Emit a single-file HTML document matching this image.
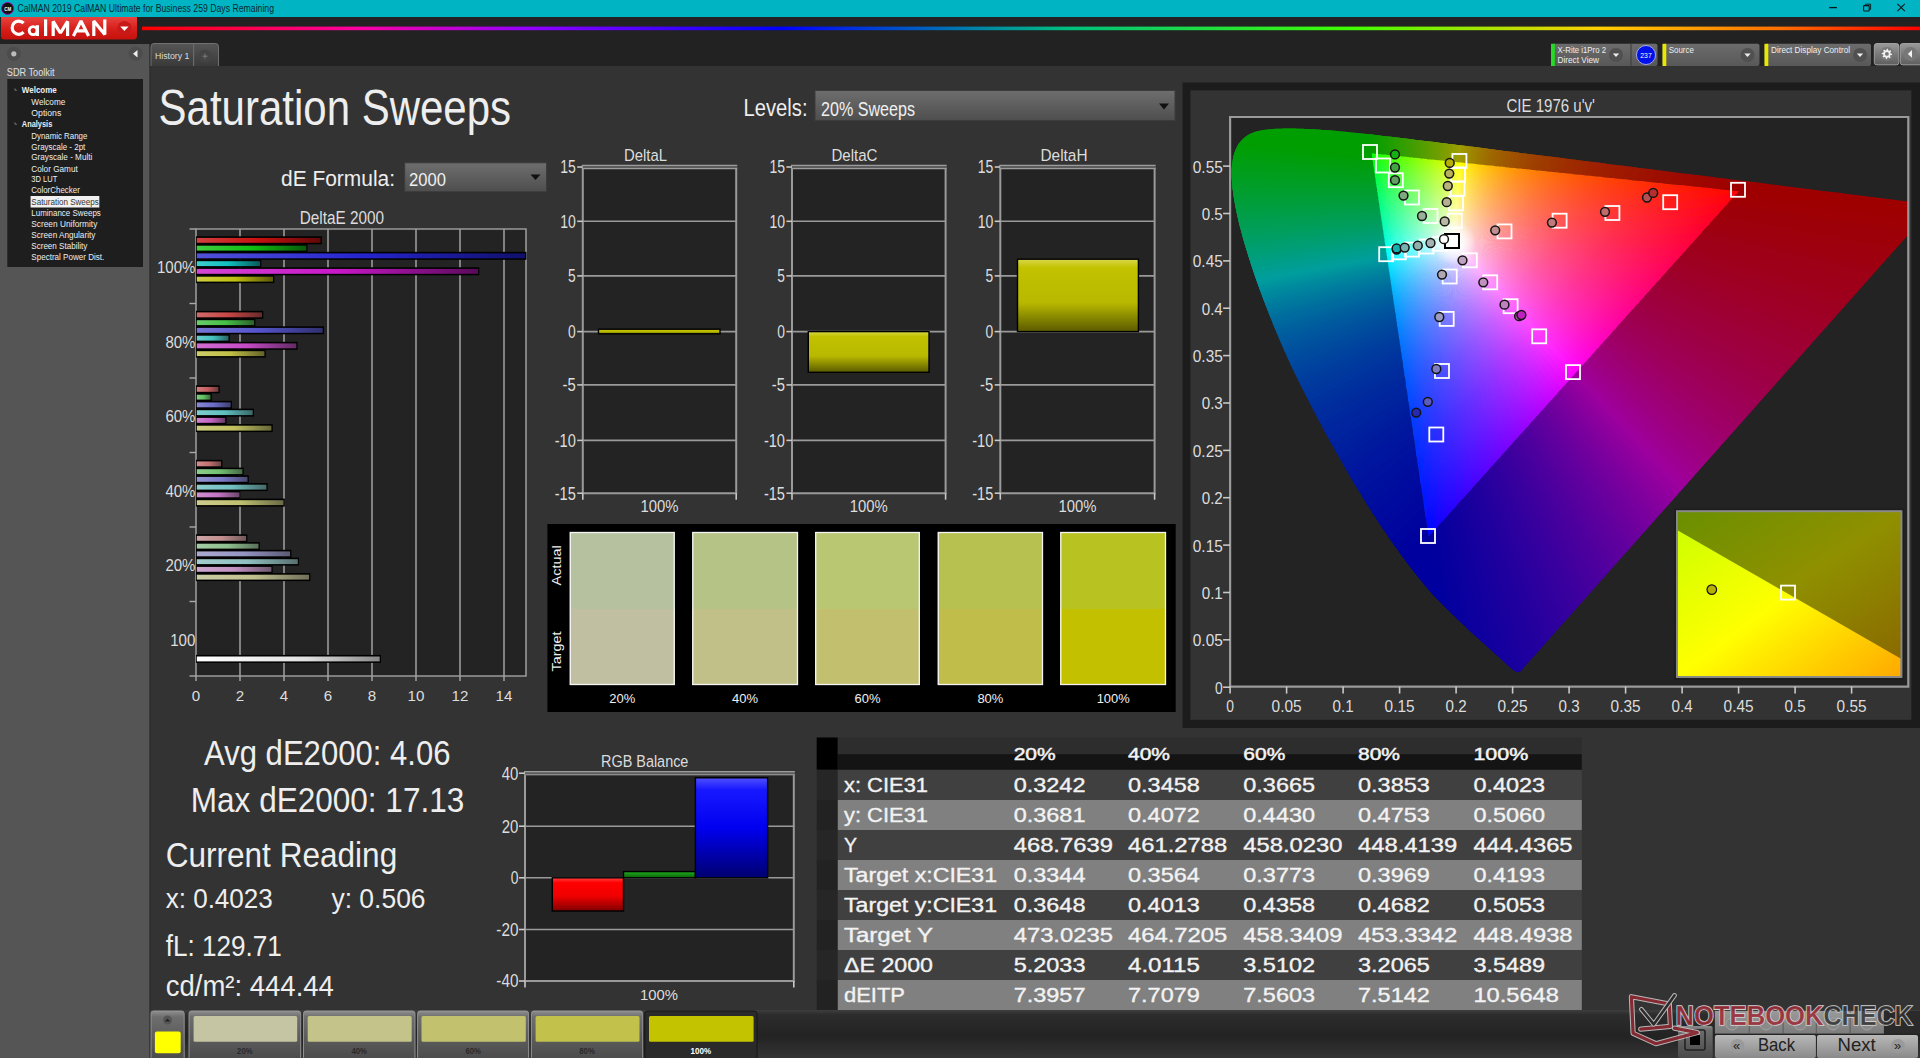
<!DOCTYPE html><html><head><meta charset="utf-8"><title>CalMAN Saturation Sweeps</title><style>html,body{margin:0;padding:0;width:1920px;height:1058px;overflow:hidden;background:#333;font-family:"Liberation Sans",sans-serif}</style></head><body><svg width="1920" height="1058" viewBox="0 0 1920 1058" style="position:absolute;left:0;top:0;z-index:1" font-family="Liberation Sans, sans-serif"><rect x="0.0" y="0.0" width="1920.0" height="1058.0" fill="#333333" /><rect x="0.0" y="17.0" width="1920.0" height="49.0" fill="#222222" /><rect x="0.0" y="0.0" width="1920.0" height="17.0" fill="#00b4c3" /><rect x="0.0" y="44.0" width="149.6" height="1014.0" fill="#555555" /><rect x="149.6" y="44.0" width="1.0" height="1014.0" fill="#2a2a2a" /><rect x="150.0" y="1010.0" width="1770.0" height="48.0" fill="url(#gBot)" /><rect x="1182.5" y="82.5" width="737.5" height="645.5" fill="#1c1c1c" /><rect x="1190.4" y="90.4" width="721.0" height="629.4" fill="#333333" /><rect x="1230.1" y="117.4" width="678.2" height="568.6" fill="#232323" /><clipPath id="chp0"><path d="M930.4 -2814.1 L1812.8 3120.7 L-1154.6 3561.8 L-2036.9 -2372.9 Z"/></clipPath><clipPath id="chp1"><path d="M-575.6 2769.0 L3432.8 -1695.6 L5665.1 308.6 L1656.7 4773.2 Z"/></clipPath><clipPath id="chp2"><path d="M4722.9 499.2 L-1245.3 -116.8 L-937.3 -3101.0 L5031.0 -2484.9 Z"/></clipPath><linearGradient id="cw0" gradientUnits="userSpaceOnUse" x1="1453.7" y1="242.6" x2="1688.9" y2="246.7"><stop offset="0" stop-color="#ffffff"/><stop offset="0.04" stop-color="#ffe0e6"/><stop offset="0.1" stop-color="#ffbcc8"/><stop offset="0.18" stop-color="#ff98aa"/><stop offset="0.3" stop-color="#ff718c"/><stop offset="0.45" stop-color="#ff4f72"/><stop offset="0.65" stop-color="#ff2e5b"/><stop offset="0.85" stop-color="#ff154b"/><stop offset="1" stop-color="#ff0242"/></linearGradient><linearGradient id="cw1" gradientUnits="userSpaceOnUse" x1="1453.7" y1="242.6" x2="1681.9" y2="254.6"><stop offset="0" stop-color="#ffffff"/><stop offset="0.04" stop-color="#ffe1e7"/><stop offset="0.1" stop-color="#ffbdcb"/><stop offset="0.18" stop-color="#ff99af"/><stop offset="0.3" stop-color="#ff7291"/><stop offset="0.45" stop-color="#ff5079"/><stop offset="0.65" stop-color="#ff2f62"/><stop offset="0.85" stop-color="#ff1553"/><stop offset="1" stop-color="#ff024a"/></linearGradient><linearGradient id="cw2" gradientUnits="userSpaceOnUse" x1="1453.7" y1="242.6" x2="1675.2" y2="262.0"><stop offset="0" stop-color="#ffffff"/><stop offset="0.04" stop-color="#ffe2e8"/><stop offset="0.1" stop-color="#ffbece"/><stop offset="0.18" stop-color="#ff9bb3"/><stop offset="0.3" stop-color="#ff7497"/><stop offset="0.45" stop-color="#ff517f"/><stop offset="0.65" stop-color="#ff3069"/><stop offset="0.85" stop-color="#ff165b"/><stop offset="1" stop-color="#ff0252"/></linearGradient><linearGradient id="cw3" gradientUnits="userSpaceOnUse" x1="1453.7" y1="242.6" x2="1668.9" y2="269.1"><stop offset="0" stop-color="#ffffff"/><stop offset="0.04" stop-color="#ffe2ea"/><stop offset="0.1" stop-color="#ffc0d1"/><stop offset="0.18" stop-color="#ff9cb7"/><stop offset="0.3" stop-color="#ff759c"/><stop offset="0.45" stop-color="#ff5385"/><stop offset="0.65" stop-color="#ff3171"/><stop offset="0.85" stop-color="#ff1662"/><stop offset="1" stop-color="#ff025a"/></linearGradient><linearGradient id="cw4" gradientUnits="userSpaceOnUse" x1="1453.7" y1="242.6" x2="1662.9" y2="275.8"><stop offset="0" stop-color="#ffffff"/><stop offset="0.04" stop-color="#ffe3eb"/><stop offset="0.1" stop-color="#ffc1d3"/><stop offset="0.18" stop-color="#ff9ebb"/><stop offset="0.3" stop-color="#ff77a2"/><stop offset="0.45" stop-color="#ff548b"/><stop offset="0.65" stop-color="#ff3278"/><stop offset="0.85" stop-color="#ff176a"/><stop offset="1" stop-color="#ff0262"/></linearGradient><linearGradient id="cw5" gradientUnits="userSpaceOnUse" x1="1453.7" y1="242.6" x2="1657.1" y2="282.2"><stop offset="0" stop-color="#ffffff"/><stop offset="0.04" stop-color="#ffe3ec"/><stop offset="0.1" stop-color="#ffc2d6"/><stop offset="0.18" stop-color="#ff9fbf"/><stop offset="0.3" stop-color="#ff78a7"/><stop offset="0.45" stop-color="#ff5591"/><stop offset="0.65" stop-color="#ff337e"/><stop offset="0.85" stop-color="#ff1771"/><stop offset="1" stop-color="#ff026a"/></linearGradient><linearGradient id="cw6" gradientUnits="userSpaceOnUse" x1="1453.7" y1="242.6" x2="1651.6" y2="288.3"><stop offset="0" stop-color="#ffffff"/><stop offset="0.04" stop-color="#ffe4ee"/><stop offset="0.1" stop-color="#ffc3d8"/><stop offset="0.18" stop-color="#ffa0c3"/><stop offset="0.3" stop-color="#ff7aac"/><stop offset="0.45" stop-color="#ff5697"/><stop offset="0.65" stop-color="#ff3485"/><stop offset="0.85" stop-color="#ff1778"/><stop offset="1" stop-color="#ff0271"/></linearGradient><linearGradient id="cw7" gradientUnits="userSpaceOnUse" x1="1453.7" y1="242.6" x2="1646.3" y2="294.2"><stop offset="0" stop-color="#ffffff"/><stop offset="0.04" stop-color="#ffe5ef"/><stop offset="0.1" stop-color="#ffc4db"/><stop offset="0.18" stop-color="#ffa2c7"/><stop offset="0.3" stop-color="#ff7bb0"/><stop offset="0.45" stop-color="#ff589d"/><stop offset="0.65" stop-color="#ff348c"/><stop offset="0.85" stop-color="#ff1880"/><stop offset="1" stop-color="#ff0279"/></linearGradient><linearGradient id="cw8" gradientUnits="userSpaceOnUse" x1="1453.7" y1="242.6" x2="1641.2" y2="299.9"><stop offset="0" stop-color="#ffffff"/><stop offset="0.04" stop-color="#ffe5f0"/><stop offset="0.1" stop-color="#ffc5dd"/><stop offset="0.18" stop-color="#ffa3ca"/><stop offset="0.3" stop-color="#ff7cb5"/><stop offset="0.45" stop-color="#ff59a3"/><stop offset="0.65" stop-color="#ff3592"/><stop offset="0.85" stop-color="#ff1887"/><stop offset="1" stop-color="#ff0280"/></linearGradient><linearGradient id="cw9" gradientUnits="userSpaceOnUse" x1="1453.7" y1="242.6" x2="1636.2" y2="305.5"><stop offset="0" stop-color="#ffffff"/><stop offset="0.04" stop-color="#ffe6f1"/><stop offset="0.1" stop-color="#ffc6e0"/><stop offset="0.18" stop-color="#ffa4ce"/><stop offset="0.3" stop-color="#ff7eba"/><stop offset="0.45" stop-color="#ff5aa9"/><stop offset="0.65" stop-color="#ff3699"/><stop offset="0.85" stop-color="#ff198e"/><stop offset="1" stop-color="#ff0288"/></linearGradient><linearGradient id="cw10" gradientUnits="userSpaceOnUse" x1="1453.7" y1="242.6" x2="1631.4" y2="310.8"><stop offset="0" stop-color="#ffffff"/><stop offset="0.04" stop-color="#ffe6f2"/><stop offset="0.1" stop-color="#ffc7e2"/><stop offset="0.18" stop-color="#ffa6d1"/><stop offset="0.3" stop-color="#ff7fbf"/><stop offset="0.45" stop-color="#ff5bae"/><stop offset="0.65" stop-color="#ff379f"/><stop offset="0.85" stop-color="#ff1995"/><stop offset="1" stop-color="#ff028f"/></linearGradient><linearGradient id="cw11" gradientUnits="userSpaceOnUse" x1="1453.7" y1="242.6" x2="1626.7" y2="316.1"><stop offset="0" stop-color="#ffffff"/><stop offset="0.04" stop-color="#ffe7f3"/><stop offset="0.1" stop-color="#ffc8e4"/><stop offset="0.18" stop-color="#ffa7d5"/><stop offset="0.3" stop-color="#ff81c3"/><stop offset="0.45" stop-color="#ff5cb4"/><stop offset="0.65" stop-color="#ff38a6"/><stop offset="0.85" stop-color="#ff1a9c"/><stop offset="1" stop-color="#ff0297"/></linearGradient><linearGradient id="cw12" gradientUnits="userSpaceOnUse" x1="1453.7" y1="242.6" x2="1622.1" y2="321.2"><stop offset="0" stop-color="#ffffff"/><stop offset="0.04" stop-color="#ffe7f4"/><stop offset="0.1" stop-color="#ffc9e7"/><stop offset="0.18" stop-color="#ffa8d8"/><stop offset="0.3" stop-color="#ff82c8"/><stop offset="0.45" stop-color="#ff5eba"/><stop offset="0.65" stop-color="#ff39ad"/><stop offset="0.85" stop-color="#ff1aa3"/><stop offset="1" stop-color="#ff029e"/></linearGradient><linearGradient id="cw13" gradientUnits="userSpaceOnUse" x1="1453.7" y1="242.6" x2="1617.6" y2="326.2"><stop offset="0" stop-color="#ffffff"/><stop offset="0.04" stop-color="#ffe8f5"/><stop offset="0.1" stop-color="#ffcae9"/><stop offset="0.18" stop-color="#ffa9dc"/><stop offset="0.3" stop-color="#ff83cd"/><stop offset="0.45" stop-color="#ff5fc0"/><stop offset="0.65" stop-color="#ff39b3"/><stop offset="0.85" stop-color="#ff1aab"/><stop offset="1" stop-color="#ff02a6"/></linearGradient><linearGradient id="cw14" gradientUnits="userSpaceOnUse" x1="1453.7" y1="242.6" x2="1613.2" y2="331.1"><stop offset="0" stop-color="#ffffff"/><stop offset="0.04" stop-color="#ffe8f6"/><stop offset="0.1" stop-color="#ffcbeb"/><stop offset="0.18" stop-color="#ffabdf"/><stop offset="0.3" stop-color="#ff85d1"/><stop offset="0.45" stop-color="#ff60c5"/><stop offset="0.65" stop-color="#ff3aba"/><stop offset="0.85" stop-color="#ff1bb2"/><stop offset="1" stop-color="#ff02ad"/></linearGradient><linearGradient id="cw15" gradientUnits="userSpaceOnUse" x1="1453.7" y1="242.6" x2="1608.9" y2="335.9"><stop offset="0" stop-color="#ffffff"/><stop offset="0.04" stop-color="#ffe9f7"/><stop offset="0.1" stop-color="#ffcced"/><stop offset="0.18" stop-color="#fface2"/><stop offset="0.3" stop-color="#ff86d6"/><stop offset="0.45" stop-color="#ff61cb"/><stop offset="0.65" stop-color="#ff3bc1"/><stop offset="0.85" stop-color="#ff1bb9"/><stop offset="1" stop-color="#ff02b5"/></linearGradient><linearGradient id="cw16" gradientUnits="userSpaceOnUse" x1="1453.7" y1="242.6" x2="1604.6" y2="340.6"><stop offset="0" stop-color="#ffffff"/><stop offset="0.04" stop-color="#ffe9f8"/><stop offset="0.1" stop-color="#ffcdef"/><stop offset="0.18" stop-color="#ffade6"/><stop offset="0.3" stop-color="#ff87db"/><stop offset="0.45" stop-color="#ff63d1"/><stop offset="0.65" stop-color="#ff3cc8"/><stop offset="0.85" stop-color="#ff1cc1"/><stop offset="1" stop-color="#ff02bd"/></linearGradient><linearGradient id="cw17" gradientUnits="userSpaceOnUse" x1="1453.7" y1="242.6" x2="1600.4" y2="345.3"><stop offset="0" stop-color="#ffffff"/><stop offset="0.04" stop-color="#ffeaf9"/><stop offset="0.1" stop-color="#ffcef1"/><stop offset="0.18" stop-color="#ffafe9"/><stop offset="0.3" stop-color="#ff89e0"/><stop offset="0.45" stop-color="#ff64d7"/><stop offset="0.65" stop-color="#ff3dcf"/><stop offset="0.85" stop-color="#ff1cc9"/><stop offset="1" stop-color="#ff02c5"/></linearGradient><linearGradient id="cw18" gradientUnits="userSpaceOnUse" x1="1453.7" y1="242.6" x2="1596.2" y2="350.0"><stop offset="0" stop-color="#ffffff"/><stop offset="0.04" stop-color="#ffeafa"/><stop offset="0.1" stop-color="#ffcff4"/><stop offset="0.18" stop-color="#ffb0ed"/><stop offset="0.3" stop-color="#ff8ae4"/><stop offset="0.45" stop-color="#ff65dd"/><stop offset="0.65" stop-color="#ff3ed6"/><stop offset="0.85" stop-color="#ff1dd1"/><stop offset="1" stop-color="#ff02ce"/></linearGradient><linearGradient id="cw19" gradientUnits="userSpaceOnUse" x1="1453.7" y1="242.6" x2="1592.0" y2="354.7"><stop offset="0" stop-color="#ffffff"/><stop offset="0.04" stop-color="#ffebfb"/><stop offset="0.1" stop-color="#ffd0f6"/><stop offset="0.18" stop-color="#ffb1f0"/><stop offset="0.3" stop-color="#ff8ce9"/><stop offset="0.45" stop-color="#ff67e3"/><stop offset="0.65" stop-color="#ff3fdd"/><stop offset="0.85" stop-color="#ff1dd9"/><stop offset="1" stop-color="#ff02d7"/></linearGradient><linearGradient id="cw20" gradientUnits="userSpaceOnUse" x1="1453.7" y1="242.6" x2="1587.9" y2="359.3"><stop offset="0" stop-color="#ffffff"/><stop offset="0.04" stop-color="#ffebfc"/><stop offset="0.1" stop-color="#ffd1f8"/><stop offset="0.18" stop-color="#ffb2f4"/><stop offset="0.3" stop-color="#ff8dee"/><stop offset="0.45" stop-color="#ff68ea"/><stop offset="0.65" stop-color="#ff40e5"/><stop offset="0.85" stop-color="#ff1ee2"/><stop offset="1" stop-color="#ff02e0"/></linearGradient><linearGradient id="cw21" gradientUnits="userSpaceOnUse" x1="1453.7" y1="242.6" x2="1583.7" y2="363.9"><stop offset="0" stop-color="#ffffff"/><stop offset="0.04" stop-color="#ffecfd"/><stop offset="0.1" stop-color="#ffd2fa"/><stop offset="0.18" stop-color="#ffb4f7"/><stop offset="0.3" stop-color="#ff8ff4"/><stop offset="0.45" stop-color="#ff6af0"/><stop offset="0.65" stop-color="#ff41ed"/><stop offset="0.85" stop-color="#ff1eea"/><stop offset="1" stop-color="#ff02e9"/></linearGradient><linearGradient id="cw22" gradientUnits="userSpaceOnUse" x1="1453.7" y1="242.6" x2="1579.6" y2="368.5"><stop offset="0" stop-color="#ffffff"/><stop offset="0.04" stop-color="#ffecfe"/><stop offset="0.1" stop-color="#ffd3fc"/><stop offset="0.18" stop-color="#ffb5fb"/><stop offset="0.3" stop-color="#ff90f9"/><stop offset="0.45" stop-color="#ff6bf7"/><stop offset="0.65" stop-color="#ff42f5"/><stop offset="0.85" stop-color="#ff1ff4"/><stop offset="1" stop-color="#ff02f3"/></linearGradient><linearGradient id="cw23" gradientUnits="userSpaceOnUse" x1="1453.7" y1="242.6" x2="1575.4" y2="373.2"><stop offset="0" stop-color="#ffffff"/><stop offset="0.04" stop-color="#ffedff"/><stop offset="0.1" stop-color="#ffd4ff"/><stop offset="0.18" stop-color="#ffb7fe"/><stop offset="0.3" stop-color="#ff92fe"/><stop offset="0.45" stop-color="#ff6dfe"/><stop offset="0.65" stop-color="#ff44fd"/><stop offset="0.85" stop-color="#ff20fd"/><stop offset="1" stop-color="#ff02fd"/></linearGradient><linearGradient id="cw24" gradientUnits="userSpaceOnUse" x1="1453.7" y1="242.6" x2="1571.2" y2="377.8"><stop offset="0" stop-color="#ffffff"/><stop offset="0.04" stop-color="#feecff"/><stop offset="0.1" stop-color="#fdd3ff"/><stop offset="0.18" stop-color="#fcb6ff"/><stop offset="0.3" stop-color="#fa91ff"/><stop offset="0.45" stop-color="#f96cff"/><stop offset="0.65" stop-color="#f843ff"/><stop offset="0.85" stop-color="#f71fff"/><stop offset="1" stop-color="#f602ff"/></linearGradient><linearGradient id="cw25" gradientUnits="userSpaceOnUse" x1="1453.7" y1="242.6" x2="1567.0" y2="382.5"><stop offset="0" stop-color="#ffffff"/><stop offset="0.04" stop-color="#fdecff"/><stop offset="0.1" stop-color="#fbd2ff"/><stop offset="0.18" stop-color="#f8b4ff"/><stop offset="0.3" stop-color="#f590ff"/><stop offset="0.45" stop-color="#f26aff"/><stop offset="0.65" stop-color="#ef42ff"/><stop offset="0.85" stop-color="#ed1fff"/><stop offset="1" stop-color="#ec02ff"/></linearGradient><linearGradient id="cw26" gradientUnits="userSpaceOnUse" x1="1453.7" y1="242.6" x2="1562.7" y2="387.3"><stop offset="0" stop-color="#ffffff"/><stop offset="0.04" stop-color="#fcebff"/><stop offset="0.1" stop-color="#f8d1ff"/><stop offset="0.18" stop-color="#f4b3ff"/><stop offset="0.3" stop-color="#f08eff"/><stop offset="0.45" stop-color="#eb69ff"/><stop offset="0.65" stop-color="#e741ff"/><stop offset="0.85" stop-color="#e41eff"/><stop offset="1" stop-color="#e202ff"/></linearGradient><linearGradient id="cw27" gradientUnits="userSpaceOnUse" x1="1453.7" y1="242.6" x2="1558.4" y2="392.1"><stop offset="0" stop-color="#ffffff"/><stop offset="0.04" stop-color="#fbebff"/><stop offset="0.1" stop-color="#f6d0ff"/><stop offset="0.18" stop-color="#f1b2ff"/><stop offset="0.3" stop-color="#ea8dff"/><stop offset="0.45" stop-color="#e568ff"/><stop offset="0.65" stop-color="#df40ff"/><stop offset="0.85" stop-color="#db1eff"/><stop offset="1" stop-color="#d902ff"/></linearGradient><linearGradient id="cw28" gradientUnits="userSpaceOnUse" x1="1453.7" y1="242.6" x2="1554.0" y2="397.0"><stop offset="0" stop-color="#ffffff"/><stop offset="0.04" stop-color="#faeaff"/><stop offset="0.1" stop-color="#f4cfff"/><stop offset="0.18" stop-color="#edb1ff"/><stop offset="0.3" stop-color="#e58bff"/><stop offset="0.45" stop-color="#de66ff"/><stop offset="0.65" stop-color="#d73fff"/><stop offset="0.85" stop-color="#d21dff"/><stop offset="1" stop-color="#cf02ff"/></linearGradient><linearGradient id="cw29" gradientUnits="userSpaceOnUse" x1="1453.7" y1="242.6" x2="1549.5" y2="402.0"><stop offset="0" stop-color="#ffffff"/><stop offset="0.04" stop-color="#f9eaff"/><stop offset="0.1" stop-color="#f1ceff"/><stop offset="0.18" stop-color="#e9afff"/><stop offset="0.3" stop-color="#e08aff"/><stop offset="0.45" stop-color="#d765ff"/><stop offset="0.65" stop-color="#cf3eff"/><stop offset="0.85" stop-color="#c91dff"/><stop offset="1" stop-color="#c602ff"/></linearGradient><linearGradient id="cw30" gradientUnits="userSpaceOnUse" x1="1453.7" y1="242.6" x2="1544.9" y2="407.2"><stop offset="0" stop-color="#ffffff"/><stop offset="0.04" stop-color="#f8e9ff"/><stop offset="0.1" stop-color="#efcdff"/><stop offset="0.18" stop-color="#e6aeff"/><stop offset="0.3" stop-color="#db89ff"/><stop offset="0.45" stop-color="#d164ff"/><stop offset="0.65" stop-color="#c73dff"/><stop offset="0.85" stop-color="#c01cff"/><stop offset="1" stop-color="#bc02ff"/></linearGradient><linearGradient id="cw31" gradientUnits="userSpaceOnUse" x1="1453.7" y1="242.6" x2="1540.2" y2="412.4"><stop offset="0" stop-color="#ffffff"/><stop offset="0.04" stop-color="#f7e9ff"/><stop offset="0.1" stop-color="#edcdff"/><stop offset="0.18" stop-color="#e2adff"/><stop offset="0.3" stop-color="#d587ff"/><stop offset="0.45" stop-color="#ca62ff"/><stop offset="0.65" stop-color="#bf3cff"/><stop offset="0.85" stop-color="#b81cff"/><stop offset="1" stop-color="#b302ff"/></linearGradient><linearGradient id="cw32" gradientUnits="userSpaceOnUse" x1="1453.7" y1="242.6" x2="1535.4" y2="417.8"><stop offset="0" stop-color="#ffffff"/><stop offset="0.04" stop-color="#f6e8ff"/><stop offset="0.1" stop-color="#eaccff"/><stop offset="0.18" stop-color="#deacff"/><stop offset="0.3" stop-color="#d086ff"/><stop offset="0.45" stop-color="#c361ff"/><stop offset="0.65" stop-color="#b73bff"/><stop offset="0.85" stop-color="#af1bff"/><stop offset="1" stop-color="#aa02ff"/></linearGradient><linearGradient id="cw33" gradientUnits="userSpaceOnUse" x1="1453.7" y1="242.6" x2="1530.4" y2="423.3"><stop offset="0" stop-color="#ffffff"/><stop offset="0.04" stop-color="#f5e8ff"/><stop offset="0.1" stop-color="#e8cbff"/><stop offset="0.18" stop-color="#daaaff"/><stop offset="0.3" stop-color="#ca84ff"/><stop offset="0.45" stop-color="#bd60ff"/><stop offset="0.65" stop-color="#af3aff"/><stop offset="0.85" stop-color="#a61bff"/><stop offset="1" stop-color="#a102ff"/></linearGradient><linearGradient id="cw34" gradientUnits="userSpaceOnUse" x1="1453.7" y1="242.6" x2="1525.3" y2="429.0"><stop offset="0" stop-color="#ffffff"/><stop offset="0.04" stop-color="#f3e7ff"/><stop offset="0.1" stop-color="#e5caff"/><stop offset="0.18" stop-color="#d6a9ff"/><stop offset="0.3" stop-color="#c583ff"/><stop offset="0.45" stop-color="#b65fff"/><stop offset="0.65" stop-color="#a839ff"/><stop offset="0.85" stop-color="#9d1aff"/><stop offset="1" stop-color="#9802ff"/></linearGradient><linearGradient id="cw35" gradientUnits="userSpaceOnUse" x1="1453.7" y1="242.6" x2="1519.9" y2="435.0"><stop offset="0" stop-color="#ffffff"/><stop offset="0.04" stop-color="#f2e7ff"/><stop offset="0.1" stop-color="#e2c9ff"/><stop offset="0.18" stop-color="#d2a8ff"/><stop offset="0.3" stop-color="#bf82ff"/><stop offset="0.45" stop-color="#af5dff"/><stop offset="0.65" stop-color="#a038ff"/><stop offset="0.85" stop-color="#951aff"/><stop offset="1" stop-color="#8f02ff"/></linearGradient><linearGradient id="cw36" gradientUnits="userSpaceOnUse" x1="1453.7" y1="242.6" x2="1514.4" y2="441.1"><stop offset="0" stop-color="#ffffff"/><stop offset="0.04" stop-color="#f1e6ff"/><stop offset="0.1" stop-color="#e0c8ff"/><stop offset="0.18" stop-color="#cea6ff"/><stop offset="0.3" stop-color="#ba80ff"/><stop offset="0.45" stop-color="#a85cff"/><stop offset="0.65" stop-color="#9737ff"/><stop offset="0.85" stop-color="#8c19ff"/><stop offset="1" stop-color="#8502ff"/></linearGradient><linearGradient id="cw37" gradientUnits="userSpaceOnUse" x1="1453.7" y1="242.6" x2="1508.6" y2="447.6"><stop offset="0" stop-color="#ffffff"/><stop offset="0.04" stop-color="#f0e6ff"/><stop offset="0.1" stop-color="#ddc6ff"/><stop offset="0.18" stop-color="#c9a5ff"/><stop offset="0.3" stop-color="#b47fff"/><stop offset="0.45" stop-color="#a15bff"/><stop offset="0.65" stop-color="#8f37ff"/><stop offset="0.85" stop-color="#8319ff"/><stop offset="1" stop-color="#7c02ff"/></linearGradient><linearGradient id="cw38" gradientUnits="userSpaceOnUse" x1="1453.7" y1="242.6" x2="1502.6" y2="454.3"><stop offset="0" stop-color="#ffffff"/><stop offset="0.04" stop-color="#eee5ff"/><stop offset="0.1" stop-color="#dac5ff"/><stop offset="0.18" stop-color="#c5a4ff"/><stop offset="0.3" stop-color="#ae7dff"/><stop offset="0.45" stop-color="#9a59ff"/><stop offset="0.65" stop-color="#8736ff"/><stop offset="0.85" stop-color="#7a18ff"/><stop offset="1" stop-color="#7202ff"/></linearGradient><linearGradient id="cw39" gradientUnits="userSpaceOnUse" x1="1453.7" y1="242.6" x2="1496.2" y2="461.4"><stop offset="0" stop-color="#ffffff"/><stop offset="0.04" stop-color="#ede5ff"/><stop offset="0.1" stop-color="#d7c4ff"/><stop offset="0.18" stop-color="#c1a2ff"/><stop offset="0.3" stop-color="#a87cff"/><stop offset="0.45" stop-color="#9258ff"/><stop offset="0.65" stop-color="#7e35ff"/><stop offset="0.85" stop-color="#7018ff"/><stop offset="1" stop-color="#6902ff"/></linearGradient><linearGradient id="cw40" gradientUnits="userSpaceOnUse" x1="1453.7" y1="242.6" x2="1489.5" y2="468.8"><stop offset="0" stop-color="#ffffff"/><stop offset="0.04" stop-color="#ebe4ff"/><stop offset="0.1" stop-color="#d4c3ff"/><stop offset="0.18" stop-color="#bca1ff"/><stop offset="0.3" stop-color="#a27aff"/><stop offset="0.45" stop-color="#8b57ff"/><stop offset="0.65" stop-color="#7634ff"/><stop offset="0.85" stop-color="#6717ff"/><stop offset="1" stop-color="#5f02ff"/></linearGradient><linearGradient id="cw41" gradientUnits="userSpaceOnUse" x1="1453.7" y1="242.6" x2="1482.5" y2="476.7"><stop offset="0" stop-color="#ffffff"/><stop offset="0.04" stop-color="#eae3ff"/><stop offset="0.1" stop-color="#d1c2ff"/><stop offset="0.18" stop-color="#b79fff"/><stop offset="0.3" stop-color="#9b78ff"/><stop offset="0.45" stop-color="#8355ff"/><stop offset="0.65" stop-color="#6d33ff"/><stop offset="0.85" stop-color="#5d17ff"/><stop offset="1" stop-color="#5402ff"/></linearGradient><linearGradient id="cw42" gradientUnits="userSpaceOnUse" x1="1453.7" y1="242.6" x2="1474.9" y2="485.1"><stop offset="0" stop-color="#ffffff"/><stop offset="0.04" stop-color="#e8e3ff"/><stop offset="0.1" stop-color="#cdc0ff"/><stop offset="0.18" stop-color="#b29dff"/><stop offset="0.3" stop-color="#9477ff"/><stop offset="0.45" stop-color="#7b54ff"/><stop offset="0.65" stop-color="#6332ff"/><stop offset="0.85" stop-color="#5317ff"/><stop offset="1" stop-color="#4902ff"/></linearGradient><linearGradient id="cw43" gradientUnits="userSpaceOnUse" x1="1453.7" y1="242.6" x2="1466.9" y2="494.1"><stop offset="0" stop-color="#ffffff"/><stop offset="0.04" stop-color="#e6e2ff"/><stop offset="0.1" stop-color="#c9bfff"/><stop offset="0.18" stop-color="#ac9cff"/><stop offset="0.3" stop-color="#8d75ff"/><stop offset="0.45" stop-color="#7252ff"/><stop offset="0.65" stop-color="#5931ff"/><stop offset="0.85" stop-color="#4816ff"/><stop offset="1" stop-color="#3e02ff"/></linearGradient><linearGradient id="cw44" gradientUnits="userSpaceOnUse" x1="1453.7" y1="242.6" x2="1458.3" y2="503.7"><stop offset="0" stop-color="#ffffff"/><stop offset="0.04" stop-color="#e5e1ff"/><stop offset="0.1" stop-color="#c6beff"/><stop offset="0.18" stop-color="#a79aff"/><stop offset="0.3" stop-color="#8673ff"/><stop offset="0.45" stop-color="#6951ff"/><stop offset="0.65" stop-color="#4f30ff"/><stop offset="0.85" stop-color="#3c16ff"/><stop offset="1" stop-color="#3201ff"/></linearGradient><linearGradient id="cw45" gradientUnits="userSpaceOnUse" x1="1453.7" y1="242.6" x2="1449.0" y2="514.0"><stop offset="0" stop-color="#ffffff"/><stop offset="0.04" stop-color="#e3e0ff"/><stop offset="0.1" stop-color="#c2bcff"/><stop offset="0.18" stop-color="#a198ff"/><stop offset="0.3" stop-color="#7e71ff"/><stop offset="0.45" stop-color="#604fff"/><stop offset="0.65" stop-color="#442fff"/><stop offset="0.85" stop-color="#3015ff"/><stop offset="1" stop-color="#2501ff"/></linearGradient><linearGradient id="cw46" gradientUnits="userSpaceOnUse" x1="1453.7" y1="242.6" x2="1438.9" y2="525.2"><stop offset="0" stop-color="#ffffff"/><stop offset="0.04" stop-color="#e0dfff"/><stop offset="0.1" stop-color="#bdbbff"/><stop offset="0.18" stop-color="#9a96ff"/><stop offset="0.3" stop-color="#766fff"/><stop offset="0.45" stop-color="#564eff"/><stop offset="0.65" stop-color="#382eff"/><stop offset="0.85" stop-color="#2314ff"/><stop offset="1" stop-color="#1501ff"/></linearGradient><linearGradient id="cw47" gradientUnits="userSpaceOnUse" x1="1453.7" y1="242.6" x2="1428.2" y2="534.1"><stop offset="0" stop-color="#ffffff"/><stop offset="0.04" stop-color="#dedfff"/><stop offset="0.1" stop-color="#b9b9ff"/><stop offset="0.18" stop-color="#9495ff"/><stop offset="0.3" stop-color="#6e6eff"/><stop offset="0.45" stop-color="#4c4dff"/><stop offset="0.65" stop-color="#2d2dff"/><stop offset="0.85" stop-color="#1415ff"/><stop offset="1" stop-color="#0103ff"/></linearGradient><linearGradient id="cw48" gradientUnits="userSpaceOnUse" x1="1453.7" y1="242.6" x2="1422.6" y2="496.2"><stop offset="0" stop-color="#ffffff"/><stop offset="0.04" stop-color="#e1e3ff"/><stop offset="0.1" stop-color="#bec1ff"/><stop offset="0.18" stop-color="#9a9fff"/><stop offset="0.3" stop-color="#747bff"/><stop offset="0.45" stop-color="#515aff"/><stop offset="0.65" stop-color="#303cff"/><stop offset="0.85" stop-color="#1625ff"/><stop offset="1" stop-color="#0117ff"/></linearGradient><linearGradient id="cw49" gradientUnits="userSpaceOnUse" x1="1453.7" y1="242.6" x2="1418.2" y2="466.8"><stop offset="0" stop-color="#ffffff"/><stop offset="0.04" stop-color="#e3e6ff"/><stop offset="0.1" stop-color="#c2c7ff"/><stop offset="0.18" stop-color="#a0a8ff"/><stop offset="0.3" stop-color="#7985ff"/><stop offset="0.45" stop-color="#5666ff"/><stop offset="0.65" stop-color="#3348ff"/><stop offset="0.85" stop-color="#1732ff"/><stop offset="1" stop-color="#0125ff"/></linearGradient><linearGradient id="cw50" gradientUnits="userSpaceOnUse" x1="1453.7" y1="242.6" x2="1414.7" y2="443.3"><stop offset="0" stop-color="#ffffff"/><stop offset="0.04" stop-color="#e5e8ff"/><stop offset="0.1" stop-color="#c6cdff"/><stop offset="0.18" stop-color="#a4afff"/><stop offset="0.3" stop-color="#7d8eff"/><stop offset="0.45" stop-color="#5a70ff"/><stop offset="0.65" stop-color="#3653ff"/><stop offset="0.85" stop-color="#183eff"/><stop offset="1" stop-color="#0131ff"/></linearGradient><linearGradient id="cw51" gradientUnits="userSpaceOnUse" x1="1453.7" y1="242.6" x2="1411.8" y2="424.0"><stop offset="0" stop-color="#ffffff"/><stop offset="0.04" stop-color="#e7ebff"/><stop offset="0.1" stop-color="#c8d1ff"/><stop offset="0.18" stop-color="#a8b6ff"/><stop offset="0.3" stop-color="#8196ff"/><stop offset="0.45" stop-color="#5d79ff"/><stop offset="0.65" stop-color="#385dff"/><stop offset="0.85" stop-color="#1a48ff"/><stop offset="1" stop-color="#023cff"/></linearGradient><linearGradient id="cw52" gradientUnits="userSpaceOnUse" x1="1453.7" y1="242.6" x2="1409.4" y2="407.9"><stop offset="0" stop-color="#ffffff"/><stop offset="0.04" stop-color="#e8ecff"/><stop offset="0.1" stop-color="#cbd5ff"/><stop offset="0.18" stop-color="#abbbff"/><stop offset="0.3" stop-color="#859dff"/><stop offset="0.45" stop-color="#6081ff"/><stop offset="0.65" stop-color="#3b66ff"/><stop offset="0.85" stop-color="#1b51ff"/><stop offset="1" stop-color="#0245ff"/></linearGradient><linearGradient id="cw53" gradientUnits="userSpaceOnUse" x1="1453.7" y1="242.6" x2="1407.4" y2="394.1"><stop offset="0" stop-color="#ffffff"/><stop offset="0.04" stop-color="#e9eeff"/><stop offset="0.1" stop-color="#cdd8ff"/><stop offset="0.18" stop-color="#aec0ff"/><stop offset="0.3" stop-color="#88a4ff"/><stop offset="0.45" stop-color="#6389ff"/><stop offset="0.65" stop-color="#3d6eff"/><stop offset="0.85" stop-color="#1c5aff"/><stop offset="1" stop-color="#024eff"/></linearGradient><linearGradient id="cw54" gradientUnits="userSpaceOnUse" x1="1453.7" y1="242.6" x2="1405.6" y2="382.3"><stop offset="0" stop-color="#ffffff"/><stop offset="0.04" stop-color="#eaefff"/><stop offset="0.1" stop-color="#cfdbff"/><stop offset="0.18" stop-color="#b0c4ff"/><stop offset="0.3" stop-color="#8ba9ff"/><stop offset="0.45" stop-color="#668fff"/><stop offset="0.65" stop-color="#3f75ff"/><stop offset="0.85" stop-color="#1d62ff"/><stop offset="1" stop-color="#0256ff"/></linearGradient><linearGradient id="cw55" gradientUnits="userSpaceOnUse" x1="1453.7" y1="242.6" x2="1404.1" y2="371.9"><stop offset="0" stop-color="#ffffff"/><stop offset="0.04" stop-color="#ebf1ff"/><stop offset="0.1" stop-color="#d1deff"/><stop offset="0.18" stop-color="#b3c8ff"/><stop offset="0.3" stop-color="#8eafff"/><stop offset="0.45" stop-color="#6996ff"/><stop offset="0.65" stop-color="#417dff"/><stop offset="0.85" stop-color="#1e69ff"/><stop offset="1" stop-color="#025eff"/></linearGradient><linearGradient id="cw56" gradientUnits="userSpaceOnUse" x1="1453.7" y1="242.6" x2="1402.7" y2="362.7"><stop offset="0" stop-color="#ffffff"/><stop offset="0.04" stop-color="#ecf2ff"/><stop offset="0.1" stop-color="#d2e0ff"/><stop offset="0.18" stop-color="#b5ccff"/><stop offset="0.3" stop-color="#90b4ff"/><stop offset="0.45" stop-color="#6b9cff"/><stop offset="0.65" stop-color="#4283ff"/><stop offset="0.85" stop-color="#1f70ff"/><stop offset="1" stop-color="#0265ff"/></linearGradient><linearGradient id="cw57" gradientUnits="userSpaceOnUse" x1="1453.7" y1="242.6" x2="1401.5" y2="354.6"><stop offset="0" stop-color="#ffffff"/><stop offset="0.04" stop-color="#ecf3ff"/><stop offset="0.1" stop-color="#d4e2ff"/><stop offset="0.18" stop-color="#b7cfff"/><stop offset="0.3" stop-color="#93b8ff"/><stop offset="0.45" stop-color="#6da1ff"/><stop offset="0.65" stop-color="#4489ff"/><stop offset="0.85" stop-color="#2077ff"/><stop offset="1" stop-color="#026cff"/></linearGradient><linearGradient id="cw58" gradientUnits="userSpaceOnUse" x1="1453.7" y1="242.6" x2="1400.4" y2="347.2"><stop offset="0" stop-color="#ffffff"/><stop offset="0.04" stop-color="#edf3ff"/><stop offset="0.1" stop-color="#d5e4ff"/><stop offset="0.18" stop-color="#b9d2ff"/><stop offset="0.3" stop-color="#95bcff"/><stop offset="0.45" stop-color="#6fa6ff"/><stop offset="0.65" stop-color="#468fff"/><stop offset="0.85" stop-color="#217dff"/><stop offset="1" stop-color="#0272ff"/></linearGradient><linearGradient id="cw59" gradientUnits="userSpaceOnUse" x1="1453.7" y1="242.6" x2="1399.4" y2="340.6"><stop offset="0" stop-color="#ffffff"/><stop offset="0.04" stop-color="#eef4ff"/><stop offset="0.1" stop-color="#d6e6ff"/><stop offset="0.18" stop-color="#bad5ff"/><stop offset="0.3" stop-color="#97c0ff"/><stop offset="0.45" stop-color="#71abff"/><stop offset="0.65" stop-color="#4795ff"/><stop offset="0.85" stop-color="#2283ff"/><stop offset="1" stop-color="#0279ff"/></linearGradient><linearGradient id="cw60" gradientUnits="userSpaceOnUse" x1="1453.7" y1="242.6" x2="1398.5" y2="334.5"><stop offset="0" stop-color="#ffffff"/><stop offset="0.04" stop-color="#eef5ff"/><stop offset="0.1" stop-color="#d7e8ff"/><stop offset="0.18" stop-color="#bcd8ff"/><stop offset="0.3" stop-color="#99c4ff"/><stop offset="0.45" stop-color="#73afff"/><stop offset="0.65" stop-color="#499aff"/><stop offset="0.85" stop-color="#2289ff"/><stop offset="1" stop-color="#027fff"/></linearGradient><linearGradient id="cw61" gradientUnits="userSpaceOnUse" x1="1453.7" y1="242.6" x2="1397.7" y2="328.9"><stop offset="0" stop-color="#ffffff"/><stop offset="0.04" stop-color="#eff6ff"/><stop offset="0.1" stop-color="#d8e9ff"/><stop offset="0.18" stop-color="#bddaff"/><stop offset="0.3" stop-color="#9ac7ff"/><stop offset="0.45" stop-color="#75b4ff"/><stop offset="0.65" stop-color="#4a9fff"/><stop offset="0.85" stop-color="#238fff"/><stop offset="1" stop-color="#0285ff"/></linearGradient><linearGradient id="cw62" gradientUnits="userSpaceOnUse" x1="1453.7" y1="242.6" x2="1396.9" y2="323.7"><stop offset="0" stop-color="#ffffff"/><stop offset="0.04" stop-color="#eff6ff"/><stop offset="0.1" stop-color="#d9eaff"/><stop offset="0.18" stop-color="#bfdcff"/><stop offset="0.3" stop-color="#9ccaff"/><stop offset="0.45" stop-color="#77b8ff"/><stop offset="0.65" stop-color="#4ca4ff"/><stop offset="0.85" stop-color="#2494ff"/><stop offset="1" stop-color="#028aff"/></linearGradient><linearGradient id="cw63" gradientUnits="userSpaceOnUse" x1="1453.7" y1="242.6" x2="1396.2" y2="318.9"><stop offset="0" stop-color="#ffffff"/><stop offset="0.04" stop-color="#eff7ff"/><stop offset="0.1" stop-color="#daecff"/><stop offset="0.18" stop-color="#c0dfff"/><stop offset="0.3" stop-color="#9eceff"/><stop offset="0.45" stop-color="#78bcff"/><stop offset="0.65" stop-color="#4da9ff"/><stop offset="0.85" stop-color="#2599ff"/><stop offset="1" stop-color="#0290ff"/></linearGradient><linearGradient id="cw64" gradientUnits="userSpaceOnUse" x1="1453.7" y1="242.6" x2="1395.6" y2="314.5"><stop offset="0" stop-color="#ffffff"/><stop offset="0.04" stop-color="#f0f7ff"/><stop offset="0.1" stop-color="#dbedff"/><stop offset="0.18" stop-color="#c1e1ff"/><stop offset="0.3" stop-color="#9fd0ff"/><stop offset="0.45" stop-color="#7ac0ff"/><stop offset="0.65" stop-color="#4eadff"/><stop offset="0.85" stop-color="#259eff"/><stop offset="1" stop-color="#0295ff"/></linearGradient><linearGradient id="cw65" gradientUnits="userSpaceOnUse" x1="1453.7" y1="242.6" x2="1394.9" y2="310.3"><stop offset="0" stop-color="#ffffff"/><stop offset="0.04" stop-color="#f0f8ff"/><stop offset="0.1" stop-color="#dceeff"/><stop offset="0.18" stop-color="#c3e3ff"/><stop offset="0.3" stop-color="#a1d3ff"/><stop offset="0.45" stop-color="#7bc3ff"/><stop offset="0.65" stop-color="#4fb2ff"/><stop offset="0.85" stop-color="#26a3ff"/><stop offset="1" stop-color="#029aff"/></linearGradient><linearGradient id="cw66" gradientUnits="userSpaceOnUse" x1="1453.7" y1="242.6" x2="1394.3" y2="306.3"><stop offset="0" stop-color="#ffffff"/><stop offset="0.04" stop-color="#f1f8ff"/><stop offset="0.1" stop-color="#dcefff"/><stop offset="0.18" stop-color="#c4e4ff"/><stop offset="0.3" stop-color="#a2d6ff"/><stop offset="0.45" stop-color="#7dc7ff"/><stop offset="0.65" stop-color="#51b6ff"/><stop offset="0.85" stop-color="#27a8ff"/><stop offset="1" stop-color="#039fff"/></linearGradient><linearGradient id="cw67" gradientUnits="userSpaceOnUse" x1="1453.7" y1="242.6" x2="1393.8" y2="302.6"><stop offset="0" stop-color="#ffffff"/><stop offset="0.04" stop-color="#f1f9ff"/><stop offset="0.1" stop-color="#ddf0ff"/><stop offset="0.18" stop-color="#c5e6ff"/><stop offset="0.3" stop-color="#a4d9ff"/><stop offset="0.45" stop-color="#7ecaff"/><stop offset="0.65" stop-color="#52baff"/><stop offset="0.85" stop-color="#27adff"/><stop offset="1" stop-color="#03a4ff"/></linearGradient><linearGradient id="cw68" gradientUnits="userSpaceOnUse" x1="1453.7" y1="242.6" x2="1393.3" y2="299.0"><stop offset="0" stop-color="#ffffff"/><stop offset="0.04" stop-color="#f1f9ff"/><stop offset="0.1" stop-color="#def2ff"/><stop offset="0.18" stop-color="#c6e8ff"/><stop offset="0.3" stop-color="#a5dbff"/><stop offset="0.45" stop-color="#80cdff"/><stop offset="0.65" stop-color="#53beff"/><stop offset="0.85" stop-color="#28b1ff"/><stop offset="1" stop-color="#03a9ff"/></linearGradient><linearGradient id="cw69" gradientUnits="userSpaceOnUse" x1="1453.7" y1="242.6" x2="1392.8" y2="295.6"><stop offset="0" stop-color="#ffffff"/><stop offset="0.04" stop-color="#f1faff"/><stop offset="0.1" stop-color="#dff2ff"/><stop offset="0.18" stop-color="#c7eaff"/><stop offset="0.3" stop-color="#a6deff"/><stop offset="0.45" stop-color="#81d1ff"/><stop offset="0.65" stop-color="#54c2ff"/><stop offset="0.85" stop-color="#29b6ff"/><stop offset="1" stop-color="#03aeff"/></linearGradient><linearGradient id="cw70" gradientUnits="userSpaceOnUse" x1="1453.7" y1="242.6" x2="1392.3" y2="292.4"><stop offset="0" stop-color="#ffffff"/><stop offset="0.04" stop-color="#f2faff"/><stop offset="0.1" stop-color="#dff3ff"/><stop offset="0.18" stop-color="#c8ebff"/><stop offset="0.3" stop-color="#a7e0ff"/><stop offset="0.45" stop-color="#83d4ff"/><stop offset="0.65" stop-color="#55c6ff"/><stop offset="0.85" stop-color="#29bbff"/><stop offset="1" stop-color="#03b3ff"/></linearGradient><linearGradient id="cw71" gradientUnits="userSpaceOnUse" x1="1453.7" y1="242.6" x2="1391.8" y2="289.3"><stop offset="0" stop-color="#ffffff"/><stop offset="0.04" stop-color="#f2fbff"/><stop offset="0.1" stop-color="#e0f4ff"/><stop offset="0.18" stop-color="#c9edff"/><stop offset="0.3" stop-color="#a9e2ff"/><stop offset="0.45" stop-color="#84d7ff"/><stop offset="0.65" stop-color="#56caff"/><stop offset="0.85" stop-color="#2abfff"/><stop offset="1" stop-color="#03b8ff"/></linearGradient><linearGradient id="cw72" gradientUnits="userSpaceOnUse" x1="1453.7" y1="242.6" x2="1391.4" y2="286.3"><stop offset="0" stop-color="#ffffff"/><stop offset="0.04" stop-color="#f2fbff"/><stop offset="0.1" stop-color="#e0f5ff"/><stop offset="0.18" stop-color="#caeeff"/><stop offset="0.3" stop-color="#aae5ff"/><stop offset="0.45" stop-color="#85daff"/><stop offset="0.65" stop-color="#58ceff"/><stop offset="0.85" stop-color="#2bc4ff"/><stop offset="1" stop-color="#03bdff"/></linearGradient><linearGradient id="cw73" gradientUnits="userSpaceOnUse" x1="1453.7" y1="242.6" x2="1390.9" y2="283.4"><stop offset="0" stop-color="#ffffff"/><stop offset="0.04" stop-color="#f3fbff"/><stop offset="0.1" stop-color="#e1f6ff"/><stop offset="0.18" stop-color="#cbf0ff"/><stop offset="0.3" stop-color="#abe7ff"/><stop offset="0.45" stop-color="#86ddff"/><stop offset="0.65" stop-color="#59d2ff"/><stop offset="0.85" stop-color="#2bc8ff"/><stop offset="1" stop-color="#03c2ff"/></linearGradient><linearGradient id="cw74" gradientUnits="userSpaceOnUse" x1="1453.7" y1="242.6" x2="1390.5" y2="280.6"><stop offset="0" stop-color="#ffffff"/><stop offset="0.04" stop-color="#f3fcff"/><stop offset="0.1" stop-color="#e1f7ff"/><stop offset="0.18" stop-color="#cbf1ff"/><stop offset="0.3" stop-color="#ace9ff"/><stop offset="0.45" stop-color="#88e0ff"/><stop offset="0.65" stop-color="#5ad6ff"/><stop offset="0.85" stop-color="#2ccdff"/><stop offset="1" stop-color="#03c7ff"/></linearGradient><linearGradient id="cw75" gradientUnits="userSpaceOnUse" x1="1453.7" y1="242.6" x2="1390.1" y2="277.9"><stop offset="0" stop-color="#ffffff"/><stop offset="0.04" stop-color="#f3fcff"/><stop offset="0.1" stop-color="#e2f8ff"/><stop offset="0.18" stop-color="#ccf2ff"/><stop offset="0.3" stop-color="#adebff"/><stop offset="0.45" stop-color="#89e3ff"/><stop offset="0.65" stop-color="#5bdaff"/><stop offset="0.85" stop-color="#2dd1ff"/><stop offset="1" stop-color="#03ccff"/></linearGradient><linearGradient id="cw76" gradientUnits="userSpaceOnUse" x1="1453.7" y1="242.6" x2="1389.7" y2="275.2"><stop offset="0" stop-color="#ffffff"/><stop offset="0.04" stop-color="#f3fcff"/><stop offset="0.1" stop-color="#e3f9ff"/><stop offset="0.18" stop-color="#cdf4ff"/><stop offset="0.3" stop-color="#aeedff"/><stop offset="0.45" stop-color="#8ae6ff"/><stop offset="0.65" stop-color="#5cddff"/><stop offset="0.85" stop-color="#2dd6ff"/><stop offset="1" stop-color="#03d1ff"/></linearGradient><linearGradient id="cw77" gradientUnits="userSpaceOnUse" x1="1453.7" y1="242.6" x2="1389.3" y2="272.7"><stop offset="0" stop-color="#ffffff"/><stop offset="0.04" stop-color="#f4fdff"/><stop offset="0.1" stop-color="#e3f9ff"/><stop offset="0.18" stop-color="#cef5ff"/><stop offset="0.3" stop-color="#b0efff"/><stop offset="0.45" stop-color="#8be9ff"/><stop offset="0.65" stop-color="#5de1ff"/><stop offset="0.85" stop-color="#2edaff"/><stop offset="1" stop-color="#03d6ff"/></linearGradient><linearGradient id="cw78" gradientUnits="userSpaceOnUse" x1="1453.7" y1="242.6" x2="1389.0" y2="270.1"><stop offset="0" stop-color="#ffffff"/><stop offset="0.04" stop-color="#f4fdff"/><stop offset="0.1" stop-color="#e4faff"/><stop offset="0.18" stop-color="#cff7ff"/><stop offset="0.3" stop-color="#b1f2ff"/><stop offset="0.45" stop-color="#8decff"/><stop offset="0.65" stop-color="#5ee5ff"/><stop offset="0.85" stop-color="#2fdfff"/><stop offset="1" stop-color="#03dbff"/></linearGradient><linearGradient id="cw79" gradientUnits="userSpaceOnUse" x1="1453.7" y1="242.6" x2="1388.6" y2="267.6"><stop offset="0" stop-color="#ffffff"/><stop offset="0.04" stop-color="#f4fdff"/><stop offset="0.1" stop-color="#e4fbff"/><stop offset="0.18" stop-color="#d0f8ff"/><stop offset="0.3" stop-color="#b2f4ff"/><stop offset="0.45" stop-color="#8eefff"/><stop offset="0.65" stop-color="#5fe9ff"/><stop offset="0.85" stop-color="#2fe4ff"/><stop offset="1" stop-color="#03e0ff"/></linearGradient><linearGradient id="cw80" gradientUnits="userSpaceOnUse" x1="1453.7" y1="242.6" x2="1388.2" y2="265.2"><stop offset="0" stop-color="#ffffff"/><stop offset="0.04" stop-color="#f4feff"/><stop offset="0.1" stop-color="#e5fcff"/><stop offset="0.18" stop-color="#d0f9ff"/><stop offset="0.3" stop-color="#b3f6ff"/><stop offset="0.45" stop-color="#8ff2ff"/><stop offset="0.65" stop-color="#61edff"/><stop offset="0.85" stop-color="#30e9ff"/><stop offset="1" stop-color="#03e6ff"/></linearGradient><linearGradient id="cw81" gradientUnits="userSpaceOnUse" x1="1453.7" y1="242.6" x2="1387.9" y2="262.8"><stop offset="0" stop-color="#ffffff"/><stop offset="0.04" stop-color="#f4feff"/><stop offset="0.1" stop-color="#e5fcff"/><stop offset="0.18" stop-color="#d1fbff"/><stop offset="0.3" stop-color="#b4f8ff"/><stop offset="0.45" stop-color="#90f5ff"/><stop offset="0.65" stop-color="#62f1ff"/><stop offset="0.85" stop-color="#31edff"/><stop offset="1" stop-color="#03ebff"/></linearGradient><linearGradient id="cw82" gradientUnits="userSpaceOnUse" x1="1453.7" y1="242.6" x2="1387.5" y2="260.4"><stop offset="0" stop-color="#ffffff"/><stop offset="0.04" stop-color="#f5feff"/><stop offset="0.1" stop-color="#e6fdff"/><stop offset="0.18" stop-color="#d2fcff"/><stop offset="0.3" stop-color="#b5faff"/><stop offset="0.45" stop-color="#92f8ff"/><stop offset="0.65" stop-color="#63f5ff"/><stop offset="0.85" stop-color="#32f2ff"/><stop offset="1" stop-color="#03f1ff"/></linearGradient><linearGradient id="cw83" gradientUnits="userSpaceOnUse" x1="1453.7" y1="242.6" x2="1387.2" y2="258.0"><stop offset="0" stop-color="#ffffff"/><stop offset="0.04" stop-color="#f5ffff"/><stop offset="0.1" stop-color="#e6feff"/><stop offset="0.18" stop-color="#d3fdff"/><stop offset="0.3" stop-color="#b6fcff"/><stop offset="0.45" stop-color="#93fbff"/><stop offset="0.65" stop-color="#64f9ff"/><stop offset="0.85" stop-color="#32f8ff"/><stop offset="1" stop-color="#03f7ff"/></linearGradient><linearGradient id="cw84" gradientUnits="userSpaceOnUse" x1="1453.7" y1="242.6" x2="1386.8" y2="255.6"><stop offset="0" stop-color="#ffffff"/><stop offset="0.04" stop-color="#f5ffff"/><stop offset="0.1" stop-color="#e7ffff"/><stop offset="0.18" stop-color="#d4feff"/><stop offset="0.3" stop-color="#b7feff"/><stop offset="0.45" stop-color="#94feff"/><stop offset="0.65" stop-color="#65fdff"/><stop offset="0.85" stop-color="#33fdff"/><stop offset="1" stop-color="#04fdff"/></linearGradient><linearGradient id="cw85" gradientUnits="userSpaceOnUse" x1="1453.7" y1="242.6" x2="1386.5" y2="253.3"><stop offset="0" stop-color="#ffffff"/><stop offset="0.04" stop-color="#f5ffff"/><stop offset="0.1" stop-color="#e7ffff"/><stop offset="0.18" stop-color="#d4fffe"/><stop offset="0.3" stop-color="#b8fffe"/><stop offset="0.45" stop-color="#95fffd"/><stop offset="0.65" stop-color="#66fffc"/><stop offset="0.85" stop-color="#33fffc"/><stop offset="1" stop-color="#04fffb"/></linearGradient><linearGradient id="cw86" gradientUnits="userSpaceOnUse" x1="1453.7" y1="242.6" x2="1386.1" y2="250.9"><stop offset="0" stop-color="#ffffff"/><stop offset="0.04" stop-color="#f5ffff"/><stop offset="0.1" stop-color="#e7fffe"/><stop offset="0.18" stop-color="#d3fffd"/><stop offset="0.3" stop-color="#b7fffc"/><stop offset="0.45" stop-color="#94fffa"/><stop offset="0.65" stop-color="#65fff8"/><stop offset="0.85" stop-color="#33fff6"/><stop offset="1" stop-color="#04fff5"/></linearGradient><linearGradient id="cw87" gradientUnits="userSpaceOnUse" x1="1453.7" y1="242.6" x2="1385.8" y2="248.6"><stop offset="0" stop-color="#ffffff"/><stop offset="0.04" stop-color="#f5fffe"/><stop offset="0.1" stop-color="#e6fffd"/><stop offset="0.18" stop-color="#d3fffc"/><stop offset="0.3" stop-color="#b7fff9"/><stop offset="0.45" stop-color="#94fff7"/><stop offset="0.65" stop-color="#65fff4"/><stop offset="0.85" stop-color="#33fff1"/><stop offset="1" stop-color="#04ffef"/></linearGradient><linearGradient id="cw88" gradientUnits="userSpaceOnUse" x1="1453.7" y1="242.6" x2="1385.4" y2="246.2"><stop offset="0" stop-color="#ffffff"/><stop offset="0.04" stop-color="#f5fffe"/><stop offset="0.1" stop-color="#e6fffc"/><stop offset="0.18" stop-color="#d3fffa"/><stop offset="0.3" stop-color="#b6fff7"/><stop offset="0.45" stop-color="#93fff4"/><stop offset="0.65" stop-color="#64fff0"/><stop offset="0.85" stop-color="#32ffec"/><stop offset="1" stop-color="#03ffe9"/></linearGradient><linearGradient id="cw89" gradientUnits="userSpaceOnUse" x1="1453.7" y1="242.6" x2="1385.1" y2="243.8"><stop offset="0" stop-color="#ffffff"/><stop offset="0.04" stop-color="#f5fffe"/><stop offset="0.1" stop-color="#e6fffc"/><stop offset="0.18" stop-color="#d3fff9"/><stop offset="0.3" stop-color="#b6fff5"/><stop offset="0.45" stop-color="#93fff1"/><stop offset="0.65" stop-color="#64ffeb"/><stop offset="0.85" stop-color="#32ffe6"/><stop offset="1" stop-color="#03ffe3"/></linearGradient><linearGradient id="cw90" gradientUnits="userSpaceOnUse" x1="1453.7" y1="242.6" x2="1384.7" y2="241.4"><stop offset="0" stop-color="#ffffff"/><stop offset="0.04" stop-color="#f5fffd"/><stop offset="0.1" stop-color="#e6fffb"/><stop offset="0.18" stop-color="#d2fff8"/><stop offset="0.3" stop-color="#b6fff3"/><stop offset="0.45" stop-color="#92ffee"/><stop offset="0.65" stop-color="#63ffe7"/><stop offset="0.85" stop-color="#32ffe1"/><stop offset="1" stop-color="#03ffdd"/></linearGradient><linearGradient id="cw91" gradientUnits="userSpaceOnUse" x1="1453.7" y1="242.6" x2="1384.3" y2="239.0"><stop offset="0" stop-color="#ffffff"/><stop offset="0.04" stop-color="#f5fffd"/><stop offset="0.1" stop-color="#e6fffa"/><stop offset="0.18" stop-color="#d2fff6"/><stop offset="0.3" stop-color="#b5fff1"/><stop offset="0.45" stop-color="#92ffeb"/><stop offset="0.65" stop-color="#63ffe3"/><stop offset="0.85" stop-color="#32ffdc"/><stop offset="1" stop-color="#03ffd7"/></linearGradient><linearGradient id="cw92" gradientUnits="userSpaceOnUse" x1="1453.7" y1="242.6" x2="1384.0" y2="236.5"><stop offset="0" stop-color="#ffffff"/><stop offset="0.04" stop-color="#f5fffd"/><stop offset="0.1" stop-color="#e5fff9"/><stop offset="0.18" stop-color="#d2fff5"/><stop offset="0.3" stop-color="#b5ffef"/><stop offset="0.45" stop-color="#91ffe7"/><stop offset="0.65" stop-color="#62ffdf"/><stop offset="0.85" stop-color="#31ffd6"/><stop offset="1" stop-color="#03ffd1"/></linearGradient><linearGradient id="cw93" gradientUnits="userSpaceOnUse" x1="1453.7" y1="242.6" x2="1383.6" y2="234.0"><stop offset="0" stop-color="#ffffff"/><stop offset="0.04" stop-color="#f5fffc"/><stop offset="0.1" stop-color="#e5fff9"/><stop offset="0.18" stop-color="#d1fff4"/><stop offset="0.3" stop-color="#b4ffec"/><stop offset="0.45" stop-color="#91ffe4"/><stop offset="0.65" stop-color="#62ffda"/><stop offset="0.85" stop-color="#31ffd1"/><stop offset="1" stop-color="#03ffcb"/></linearGradient><linearGradient id="cw94" gradientUnits="userSpaceOnUse" x1="1453.7" y1="242.6" x2="1383.2" y2="231.5"><stop offset="0" stop-color="#ffffff"/><stop offset="0.04" stop-color="#f4fffc"/><stop offset="0.1" stop-color="#e5fff8"/><stop offset="0.18" stop-color="#d1fff2"/><stop offset="0.3" stop-color="#b4ffea"/><stop offset="0.45" stop-color="#90ffe1"/><stop offset="0.65" stop-color="#62ffd6"/><stop offset="0.85" stop-color="#31ffcb"/><stop offset="1" stop-color="#03ffc5"/></linearGradient><linearGradient id="cw95" gradientUnits="userSpaceOnUse" x1="1453.7" y1="242.6" x2="1382.8" y2="228.9"><stop offset="0" stop-color="#ffffff"/><stop offset="0.04" stop-color="#f4fffc"/><stop offset="0.1" stop-color="#e5fff7"/><stop offset="0.18" stop-color="#d1fff1"/><stop offset="0.3" stop-color="#b3ffe8"/><stop offset="0.45" stop-color="#90ffde"/><stop offset="0.65" stop-color="#61ffd1"/><stop offset="0.85" stop-color="#30ffc6"/><stop offset="1" stop-color="#03ffbe"/></linearGradient><linearGradient id="cw96" gradientUnits="userSpaceOnUse" x1="1453.7" y1="242.6" x2="1382.4" y2="226.2"><stop offset="0" stop-color="#ffffff"/><stop offset="0.04" stop-color="#f4fffb"/><stop offset="0.1" stop-color="#e5fff6"/><stop offset="0.18" stop-color="#d0ffef"/><stop offset="0.3" stop-color="#b3ffe6"/><stop offset="0.45" stop-color="#8fffda"/><stop offset="0.65" stop-color="#61ffcd"/><stop offset="0.85" stop-color="#30ffc0"/><stop offset="1" stop-color="#03ffb8"/></linearGradient><linearGradient id="cw97" gradientUnits="userSpaceOnUse" x1="1453.7" y1="242.6" x2="1382.0" y2="223.4"><stop offset="0" stop-color="#ffffff"/><stop offset="0.04" stop-color="#f4fffb"/><stop offset="0.1" stop-color="#e4fff5"/><stop offset="0.18" stop-color="#d0ffee"/><stop offset="0.3" stop-color="#b3ffe3"/><stop offset="0.45" stop-color="#8fffd7"/><stop offset="0.65" stop-color="#60ffc8"/><stop offset="0.85" stop-color="#30ffba"/><stop offset="1" stop-color="#03ffb1"/></linearGradient><linearGradient id="cw98" gradientUnits="userSpaceOnUse" x1="1453.7" y1="242.6" x2="1381.6" y2="220.6"><stop offset="0" stop-color="#ffffff"/><stop offset="0.04" stop-color="#f4fffb"/><stop offset="0.1" stop-color="#e4fff4"/><stop offset="0.18" stop-color="#d0ffec"/><stop offset="0.3" stop-color="#b2ffe1"/><stop offset="0.45" stop-color="#8effd3"/><stop offset="0.65" stop-color="#60ffc3"/><stop offset="0.85" stop-color="#30ffb4"/><stop offset="1" stop-color="#03ffab"/></linearGradient><linearGradient id="cw99" gradientUnits="userSpaceOnUse" x1="1453.7" y1="242.6" x2="1381.2" y2="217.7"><stop offset="0" stop-color="#ffffff"/><stop offset="0.04" stop-color="#f4fffa"/><stop offset="0.1" stop-color="#e4fff3"/><stop offset="0.18" stop-color="#cfffeb"/><stop offset="0.3" stop-color="#b2ffde"/><stop offset="0.45" stop-color="#8effd0"/><stop offset="0.65" stop-color="#5fffbe"/><stop offset="0.85" stop-color="#2fffae"/><stop offset="1" stop-color="#03ffa4"/></linearGradient><linearGradient id="cw100" gradientUnits="userSpaceOnUse" x1="1453.7" y1="242.6" x2="1380.7" y2="214.6"><stop offset="0" stop-color="#ffffff"/><stop offset="0.04" stop-color="#f4fffa"/><stop offset="0.1" stop-color="#e4fff2"/><stop offset="0.18" stop-color="#cfffe9"/><stop offset="0.3" stop-color="#b1ffdb"/><stop offset="0.45" stop-color="#8dffcc"/><stop offset="0.65" stop-color="#5fffb9"/><stop offset="0.85" stop-color="#2fffa8"/><stop offset="1" stop-color="#03ff9d"/></linearGradient><linearGradient id="cw101" gradientUnits="userSpaceOnUse" x1="1453.7" y1="242.6" x2="1380.2" y2="211.4"><stop offset="0" stop-color="#ffffff"/><stop offset="0.04" stop-color="#f4fff9"/><stop offset="0.1" stop-color="#e4fff1"/><stop offset="0.18" stop-color="#cfffe7"/><stop offset="0.3" stop-color="#b1ffd9"/><stop offset="0.45" stop-color="#8dffc8"/><stop offset="0.65" stop-color="#5effb4"/><stop offset="0.85" stop-color="#2fffa2"/><stop offset="1" stop-color="#03ff95"/></linearGradient><linearGradient id="cw102" gradientUnits="userSpaceOnUse" x1="1453.7" y1="242.6" x2="1379.8" y2="208.1"><stop offset="0" stop-color="#ffffff"/><stop offset="0.04" stop-color="#f4fff9"/><stop offset="0.1" stop-color="#e3fff0"/><stop offset="0.18" stop-color="#ceffe5"/><stop offset="0.3" stop-color="#b0ffd6"/><stop offset="0.45" stop-color="#8cffc4"/><stop offset="0.65" stop-color="#5effae"/><stop offset="0.85" stop-color="#2eff9b"/><stop offset="1" stop-color="#03ff8e"/></linearGradient><linearGradient id="cw103" gradientUnits="userSpaceOnUse" x1="1453.7" y1="242.6" x2="1379.2" y2="204.7"><stop offset="0" stop-color="#ffffff"/><stop offset="0.04" stop-color="#f4fff9"/><stop offset="0.1" stop-color="#e3ffef"/><stop offset="0.18" stop-color="#ceffe4"/><stop offset="0.3" stop-color="#b0ffd3"/><stop offset="0.45" stop-color="#8bffc0"/><stop offset="0.65" stop-color="#5dffa9"/><stop offset="0.85" stop-color="#2eff94"/><stop offset="1" stop-color="#03ff86"/></linearGradient><linearGradient id="cw104" gradientUnits="userSpaceOnUse" x1="1453.7" y1="242.6" x2="1378.7" y2="201.1"><stop offset="0" stop-color="#ffffff"/><stop offset="0.04" stop-color="#f3fff8"/><stop offset="0.1" stop-color="#e3ffee"/><stop offset="0.18" stop-color="#ceffe2"/><stop offset="0.3" stop-color="#afffd0"/><stop offset="0.45" stop-color="#8bffbb"/><stop offset="0.65" stop-color="#5dffa3"/><stop offset="0.85" stop-color="#2eff8c"/><stop offset="1" stop-color="#03ff7d"/></linearGradient><linearGradient id="cw105" gradientUnits="userSpaceOnUse" x1="1453.7" y1="242.6" x2="1378.1" y2="197.2"><stop offset="0" stop-color="#ffffff"/><stop offset="0.04" stop-color="#f3fff8"/><stop offset="0.1" stop-color="#e3ffed"/><stop offset="0.18" stop-color="#cdffe0"/><stop offset="0.3" stop-color="#aeffcd"/><stop offset="0.45" stop-color="#8affb7"/><stop offset="0.65" stop-color="#5cff9c"/><stop offset="0.85" stop-color="#2dff85"/><stop offset="1" stop-color="#03ff75"/></linearGradient><linearGradient id="cw106" gradientUnits="userSpaceOnUse" x1="1453.7" y1="242.6" x2="1377.5" y2="193.2"><stop offset="0" stop-color="#ffffff"/><stop offset="0.04" stop-color="#f3fff7"/><stop offset="0.1" stop-color="#e2ffec"/><stop offset="0.18" stop-color="#cdffdd"/><stop offset="0.3" stop-color="#aeffc9"/><stop offset="0.45" stop-color="#89ffb2"/><stop offset="0.65" stop-color="#5bff96"/><stop offset="0.85" stop-color="#2dff7d"/><stop offset="1" stop-color="#03ff6b"/></linearGradient><linearGradient id="cw107" gradientUnits="userSpaceOnUse" x1="1453.7" y1="242.6" x2="1376.9" y2="188.8"><stop offset="0" stop-color="#ffffff"/><stop offset="0.04" stop-color="#f3fff7"/><stop offset="0.1" stop-color="#e2ffea"/><stop offset="0.18" stop-color="#ccffdb"/><stop offset="0.3" stop-color="#adffc5"/><stop offset="0.45" stop-color="#89ffad"/><stop offset="0.65" stop-color="#5bff8f"/><stop offset="0.85" stop-color="#2dff74"/><stop offset="1" stop-color="#03ff61"/></linearGradient><linearGradient id="cw108" gradientUnits="userSpaceOnUse" x1="1453.7" y1="242.6" x2="1376.2" y2="184.2"><stop offset="0" stop-color="#ffffff"/><stop offset="0.04" stop-color="#f3fff6"/><stop offset="0.1" stop-color="#e2ffe9"/><stop offset="0.18" stop-color="#ccffd9"/><stop offset="0.3" stop-color="#acffc2"/><stop offset="0.45" stop-color="#88ffa7"/><stop offset="0.65" stop-color="#5aff87"/><stop offset="0.85" stop-color="#2cff6b"/><stop offset="1" stop-color="#03ff57"/></linearGradient><linearGradient id="cw109" gradientUnits="userSpaceOnUse" x1="1453.7" y1="242.6" x2="1375.5" y2="179.3"><stop offset="0" stop-color="#ffffff"/><stop offset="0.04" stop-color="#f3fff5"/><stop offset="0.1" stop-color="#e1ffe8"/><stop offset="0.18" stop-color="#cbffd6"/><stop offset="0.3" stop-color="#acffbd"/><stop offset="0.45" stop-color="#87ffa1"/><stop offset="0.65" stop-color="#59ff80"/><stop offset="0.85" stop-color="#2cff61"/><stop offset="1" stop-color="#03ff4b"/></linearGradient><linearGradient id="cw110" gradientUnits="userSpaceOnUse" x1="1453.7" y1="242.6" x2="1374.7" y2="173.9"><stop offset="0" stop-color="#ffffff"/><stop offset="0.04" stop-color="#f3fff5"/><stop offset="0.1" stop-color="#e1ffe6"/><stop offset="0.18" stop-color="#caffd3"/><stop offset="0.3" stop-color="#abffb9"/><stop offset="0.45" stop-color="#86ff9b"/><stop offset="0.65" stop-color="#59ff77"/><stop offset="0.85" stop-color="#2bff56"/><stop offset="1" stop-color="#03ff3e"/></linearGradient><linearGradient id="cw111" gradientUnits="userSpaceOnUse" x1="1453.7" y1="242.6" x2="1373.8" y2="168.1"><stop offset="0" stop-color="#ffffff"/><stop offset="0.04" stop-color="#f2fff4"/><stop offset="0.1" stop-color="#e0ffe4"/><stop offset="0.18" stop-color="#caffd0"/><stop offset="0.3" stop-color="#aaffb4"/><stop offset="0.45" stop-color="#85ff94"/><stop offset="0.65" stop-color="#58ff6e"/><stop offset="0.85" stop-color="#2bff4a"/><stop offset="1" stop-color="#03ff30"/></linearGradient><linearGradient id="cw112" gradientUnits="userSpaceOnUse" x1="1453.7" y1="242.6" x2="1372.9" y2="161.8"><stop offset="0" stop-color="#ffffff"/><stop offset="0.04" stop-color="#f2fff3"/><stop offset="0.1" stop-color="#e0ffe2"/><stop offset="0.18" stop-color="#c9ffcd"/><stop offset="0.3" stop-color="#a9ffaf"/><stop offset="0.45" stop-color="#84ff8d"/><stop offset="0.65" stop-color="#57ff64"/><stop offset="0.85" stop-color="#2aff3c"/><stop offset="1" stop-color="#03ff1f"/></linearGradient><linearGradient id="cw113" gradientUnits="userSpaceOnUse" x1="1453.7" y1="242.6" x2="1371.8" y2="154.8"><stop offset="0" stop-color="#ffffff"/><stop offset="0.04" stop-color="#f2fff2"/><stop offset="0.1" stop-color="#e0ffe0"/><stop offset="0.18" stop-color="#c8ffc9"/><stop offset="0.3" stop-color="#a8ffa9"/><stop offset="0.45" stop-color="#83ff85"/><stop offset="0.65" stop-color="#56ff58"/><stop offset="0.85" stop-color="#2aff2d"/><stop offset="1" stop-color="#03ff0a"/></linearGradient><linearGradient id="cw114" gradientUnits="userSpaceOnUse" x1="1453.7" y1="242.6" x2="1376.5" y2="153.8"><stop offset="0" stop-color="#ffffff"/><stop offset="0.04" stop-color="#f3fff2"/><stop offset="0.1" stop-color="#e1ffe0"/><stop offset="0.18" stop-color="#cbffc9"/><stop offset="0.3" stop-color="#adffa9"/><stop offset="0.45" stop-color="#8aff84"/><stop offset="0.65" stop-color="#5fff57"/><stop offset="0.85" stop-color="#36ff2a"/><stop offset="1" stop-color="#18ff03"/></linearGradient><linearGradient id="cw115" gradientUnits="userSpaceOnUse" x1="1453.7" y1="242.6" x2="1382.3" y2="154.4"><stop offset="0" stop-color="#ffffff"/><stop offset="0.04" stop-color="#f3fff2"/><stop offset="0.1" stop-color="#e3ffe0"/><stop offset="0.18" stop-color="#cfffca"/><stop offset="0.3" stop-color="#b2ffaa"/><stop offset="0.45" stop-color="#91ff85"/><stop offset="0.65" stop-color="#6aff57"/><stop offset="0.85" stop-color="#45ff2b"/><stop offset="1" stop-color="#2aff03"/></linearGradient><linearGradient id="cw116" gradientUnits="userSpaceOnUse" x1="1453.7" y1="242.6" x2="1387.6" y2="155.0"><stop offset="0" stop-color="#ffffff"/><stop offset="0.04" stop-color="#f4fff3"/><stop offset="0.1" stop-color="#e5ffe1"/><stop offset="0.18" stop-color="#d2ffca"/><stop offset="0.3" stop-color="#b7ffaa"/><stop offset="0.45" stop-color="#99ff86"/><stop offset="0.65" stop-color="#74ff58"/><stop offset="0.85" stop-color="#52ff2b"/><stop offset="1" stop-color="#3aff03"/></linearGradient><linearGradient id="cw117" gradientUnits="userSpaceOnUse" x1="1453.7" y1="242.6" x2="1392.7" y2="155.5"><stop offset="0" stop-color="#ffffff"/><stop offset="0.04" stop-color="#f5fff3"/><stop offset="0.1" stop-color="#e7ffe1"/><stop offset="0.18" stop-color="#d5ffcb"/><stop offset="0.3" stop-color="#bcffab"/><stop offset="0.45" stop-color="#9fff87"/><stop offset="0.65" stop-color="#7dff59"/><stop offset="0.85" stop-color="#5eff2b"/><stop offset="1" stop-color="#48ff03"/></linearGradient><linearGradient id="cw118" gradientUnits="userSpaceOnUse" x1="1453.7" y1="242.6" x2="1397.4" y2="156.0"><stop offset="0" stop-color="#ffffff"/><stop offset="0.04" stop-color="#f6fff3"/><stop offset="0.1" stop-color="#e8ffe2"/><stop offset="0.18" stop-color="#d8ffcb"/><stop offset="0.3" stop-color="#c0ffac"/><stop offset="0.45" stop-color="#a6ff87"/><stop offset="0.65" stop-color="#86ff5a"/><stop offset="0.85" stop-color="#69ff2c"/><stop offset="1" stop-color="#55ff03"/></linearGradient><linearGradient id="cw119" gradientUnits="userSpaceOnUse" x1="1453.7" y1="242.6" x2="1401.9" y2="156.4"><stop offset="0" stop-color="#ffffff"/><stop offset="0.04" stop-color="#f6fff3"/><stop offset="0.1" stop-color="#eaffe2"/><stop offset="0.18" stop-color="#daffcc"/><stop offset="0.3" stop-color="#c5ffad"/><stop offset="0.45" stop-color="#acff88"/><stop offset="0.65" stop-color="#8eff5a"/><stop offset="0.85" stop-color="#73ff2c"/><stop offset="1" stop-color="#61ff03"/></linearGradient><linearGradient id="cw120" gradientUnits="userSpaceOnUse" x1="1453.7" y1="242.6" x2="1406.2" y2="156.9"><stop offset="0" stop-color="#ffffff"/><stop offset="0.04" stop-color="#f7fff3"/><stop offset="0.1" stop-color="#ebffe2"/><stop offset="0.18" stop-color="#ddffcc"/><stop offset="0.3" stop-color="#c9ffad"/><stop offset="0.45" stop-color="#b2ff89"/><stop offset="0.65" stop-color="#96ff5b"/><stop offset="0.85" stop-color="#7dff2d"/><stop offset="1" stop-color="#6cff03"/></linearGradient><linearGradient id="cw121" gradientUnits="userSpaceOnUse" x1="1453.7" y1="242.6" x2="1410.2" y2="157.3"><stop offset="0" stop-color="#ffffff"/><stop offset="0.04" stop-color="#f7fff3"/><stop offset="0.1" stop-color="#edffe2"/><stop offset="0.18" stop-color="#dfffcd"/><stop offset="0.3" stop-color="#cdffae"/><stop offset="0.45" stop-color="#b7ff8a"/><stop offset="0.65" stop-color="#9dff5c"/><stop offset="0.85" stop-color="#86ff2d"/><stop offset="1" stop-color="#77ff03"/></linearGradient><linearGradient id="cw122" gradientUnits="userSpaceOnUse" x1="1453.7" y1="242.6" x2="1414.1" y2="157.7"><stop offset="0" stop-color="#ffffff"/><stop offset="0.04" stop-color="#f8fff4"/><stop offset="0.1" stop-color="#eeffe3"/><stop offset="0.18" stop-color="#e2ffcd"/><stop offset="0.3" stop-color="#d0ffaf"/><stop offset="0.45" stop-color="#bdff8a"/><stop offset="0.65" stop-color="#a5ff5c"/><stop offset="0.85" stop-color="#8fff2d"/><stop offset="1" stop-color="#81ff03"/></linearGradient><linearGradient id="cw123" gradientUnits="userSpaceOnUse" x1="1453.7" y1="242.6" x2="1417.8" y2="158.1"><stop offset="0" stop-color="#ffffff"/><stop offset="0.04" stop-color="#f9fff4"/><stop offset="0.1" stop-color="#f0ffe3"/><stop offset="0.18" stop-color="#e4ffce"/><stop offset="0.3" stop-color="#d4ffaf"/><stop offset="0.45" stop-color="#c2ff8b"/><stop offset="0.65" stop-color="#acff5d"/><stop offset="0.85" stop-color="#98ff2e"/><stop offset="1" stop-color="#8aff03"/></linearGradient><linearGradient id="cw124" gradientUnits="userSpaceOnUse" x1="1453.7" y1="242.6" x2="1421.4" y2="158.4"><stop offset="0" stop-color="#ffffff"/><stop offset="0.04" stop-color="#f9fff4"/><stop offset="0.1" stop-color="#f1ffe3"/><stop offset="0.18" stop-color="#e6ffce"/><stop offset="0.3" stop-color="#d8ffb0"/><stop offset="0.45" stop-color="#c7ff8c"/><stop offset="0.65" stop-color="#b2ff5d"/><stop offset="0.85" stop-color="#a0ff2e"/><stop offset="1" stop-color="#94ff03"/></linearGradient><linearGradient id="cw125" gradientUnits="userSpaceOnUse" x1="1453.7" y1="242.6" x2="1424.8" y2="158.8"><stop offset="0" stop-color="#ffffff"/><stop offset="0.04" stop-color="#fafff4"/><stop offset="0.1" stop-color="#f2ffe4"/><stop offset="0.18" stop-color="#e8ffcf"/><stop offset="0.3" stop-color="#dbffb0"/><stop offset="0.45" stop-color="#cbff8c"/><stop offset="0.65" stop-color="#b9ff5e"/><stop offset="0.85" stop-color="#a8ff2f"/><stop offset="1" stop-color="#9dff03"/></linearGradient><linearGradient id="cw126" gradientUnits="userSpaceOnUse" x1="1453.7" y1="242.6" x2="1428.2" y2="159.1"><stop offset="0" stop-color="#ffffff"/><stop offset="0.04" stop-color="#fafff4"/><stop offset="0.1" stop-color="#f3ffe4"/><stop offset="0.18" stop-color="#ebffcf"/><stop offset="0.3" stop-color="#deffb1"/><stop offset="0.45" stop-color="#d0ff8d"/><stop offset="0.65" stop-color="#bfff5e"/><stop offset="0.85" stop-color="#b0ff2f"/><stop offset="1" stop-color="#a6ff03"/></linearGradient><linearGradient id="cw127" gradientUnits="userSpaceOnUse" x1="1453.7" y1="242.6" x2="1431.4" y2="159.5"><stop offset="0" stop-color="#ffffff"/><stop offset="0.04" stop-color="#fbfff4"/><stop offset="0.1" stop-color="#f4ffe4"/><stop offset="0.18" stop-color="#edffcf"/><stop offset="0.3" stop-color="#e1ffb1"/><stop offset="0.45" stop-color="#d5ff8e"/><stop offset="0.65" stop-color="#c5ff5f"/><stop offset="0.85" stop-color="#b8ff2f"/><stop offset="1" stop-color="#aeff03"/></linearGradient><linearGradient id="cw128" gradientUnits="userSpaceOnUse" x1="1453.7" y1="242.6" x2="1434.6" y2="159.8"><stop offset="0" stop-color="#ffffff"/><stop offset="0.04" stop-color="#fbfff4"/><stop offset="0.1" stop-color="#f6ffe4"/><stop offset="0.18" stop-color="#efffd0"/><stop offset="0.3" stop-color="#e5ffb2"/><stop offset="0.45" stop-color="#d9ff8e"/><stop offset="0.65" stop-color="#cbff60"/><stop offset="0.85" stop-color="#bfff30"/><stop offset="1" stop-color="#b7ff03"/></linearGradient><linearGradient id="cw129" gradientUnits="userSpaceOnUse" x1="1453.7" y1="242.6" x2="1437.7" y2="160.1"><stop offset="0" stop-color="#ffffff"/><stop offset="0.04" stop-color="#fbfff4"/><stop offset="0.1" stop-color="#f7ffe5"/><stop offset="0.18" stop-color="#f0ffd0"/><stop offset="0.3" stop-color="#e8ffb3"/><stop offset="0.45" stop-color="#deff8f"/><stop offset="0.65" stop-color="#d1ff60"/><stop offset="0.85" stop-color="#c6ff30"/><stop offset="1" stop-color="#bfff03"/></linearGradient><linearGradient id="cw130" gradientUnits="userSpaceOnUse" x1="1453.7" y1="242.6" x2="1440.7" y2="160.4"><stop offset="0" stop-color="#ffffff"/><stop offset="0.04" stop-color="#fcfff4"/><stop offset="0.1" stop-color="#f8ffe5"/><stop offset="0.18" stop-color="#f2ffd1"/><stop offset="0.3" stop-color="#ebffb3"/><stop offset="0.45" stop-color="#e2ff8f"/><stop offset="0.65" stop-color="#d7ff61"/><stop offset="0.85" stop-color="#ceff30"/><stop offset="1" stop-color="#c7ff03"/></linearGradient><linearGradient id="cw131" gradientUnits="userSpaceOnUse" x1="1453.7" y1="242.6" x2="1443.7" y2="160.7"><stop offset="0" stop-color="#ffffff"/><stop offset="0.04" stop-color="#fcfff5"/><stop offset="0.1" stop-color="#f9ffe5"/><stop offset="0.18" stop-color="#f4ffd1"/><stop offset="0.3" stop-color="#eeffb4"/><stop offset="0.45" stop-color="#e6ff90"/><stop offset="0.65" stop-color="#ddff61"/><stop offset="0.85" stop-color="#d5ff31"/><stop offset="1" stop-color="#cfff03"/></linearGradient><linearGradient id="cw132" gradientUnits="userSpaceOnUse" x1="1453.7" y1="242.6" x2="1446.6" y2="161.0"><stop offset="0" stop-color="#ffffff"/><stop offset="0.04" stop-color="#fdfff5"/><stop offset="0.1" stop-color="#faffe5"/><stop offset="0.18" stop-color="#f6ffd1"/><stop offset="0.3" stop-color="#f1ffb4"/><stop offset="0.45" stop-color="#eaff90"/><stop offset="0.65" stop-color="#e3ff62"/><stop offset="0.85" stop-color="#dcff31"/><stop offset="1" stop-color="#d7ff03"/></linearGradient><linearGradient id="cw133" gradientUnits="userSpaceOnUse" x1="1453.7" y1="242.6" x2="1449.5" y2="161.3"><stop offset="0" stop-color="#ffffff"/><stop offset="0.04" stop-color="#fdfff5"/><stop offset="0.1" stop-color="#fbffe5"/><stop offset="0.18" stop-color="#f8ffd2"/><stop offset="0.3" stop-color="#f4ffb5"/><stop offset="0.45" stop-color="#efff91"/><stop offset="0.65" stop-color="#e8ff62"/><stop offset="0.85" stop-color="#e3ff31"/><stop offset="1" stop-color="#dfff04"/></linearGradient><linearGradient id="cw134" gradientUnits="userSpaceOnUse" x1="1453.7" y1="242.6" x2="1452.3" y2="161.6"><stop offset="0" stop-color="#ffffff"/><stop offset="0.04" stop-color="#fefff5"/><stop offset="0.1" stop-color="#fcffe6"/><stop offset="0.18" stop-color="#faffd2"/><stop offset="0.3" stop-color="#f6ffb5"/><stop offset="0.45" stop-color="#f3ff92"/><stop offset="0.65" stop-color="#eeff63"/><stop offset="0.85" stop-color="#eaff32"/><stop offset="1" stop-color="#e7ff04"/></linearGradient><linearGradient id="cw135" gradientUnits="userSpaceOnUse" x1="1453.7" y1="242.6" x2="1455.1" y2="161.9"><stop offset="0" stop-color="#ffffff"/><stop offset="0.04" stop-color="#fefff5"/><stop offset="0.1" stop-color="#fdffe6"/><stop offset="0.18" stop-color="#fbffd2"/><stop offset="0.3" stop-color="#f9ffb6"/><stop offset="0.45" stop-color="#f7ff92"/><stop offset="0.65" stop-color="#f4ff63"/><stop offset="0.85" stop-color="#f1ff32"/><stop offset="1" stop-color="#efff04"/></linearGradient><linearGradient id="cw136" gradientUnits="userSpaceOnUse" x1="1453.7" y1="242.6" x2="1457.9" y2="162.2"><stop offset="0" stop-color="#ffffff"/><stop offset="0.04" stop-color="#fefff5"/><stop offset="0.1" stop-color="#feffe6"/><stop offset="0.18" stop-color="#fdffd3"/><stop offset="0.3" stop-color="#fcffb6"/><stop offset="0.45" stop-color="#fbff93"/><stop offset="0.65" stop-color="#faff64"/><stop offset="0.85" stop-color="#f8ff32"/><stop offset="1" stop-color="#f7ff04"/></linearGradient><linearGradient id="cw137" gradientUnits="userSpaceOnUse" x1="1453.7" y1="242.6" x2="1460.7" y2="162.5"><stop offset="0" stop-color="#ffffff"/><stop offset="0.04" stop-color="#fffff5"/><stop offset="0.1" stop-color="#ffffe6"/><stop offset="0.18" stop-color="#ffffd3"/><stop offset="0.3" stop-color="#ffffb6"/><stop offset="0.45" stop-color="#ffff93"/><stop offset="0.65" stop-color="#ffff64"/><stop offset="0.85" stop-color="#ffff32"/><stop offset="1" stop-color="#ffff04"/></linearGradient><linearGradient id="cw138" gradientUnits="userSpaceOnUse" x1="1453.7" y1="242.6" x2="1463.5" y2="162.8"><stop offset="0" stop-color="#ffffff"/><stop offset="0.04" stop-color="#fffff5"/><stop offset="0.1" stop-color="#fffee6"/><stop offset="0.18" stop-color="#fffdd2"/><stop offset="0.3" stop-color="#fffcb5"/><stop offset="0.45" stop-color="#fffb92"/><stop offset="0.65" stop-color="#fff963"/><stop offset="0.85" stop-color="#fff831"/><stop offset="1" stop-color="#fff704"/></linearGradient><linearGradient id="cw139" gradientUnits="userSpaceOnUse" x1="1453.7" y1="242.6" x2="1466.3" y2="163.1"><stop offset="0" stop-color="#ffffff"/><stop offset="0.04" stop-color="#fffef5"/><stop offset="0.1" stop-color="#fffde5"/><stop offset="0.18" stop-color="#fffcd1"/><stop offset="0.3" stop-color="#fff9b3"/><stop offset="0.45" stop-color="#fff790"/><stop offset="0.65" stop-color="#fff461"/><stop offset="0.85" stop-color="#fff130"/><stop offset="1" stop-color="#ffef03"/></linearGradient><linearGradient id="cw140" gradientUnits="userSpaceOnUse" x1="1453.7" y1="242.6" x2="1469.1" y2="163.4"><stop offset="0" stop-color="#ffffff"/><stop offset="0.04" stop-color="#fffef4"/><stop offset="0.1" stop-color="#fffce4"/><stop offset="0.18" stop-color="#fffad0"/><stop offset="0.3" stop-color="#fff7b2"/><stop offset="0.45" stop-color="#fff38e"/><stop offset="0.65" stop-color="#ffef5f"/><stop offset="0.85" stop-color="#ffeb2f"/><stop offset="1" stop-color="#ffe803"/></linearGradient><linearGradient id="cw141" gradientUnits="userSpaceOnUse" x1="1453.7" y1="242.6" x2="1471.9" y2="163.7"><stop offset="0" stop-color="#ffffff"/><stop offset="0.04" stop-color="#fffef4"/><stop offset="0.1" stop-color="#fffbe4"/><stop offset="0.18" stop-color="#fff8cf"/><stop offset="0.3" stop-color="#fff4b0"/><stop offset="0.45" stop-color="#ffef8c"/><stop offset="0.65" stop-color="#ffe95e"/><stop offset="0.85" stop-color="#ffe52f"/><stop offset="1" stop-color="#ffe103"/></linearGradient><linearGradient id="cw142" gradientUnits="userSpaceOnUse" x1="1453.7" y1="242.6" x2="1474.8" y2="164.0"><stop offset="0" stop-color="#ffffff"/><stop offset="0.04" stop-color="#fffdf4"/><stop offset="0.1" stop-color="#fffae3"/><stop offset="0.18" stop-color="#fff6ce"/><stop offset="0.3" stop-color="#fff1af"/><stop offset="0.45" stop-color="#ffeb8b"/><stop offset="0.65" stop-color="#ffe55c"/><stop offset="0.85" stop-color="#ffdf2e"/><stop offset="1" stop-color="#ffdb03"/></linearGradient><linearGradient id="cw143" gradientUnits="userSpaceOnUse" x1="1453.7" y1="242.6" x2="1477.7" y2="164.2"><stop offset="0" stop-color="#ffffff"/><stop offset="0.04" stop-color="#fffdf3"/><stop offset="0.1" stop-color="#fff9e2"/><stop offset="0.18" stop-color="#fff5cd"/><stop offset="0.3" stop-color="#ffefae"/><stop offset="0.45" stop-color="#ffe889"/><stop offset="0.65" stop-color="#ffe05b"/><stop offset="0.85" stop-color="#ffd92d"/><stop offset="1" stop-color="#ffd403"/></linearGradient><linearGradient id="cw144" gradientUnits="userSpaceOnUse" x1="1453.7" y1="242.6" x2="1480.6" y2="164.6"><stop offset="0" stop-color="#ffffff"/><stop offset="0.04" stop-color="#fffcf3"/><stop offset="0.1" stop-color="#fff8e2"/><stop offset="0.18" stop-color="#fff3cb"/><stop offset="0.3" stop-color="#ffecac"/><stop offset="0.45" stop-color="#ffe488"/><stop offset="0.65" stop-color="#ffdb5a"/><stop offset="0.85" stop-color="#ffd32c"/><stop offset="1" stop-color="#ffce03"/></linearGradient><linearGradient id="cw145" gradientUnits="userSpaceOnUse" x1="1453.7" y1="242.6" x2="1483.6" y2="164.9"><stop offset="0" stop-color="#ffffff"/><stop offset="0.04" stop-color="#fffcf3"/><stop offset="0.1" stop-color="#fff7e1"/><stop offset="0.18" stop-color="#fff1ca"/><stop offset="0.3" stop-color="#ffe9ab"/><stop offset="0.45" stop-color="#ffe086"/><stop offset="0.65" stop-color="#ffd658"/><stop offset="0.85" stop-color="#ffce2b"/><stop offset="1" stop-color="#ffc803"/></linearGradient><linearGradient id="cw146" gradientUnits="userSpaceOnUse" x1="1453.7" y1="242.6" x2="1486.6" y2="165.2"><stop offset="0" stop-color="#ffffff"/><stop offset="0.04" stop-color="#fffbf3"/><stop offset="0.1" stop-color="#fff6e0"/><stop offset="0.18" stop-color="#ffefc9"/><stop offset="0.3" stop-color="#ffe7a9"/><stop offset="0.45" stop-color="#ffdd84"/><stop offset="0.65" stop-color="#ffd257"/><stop offset="0.85" stop-color="#ffc82a"/><stop offset="1" stop-color="#ffc203"/></linearGradient><linearGradient id="cw147" gradientUnits="userSpaceOnUse" x1="1453.7" y1="242.6" x2="1489.7" y2="165.5"><stop offset="0" stop-color="#ffffff"/><stop offset="0.04" stop-color="#fffbf2"/><stop offset="0.1" stop-color="#fff5e0"/><stop offset="0.18" stop-color="#ffeec8"/><stop offset="0.3" stop-color="#ffe4a8"/><stop offset="0.45" stop-color="#ffd983"/><stop offset="0.65" stop-color="#ffcd56"/><stop offset="0.85" stop-color="#ffc32a"/><stop offset="1" stop-color="#ffbd03"/></linearGradient><linearGradient id="cw148" gradientUnits="userSpaceOnUse" x1="1453.7" y1="242.6" x2="1492.9" y2="165.8"><stop offset="0" stop-color="#ffffff"/><stop offset="0.04" stop-color="#fffbf2"/><stop offset="0.1" stop-color="#fff4df"/><stop offset="0.18" stop-color="#ffecc7"/><stop offset="0.3" stop-color="#ffe1a6"/><stop offset="0.45" stop-color="#ffd681"/><stop offset="0.65" stop-color="#ffc954"/><stop offset="0.85" stop-color="#ffbe29"/><stop offset="1" stop-color="#ffb703"/></linearGradient><linearGradient id="cw149" gradientUnits="userSpaceOnUse" x1="1453.7" y1="242.6" x2="1496.1" y2="166.2"><stop offset="0" stop-color="#ffffff"/><stop offset="0.04" stop-color="#fffaf2"/><stop offset="0.1" stop-color="#fff3de"/><stop offset="0.18" stop-color="#ffeac6"/><stop offset="0.3" stop-color="#ffdea5"/><stop offset="0.45" stop-color="#ffd280"/><stop offset="0.65" stop-color="#ffc453"/><stop offset="0.85" stop-color="#ffb928"/><stop offset="1" stop-color="#ffb203"/></linearGradient><linearGradient id="cw150" gradientUnits="userSpaceOnUse" x1="1453.7" y1="242.6" x2="1499.5" y2="166.5"><stop offset="0" stop-color="#ffffff"/><stop offset="0.04" stop-color="#fffaf1"/><stop offset="0.1" stop-color="#fff2dd"/><stop offset="0.18" stop-color="#ffe8c5"/><stop offset="0.3" stop-color="#ffdca3"/><stop offset="0.45" stop-color="#ffce7e"/><stop offset="0.65" stop-color="#ffc052"/><stop offset="0.85" stop-color="#ffb427"/><stop offset="1" stop-color="#ffac03"/></linearGradient><linearGradient id="cw151" gradientUnits="userSpaceOnUse" x1="1453.7" y1="242.6" x2="1502.9" y2="166.9"><stop offset="0" stop-color="#ffffff"/><stop offset="0.04" stop-color="#fff9f1"/><stop offset="0.1" stop-color="#fff1dd"/><stop offset="0.18" stop-color="#ffe6c4"/><stop offset="0.3" stop-color="#ffd9a2"/><stop offset="0.45" stop-color="#ffcb7d"/><stop offset="0.65" stop-color="#ffbb50"/><stop offset="0.85" stop-color="#ffaf27"/><stop offset="1" stop-color="#ffa703"/></linearGradient><linearGradient id="cw152" gradientUnits="userSpaceOnUse" x1="1453.7" y1="242.6" x2="1506.5" y2="167.2"><stop offset="0" stop-color="#ffffff"/><stop offset="0.04" stop-color="#fff9f0"/><stop offset="0.1" stop-color="#ffefdc"/><stop offset="0.18" stop-color="#ffe4c2"/><stop offset="0.3" stop-color="#ffd6a1"/><stop offset="0.45" stop-color="#ffc77b"/><stop offset="0.65" stop-color="#ffb74f"/><stop offset="0.85" stop-color="#ffaa26"/><stop offset="1" stop-color="#ffa103"/></linearGradient><linearGradient id="cw153" gradientUnits="userSpaceOnUse" x1="1453.7" y1="242.6" x2="1510.2" y2="167.6"><stop offset="0" stop-color="#ffffff"/><stop offset="0.04" stop-color="#fff8f0"/><stop offset="0.1" stop-color="#ffeedb"/><stop offset="0.18" stop-color="#ffe3c1"/><stop offset="0.3" stop-color="#ffd39f"/><stop offset="0.45" stop-color="#ffc37a"/><stop offset="0.65" stop-color="#ffb24e"/><stop offset="0.85" stop-color="#ffa525"/><stop offset="1" stop-color="#ff9c03"/></linearGradient><linearGradient id="cw154" gradientUnits="userSpaceOnUse" x1="1453.7" y1="242.6" x2="1514.1" y2="168.0"><stop offset="0" stop-color="#ffffff"/><stop offset="0.04" stop-color="#fff8f0"/><stop offset="0.1" stop-color="#ffedda"/><stop offset="0.18" stop-color="#ffe0c0"/><stop offset="0.3" stop-color="#ffd09d"/><stop offset="0.45" stop-color="#ffc078"/><stop offset="0.65" stop-color="#ffae4d"/><stop offset="0.85" stop-color="#ffa024"/><stop offset="1" stop-color="#ff9703"/></linearGradient><linearGradient id="cw155" gradientUnits="userSpaceOnUse" x1="1453.7" y1="242.6" x2="1518.2" y2="168.4"><stop offset="0" stop-color="#ffffff"/><stop offset="0.04" stop-color="#fff7ef"/><stop offset="0.1" stop-color="#ffecd9"/><stop offset="0.18" stop-color="#ffdebf"/><stop offset="0.3" stop-color="#ffcd9c"/><stop offset="0.45" stop-color="#ffbc76"/><stop offset="0.65" stop-color="#ffa94b"/><stop offset="0.85" stop-color="#ff9b24"/><stop offset="1" stop-color="#ff9202"/></linearGradient><linearGradient id="cw156" gradientUnits="userSpaceOnUse" x1="1453.7" y1="242.6" x2="1522.5" y2="168.9"><stop offset="0" stop-color="#ffffff"/><stop offset="0.04" stop-color="#fff6ef"/><stop offset="0.1" stop-color="#ffead8"/><stop offset="0.18" stop-color="#ffdcbd"/><stop offset="0.3" stop-color="#ffca9a"/><stop offset="0.45" stop-color="#ffb875"/><stop offset="0.65" stop-color="#ffa54a"/><stop offset="0.85" stop-color="#ff9623"/><stop offset="1" stop-color="#ff8c02"/></linearGradient><linearGradient id="cw157" gradientUnits="userSpaceOnUse" x1="1453.7" y1="242.6" x2="1527.0" y2="169.3"><stop offset="0" stop-color="#ffffff"/><stop offset="0.04" stop-color="#fff6ee"/><stop offset="0.1" stop-color="#ffe9d7"/><stop offset="0.18" stop-color="#ffdabc"/><stop offset="0.3" stop-color="#ffc799"/><stop offset="0.45" stop-color="#ffb473"/><stop offset="0.65" stop-color="#ffa049"/><stop offset="0.85" stop-color="#ff9022"/><stop offset="1" stop-color="#ff8702"/></linearGradient><linearGradient id="cw158" gradientUnits="userSpaceOnUse" x1="1453.7" y1="242.6" x2="1531.8" y2="169.8"><stop offset="0" stop-color="#ffffff"/><stop offset="0.04" stop-color="#fff5ee"/><stop offset="0.1" stop-color="#ffe7d6"/><stop offset="0.18" stop-color="#ffd8bb"/><stop offset="0.3" stop-color="#ffc497"/><stop offset="0.45" stop-color="#ffb071"/><stop offset="0.65" stop-color="#ff9b47"/><stop offset="0.85" stop-color="#ff8b22"/><stop offset="1" stop-color="#ff8202"/></linearGradient><linearGradient id="cw159" gradientUnits="userSpaceOnUse" x1="1453.7" y1="242.6" x2="1536.9" y2="170.4"><stop offset="0" stop-color="#ffffff"/><stop offset="0.04" stop-color="#fff4ed"/><stop offset="0.1" stop-color="#ffe6d5"/><stop offset="0.18" stop-color="#ffd5b9"/><stop offset="0.3" stop-color="#ffc195"/><stop offset="0.45" stop-color="#ffac6f"/><stop offset="0.65" stop-color="#ff9746"/><stop offset="0.85" stop-color="#ff8621"/><stop offset="1" stop-color="#ff7c02"/></linearGradient><linearGradient id="cw160" gradientUnits="userSpaceOnUse" x1="1453.7" y1="242.6" x2="1542.3" y2="170.9"><stop offset="0" stop-color="#ffffff"/><stop offset="0.04" stop-color="#fff4ed"/><stop offset="0.1" stop-color="#ffe4d4"/><stop offset="0.18" stop-color="#ffd3b7"/><stop offset="0.3" stop-color="#ffbd93"/><stop offset="0.45" stop-color="#ffa86e"/><stop offset="0.65" stop-color="#ff9244"/><stop offset="0.85" stop-color="#ff8120"/><stop offset="1" stop-color="#ff7702"/></linearGradient><linearGradient id="cw161" gradientUnits="userSpaceOnUse" x1="1453.7" y1="242.6" x2="1548.1" y2="171.5"><stop offset="0" stop-color="#ffffff"/><stop offset="0.04" stop-color="#fff3ec"/><stop offset="0.1" stop-color="#ffe3d3"/><stop offset="0.18" stop-color="#ffd0b6"/><stop offset="0.3" stop-color="#ffb991"/><stop offset="0.45" stop-color="#ffa36c"/><stop offset="0.65" stop-color="#ff8d43"/><stop offset="0.85" stop-color="#ff7b1f"/><stop offset="1" stop-color="#ff7102"/></linearGradient><linearGradient id="cw162" gradientUnits="userSpaceOnUse" x1="1453.7" y1="242.6" x2="1554.4" y2="172.2"><stop offset="0" stop-color="#ffffff"/><stop offset="0.04" stop-color="#fff2ec"/><stop offset="0.1" stop-color="#ffe1d2"/><stop offset="0.18" stop-color="#ffcdb4"/><stop offset="0.3" stop-color="#ffb58f"/><stop offset="0.45" stop-color="#ff9e6a"/><stop offset="0.65" stop-color="#ff8742"/><stop offset="0.85" stop-color="#ff761f"/><stop offset="1" stop-color="#ff6b02"/></linearGradient><linearGradient id="cw163" gradientUnits="userSpaceOnUse" x1="1453.7" y1="242.6" x2="1561.2" y2="172.9"><stop offset="0" stop-color="#ffffff"/><stop offset="0.04" stop-color="#fff1eb"/><stop offset="0.1" stop-color="#ffdfd0"/><stop offset="0.18" stop-color="#ffcab2"/><stop offset="0.3" stop-color="#ffb18d"/><stop offset="0.45" stop-color="#ff9a68"/><stop offset="0.65" stop-color="#ff8240"/><stop offset="0.85" stop-color="#ff701e"/><stop offset="1" stop-color="#ff6502"/></linearGradient><linearGradient id="cw164" gradientUnits="userSpaceOnUse" x1="1453.7" y1="242.6" x2="1568.6" y2="173.6"><stop offset="0" stop-color="#ffffff"/><stop offset="0.04" stop-color="#fff0ea"/><stop offset="0.1" stop-color="#ffddcf"/><stop offset="0.18" stop-color="#ffc7b0"/><stop offset="0.3" stop-color="#ffad8b"/><stop offset="0.45" stop-color="#ff9566"/><stop offset="0.65" stop-color="#ff7c3e"/><stop offset="0.85" stop-color="#ff6a1d"/><stop offset="1" stop-color="#ff5f02"/></linearGradient><linearGradient id="cw165" gradientUnits="userSpaceOnUse" x1="1453.7" y1="242.6" x2="1576.7" y2="174.5"><stop offset="0" stop-color="#ffffff"/><stop offset="0.04" stop-color="#ffefea"/><stop offset="0.1" stop-color="#ffdacd"/><stop offset="0.18" stop-color="#ffc3ae"/><stop offset="0.3" stop-color="#ffa988"/><stop offset="0.45" stop-color="#ff8f64"/><stop offset="0.65" stop-color="#ff763d"/><stop offset="0.85" stop-color="#ff641c"/><stop offset="1" stop-color="#ff5902"/></linearGradient><linearGradient id="cw166" gradientUnits="userSpaceOnUse" x1="1453.7" y1="242.6" x2="1585.7" y2="175.4"><stop offset="0" stop-color="#ffffff"/><stop offset="0.04" stop-color="#ffeee9"/><stop offset="0.1" stop-color="#ffd8cc"/><stop offset="0.18" stop-color="#ffc0ac"/><stop offset="0.3" stop-color="#ffa486"/><stop offset="0.45" stop-color="#ff8a61"/><stop offset="0.65" stop-color="#ff703b"/><stop offset="0.85" stop-color="#ff5d1b"/><stop offset="1" stop-color="#ff5202"/></linearGradient><linearGradient id="cw167" gradientUnits="userSpaceOnUse" x1="1453.7" y1="242.6" x2="1595.7" y2="176.4"><stop offset="0" stop-color="#ffffff"/><stop offset="0.04" stop-color="#ffede8"/><stop offset="0.1" stop-color="#ffd5ca"/><stop offset="0.18" stop-color="#ffbca9"/><stop offset="0.3" stop-color="#ff9f83"/><stop offset="0.45" stop-color="#ff845f"/><stop offset="0.65" stop-color="#ff6a39"/><stop offset="0.85" stop-color="#ff571a"/><stop offset="1" stop-color="#ff4c02"/></linearGradient><linearGradient id="cw168" gradientUnits="userSpaceOnUse" x1="1453.7" y1="242.6" x2="1606.9" y2="177.6"><stop offset="0" stop-color="#ffffff"/><stop offset="0.04" stop-color="#ffebe7"/><stop offset="0.1" stop-color="#ffd2c8"/><stop offset="0.18" stop-color="#ffb7a7"/><stop offset="0.3" stop-color="#ff9980"/><stop offset="0.45" stop-color="#ff7e5c"/><stop offset="0.65" stop-color="#ff6338"/><stop offset="0.85" stop-color="#ff5019"/><stop offset="1" stop-color="#ff4402"/></linearGradient><linearGradient id="cw169" gradientUnits="userSpaceOnUse" x1="1453.7" y1="242.6" x2="1619.7" y2="178.9"><stop offset="0" stop-color="#ffffff"/><stop offset="0.04" stop-color="#ffe9e6"/><stop offset="0.1" stop-color="#ffcfc6"/><stop offset="0.18" stop-color="#ffb3a4"/><stop offset="0.3" stop-color="#ff937d"/><stop offset="0.45" stop-color="#ff775a"/><stop offset="0.65" stop-color="#ff5c36"/><stop offset="0.85" stop-color="#ff4818"/><stop offset="1" stop-color="#ff3d02"/></linearGradient><linearGradient id="cw170" gradientUnits="userSpaceOnUse" x1="1453.7" y1="242.6" x2="1634.4" y2="180.4"><stop offset="0" stop-color="#ffffff"/><stop offset="0.04" stop-color="#ffe8e4"/><stop offset="0.1" stop-color="#ffcbc3"/><stop offset="0.18" stop-color="#ffada1"/><stop offset="0.3" stop-color="#ff8d7a"/><stop offset="0.45" stop-color="#ff7057"/><stop offset="0.65" stop-color="#ff5434"/><stop offset="0.85" stop-color="#ff4017"/><stop offset="1" stop-color="#ff3502"/></linearGradient><linearGradient id="cw171" gradientUnits="userSpaceOnUse" x1="1453.7" y1="242.6" x2="1651.4" y2="182.2"><stop offset="0" stop-color="#ffffff"/><stop offset="0.04" stop-color="#ffe6e3"/><stop offset="0.1" stop-color="#ffc7c0"/><stop offset="0.18" stop-color="#ffa89d"/><stop offset="0.3" stop-color="#ff8676"/><stop offset="0.45" stop-color="#ff6853"/><stop offset="0.65" stop-color="#ff4c31"/><stop offset="0.85" stop-color="#ff3816"/><stop offset="1" stop-color="#ff2c01"/></linearGradient><linearGradient id="cw172" gradientUnits="userSpaceOnUse" x1="1453.7" y1="242.6" x2="1671.6" y2="184.3"><stop offset="0" stop-color="#ffffff"/><stop offset="0.04" stop-color="#ffe3e1"/><stop offset="0.1" stop-color="#ffc2bd"/><stop offset="0.18" stop-color="#ffa199"/><stop offset="0.3" stop-color="#ff7e72"/><stop offset="0.45" stop-color="#ff5f50"/><stop offset="0.65" stop-color="#ff432f"/><stop offset="0.85" stop-color="#ff2e15"/><stop offset="1" stop-color="#ff2201"/></linearGradient><linearGradient id="cw173" gradientUnits="userSpaceOnUse" x1="1453.7" y1="242.6" x2="1695.8" y2="186.8"><stop offset="0" stop-color="#ffffff"/><stop offset="0.04" stop-color="#ffe0df"/><stop offset="0.1" stop-color="#ffbcb9"/><stop offset="0.18" stop-color="#ff9a95"/><stop offset="0.3" stop-color="#ff756e"/><stop offset="0.45" stop-color="#ff564c"/><stop offset="0.65" stop-color="#ff392d"/><stop offset="0.85" stop-color="#ff2414"/><stop offset="1" stop-color="#ff1701"/></linearGradient><linearGradient id="cw174" gradientUnits="userSpaceOnUse" x1="1453.7" y1="242.6" x2="1725.4" y2="189.8"><stop offset="0" stop-color="#ffffff"/><stop offset="0.04" stop-color="#ffdddc"/><stop offset="0.1" stop-color="#ffb6b5"/><stop offset="0.18" stop-color="#ff9190"/><stop offset="0.3" stop-color="#ff6b69"/><stop offset="0.45" stop-color="#ff4b48"/><stop offset="0.65" stop-color="#ff2e2a"/><stop offset="0.85" stop-color="#ff1813"/><stop offset="1" stop-color="#ff0901"/></linearGradient><linearGradient id="cw175" gradientUnits="userSpaceOnUse" x1="1453.7" y1="242.6" x2="1732.2" y2="198.5"><stop offset="0" stop-color="#ffffff"/><stop offset="0.04" stop-color="#ffdcdc"/><stop offset="0.1" stop-color="#ffb4b6"/><stop offset="0.18" stop-color="#ff8f91"/><stop offset="0.3" stop-color="#ff686c"/><stop offset="0.45" stop-color="#ff484c"/><stop offset="0.65" stop-color="#ff2a2f"/><stop offset="0.85" stop-color="#ff131a"/><stop offset="1" stop-color="#ff010d"/></linearGradient><linearGradient id="cw176" gradientUnits="userSpaceOnUse" x1="1453.7" y1="242.6" x2="1722.2" y2="209.7"><stop offset="0" stop-color="#ffffff"/><stop offset="0.04" stop-color="#ffdddf"/><stop offset="0.1" stop-color="#ffb6ba"/><stop offset="0.18" stop-color="#ff9197"/><stop offset="0.3" stop-color="#ff6a73"/><stop offset="0.45" stop-color="#ff4954"/><stop offset="0.65" stop-color="#ff2b39"/><stop offset="0.85" stop-color="#ff1326"/><stop offset="1" stop-color="#ff011a"/></linearGradient><linearGradient id="cw177" gradientUnits="userSpaceOnUse" x1="1453.7" y1="242.6" x2="1713.0" y2="220.0"><stop offset="0" stop-color="#ffffff"/><stop offset="0.04" stop-color="#ffdee0"/><stop offset="0.1" stop-color="#ffb8be"/><stop offset="0.18" stop-color="#ff939c"/><stop offset="0.3" stop-color="#ff6c79"/><stop offset="0.45" stop-color="#ff4b5c"/><stop offset="0.65" stop-color="#ff2c42"/><stop offset="0.85" stop-color="#ff1430"/><stop offset="1" stop-color="#ff0125"/></linearGradient><linearGradient id="cw178" gradientUnits="userSpaceOnUse" x1="1453.7" y1="242.6" x2="1704.4" y2="229.5"><stop offset="0" stop-color="#ffffff"/><stop offset="0.04" stop-color="#ffdfe2"/><stop offset="0.1" stop-color="#ffb9c1"/><stop offset="0.18" stop-color="#ff94a1"/><stop offset="0.3" stop-color="#ff6e80"/><stop offset="0.45" stop-color="#ff4c64"/><stop offset="0.65" stop-color="#ff2d4b"/><stop offset="0.85" stop-color="#ff1439"/><stop offset="1" stop-color="#ff012f"/></linearGradient><linearGradient id="cw179" gradientUnits="userSpaceOnUse" x1="1453.7" y1="242.6" x2="1696.4" y2="238.4"><stop offset="0" stop-color="#ffffff"/><stop offset="0.04" stop-color="#ffdfe4"/><stop offset="0.1" stop-color="#ffbac5"/><stop offset="0.18" stop-color="#ff96a6"/><stop offset="0.3" stop-color="#ff6f86"/><stop offset="0.45" stop-color="#ff4d6b"/><stop offset="0.65" stop-color="#ff2d53"/><stop offset="0.85" stop-color="#ff1442"/><stop offset="1" stop-color="#ff0139"/></linearGradient><radialGradient id="cwpg" gradientUnits="userSpaceOnUse" cx="1453.7" cy="242.6" r="22"><stop offset="0" stop-color="#ffffff" stop-opacity="1"/><stop offset="0.35" stop-color="#ffffff" stop-opacity="0.85"/><stop offset="1" stop-color="#ffffff" stop-opacity="0"/></radialGradient><filter id="cblo" x="-5%" y="-5%" width="110%" height="110%"><feGaussianBlur stdDeviation="1.2"/></filter><filter id="cbli" x="-5%" y="-5%" width="110%" height="110%"><feGaussianBlur stdDeviation="0.6"/></filter><clipPath id="hshoe"><path d="M1520.3 671.4 L1520.2 671.5 L1520.1 671.6 L1519.9 671.8 L1519.7 671.9 L1519.4 672.0 L1519.0 672.0 L1518.6 672.0 L1518.0 672.0 L1517.4 672.0 L1516.7 671.8 L1516.0 671.6 L1515.1 671.1 L1514.2 670.6 L1513.2 669.9 L1512.2 669.1 L1511.1 668.1 L1509.7 667.0 L1508.2 665.7 L1506.5 664.1 L1504.7 662.5 L1502.6 660.6 L1500.4 658.6 L1498.0 656.3 L1495.3 653.9 L1492.4 651.3 L1489.3 648.5 L1486.0 645.6 L1482.4 642.3 L1478.5 638.8 L1474.2 634.9 L1469.4 630.4 L1464.0 625.3 L1458.2 619.9 L1452.5 614.4 L1447.1 609.1 L1442.2 604.3 L1438.1 600.1 L1434.6 596.4 L1431.4 592.9 L1428.2 589.3 L1424.8 585.3 L1421.0 580.6 L1416.8 575.4 L1412.4 569.7 L1407.7 563.7 L1402.9 557.4 L1398.0 550.6 L1392.9 543.5 L1387.7 535.9 L1382.3 528.0 L1376.8 519.7 L1371.2 511.0 L1365.5 502.0 L1359.7 492.6 L1353.8 482.9 L1347.9 472.7 L1341.8 462.1 L1335.7 451.3 L1329.6 440.4 L1323.7 429.4 L1317.7 418.2 L1311.7 406.8 L1305.8 395.3 L1300.0 383.8 L1294.3 372.3 L1289.0 361.0 L1284.0 349.7 L1279.1 338.5 L1274.4 327.3 L1270.0 316.3 L1265.8 305.6 L1261.9 295.3 L1258.2 285.3 L1254.8 275.5 L1251.6 266.1 L1248.7 256.9 L1246.0 248.2 L1243.5 239.9 L1241.4 232.1 L1239.4 224.7 L1237.8 217.7 L1236.3 211.0 L1235.1 204.7 L1234.0 198.8 L1233.2 193.2 L1232.5 188.0 L1232.1 183.1 L1231.8 178.5 L1231.7 174.2 L1231.7 170.1 L1231.9 166.2 L1232.3 162.6 L1232.9 159.3 L1233.5 156.1 L1234.4 153.2 L1235.3 150.4 L1236.5 147.9 L1237.7 145.5 L1239.1 143.3 L1240.7 141.4 L1242.3 139.6 L1244.0 137.9 L1245.8 136.5 L1247.7 135.2 L1249.7 134.1 L1251.8 133.2 L1254.0 132.3 L1256.2 131.5 L1258.5 130.9 L1260.9 130.4 L1263.3 130.0 L1265.7 129.7 L1268.3 129.4 L1270.8 129.2 L1273.4 129.0 L1276.0 128.8 L1278.6 128.7 L1281.3 128.7 L1284.0 128.6 L1286.7 128.6 L1289.3 128.6 L1292.0 128.6 L1294.7 128.6 L1297.4 128.7 L1300.1 128.7 L1302.8 128.8 L1305.5 128.9 L1308.3 129.0 L1311.1 129.2 L1313.9 129.3 L1316.7 129.5 L1319.6 129.7 L1322.6 129.9 L1325.5 130.1 L1328.5 130.3 L1331.5 130.6 L1334.6 130.8 L1337.8 131.1 L1340.9 131.4 L1344.1 131.7 L1347.4 132.0 L1350.7 132.4 L1354.0 132.7 L1357.5 133.1 L1360.9 133.4 L1364.4 133.8 L1368.0 134.2 L1371.6 134.6 L1375.3 135.0 L1379.1 135.5 L1382.9 135.9 L1386.8 136.4 L1390.8 136.8 L1394.8 137.3 L1398.9 137.8 L1403.1 138.3 L1407.3 138.8 L1411.7 139.3 L1416.0 139.9 L1420.5 140.4 L1425.0 141.0 L1429.6 141.5 L1434.3 142.1 L1439.1 142.7 L1444.0 143.3 L1448.9 143.9 L1453.9 144.5 L1459.0 145.2 L1464.2 145.8 L1469.5 146.5 L1474.8 147.1 L1480.2 147.8 L1485.7 148.5 L1491.3 149.2 L1497.0 149.9 L1502.7 150.7 L1508.6 151.4 L1514.5 152.1 L1520.5 152.9 L1526.5 153.7 L1532.7 154.4 L1538.9 155.2 L1545.2 156.0 L1551.6 156.8 L1558.0 157.6 L1564.5 158.4 L1571.1 159.3 L1577.7 160.1 L1584.4 160.9 L1591.2 161.8 L1597.9 162.6 L1604.7 163.5 L1611.6 164.4 L1618.5 165.2 L1625.4 166.1 L1632.3 167.0 L1639.2 167.9 L1646.0 168.7 L1652.4 169.5 L1658.2 170.3 L1664.0 171.0 L1670.2 171.8 L1677.4 172.7 L1686.0 173.8 L1696.6 175.1 L1708.8 176.6 L1722.0 178.3 L1735.5 179.9 L1748.4 181.6 L1760.3 183.1 L1771.0 184.4 L1781.3 185.7 L1791.2 187.0 L1800.6 188.2 L1809.5 189.3 L1818.0 190.4 L1825.9 191.4 L1833.3 192.3 L1840.2 193.1 L1846.7 194.0 L1853.0 194.7 L1858.9 195.5 L1864.7 196.2 L1870.1 196.9 L1875.3 197.6 L1880.1 198.2 L1884.7 198.8 L1888.9 199.3 L1892.9 199.8 L1896.6 200.2 L1899.9 200.7 L1903.1 201.1 L1906.0 201.4 L1908.7 201.8 L1911.1 202.1 L1913.2 202.3 L1915.1 202.6 L1916.9 202.8 L1918.6 203.0 L1920.4 203.2 L1922.3 203.5 L1924.1 203.7 L1926.0 203.9 L1927.7 204.2 L1929.3 204.4 L1930.6 204.5 L1931.6 204.7 L1932.5 204.8 L1933.2 204.9 L1933.7 204.9 L1934.2 205.0 L1934.5 205.0 Z"/></clipPath><clipPath id="plotclip"><rect x="1230.1" y="117.0" width="678.2" height="569.6"/></clipPath><g clip-path="url(#plotclip)"><g clip-path="url(#hshoe)"><g clip-path="url(#chp0)"><g><path d="M1738.8 191.2 L1876 1081 L1735 1091Z" fill="#009e00"/><path d="M1738.8 191.2 L1743 1091 L1672 1089Z" fill="#029e00"/><path d="M1738.8 191.2 L1680 1089 L1629 1084Z" fill="#049e00"/><path d="M1738.8 191.2 L1637 1085 L1594 1079Z" fill="#069e00"/><path d="M1738.8 191.2 L1602 1081 L1567 1075Z" fill="#089e00"/><path d="M1738.8 191.2 L1575 1076 L1544 1070Z" fill="#0a9e00"/><path d="M1738.8 191.2 L1552 1072 L1521 1064Z" fill="#0c9e00"/><path d="M1738.8 191.2 L1529 1066 L1502 1060Z" fill="#0f9e00"/><path d="M1738.8 191.2 L1510 1062 L1487 1055Z" fill="#109e00"/><path d="M1738.8 191.2 L1495 1057 L1472 1051Z" fill="#129e00"/><path d="M1738.8 191.2 L1479 1053 L1457 1046Z" fill="#149e00"/><path d="M1738.8 191.2 L1464 1048 L1446 1042Z" fill="#179e00"/><path d="M1738.8 191.2 L1453 1045 L1435 1038Z" fill="#189e00"/><path d="M1738.8 191.2 L1442 1041 L1424 1034Z" fill="#1a9e00"/><path d="M1738.8 191.2 L1431 1037 L1413 1030Z" fill="#1d9e00"/><path d="M1738.8 191.2 L1420 1033 L1405 1027Z" fill="#1e9e00"/><path d="M1738.8 191.2 L1413 1030 L1398 1024Z" fill="#209e00"/><path d="M1738.8 191.2 L1405 1027 L1387 1020Z" fill="#229e00"/><path d="M1738.8 191.2 L1394 1023 L1380 1017Z" fill="#249e00"/><path d="M1738.8 191.2 L1387 1020 L1373 1013Z" fill="#269e00"/><path d="M1738.8 191.2 L1380 1017 L1369 1012Z" fill="#289e00"/><path d="M1738.8 191.2 L1376 1015 L1362 1009Z" fill="#2a9e00"/><path d="M1738.8 191.2 L1369 1012 L1355 1005Z" fill="#2c9e00"/><path d="M1738.8 191.2 L1362 1009 L1351 1004Z" fill="#2e9e00"/><path d="M1738.8 191.2 L1358 1007 L1344 1000Z" fill="#309e00"/><path d="M1738.8 191.2 L1351 1004 L1341 998Z" fill="#329e00"/><path d="M1738.8 191.2 L1348 1002 L1334 995Z" fill="#349e00"/><path d="M1738.8 191.2 L1341 998 L1327 991Z" fill="#379e00"/><path d="M1738.8 191.2 L1334 995 L1320 988Z" fill="#3a9e00"/><path d="M1738.8 191.2 L1327 991 L1316 986Z" fill="#3d9e00"/><path d="M1738.8 191.2 L1323 990 L1313 984Z" fill="#3f9e00"/><path d="M1738.8 191.2 L1320 988 L1309 982Z" fill="#419e00"/><path d="M1738.8 191.2 L1316 986 L1306 980Z" fill="#439e00"/><path d="M1738.8 191.2 L1313 984 L1302 978Z" fill="#459e00"/><path d="M1738.8 191.2 L1309 982 L1299 976Z" fill="#479e00"/><path d="M1738.8 191.2 L1306 980 L1296 975Z" fill="#499e00"/><path d="M1738.8 191.2 L1302 978 L1292 973Z" fill="#4b9e00"/><path d="M1738.8 191.2 L1299 976 L1289 971Z" fill="#4d9e00"/><path d="M1738.8 191.2 L1296 975 L1285 969Z" fill="#509e00"/><path d="M1738.8 191.2 L1292 973 L1282 967Z" fill="#529e00"/><path d="M1738.8 191.2 L1289 971 L1279 965Z" fill="#559e00"/><path d="M1738.8 191.2 L1285 969 L1275 963Z" fill="#589e00"/><path d="M1738.8 191.2 L1282 967 L1272 961Z" fill="#5b9e00"/><path d="M1738.8 191.2 L1279 965 L1269 959Z" fill="#5e9e00"/><path d="M1738.8 191.2 L1275 963 L1265 957Z" fill="#619e00"/><path d="M1738.8 191.2 L1272 961 L1262 954Z" fill="#649e00"/><path d="M1738.8 191.2 L1269 959 L1259 952Z" fill="#689e00"/><path d="M1738.8 191.2 L1265 957 L1255 950Z" fill="#6b9e00"/><path d="M1738.8 191.2 L1262 954 L1252 948Z" fill="#6f9e00"/><path d="M1738.8 191.2 L1259 952 L1122 847Z" fill="#00009e"/><path d="M1738.8 191.2 L1128 852 L1111 836Z" fill="#00029e"/><path d="M1738.8 191.2 L1116 841 L1097 822Z" fill="#00049e"/><path d="M1738.8 191.2 L1102 828 L1083 808Z" fill="#00069e"/><path d="M1738.8 191.2 L1089 814 L1073 796Z" fill="#00089e"/><path d="M1738.8 191.2 L1078 802 L1060 782Z" fill="#000a9e"/><path d="M1738.8 191.2 L1065 788 L1049 770Z" fill="#000c9e"/><path d="M1738.8 191.2 L1054 776 L1039 758Z" fill="#000e9e"/><path d="M1738.8 191.2 L1044 764 L1030 745Z" fill="#00109e"/><path d="M1738.8 191.2 L1034 751 L1020 733Z" fill="#00129e"/><path d="M1738.8 191.2 L1025 739 L1013 723Z" fill="#00149e"/><path d="M1738.8 191.2 L1018 730 L1004 711Z" fill="#00169e"/><path d="M1738.8 191.2 L1008 717 L997 701Z" fill="#00189e"/><path d="M1738.8 191.2 L1002 707 L988 688Z" fill="#001a9e"/><path d="M1738.8 191.2 L993 694 L982 678Z" fill="#001d9e"/><path d="M1738.8 191.2 L986 685 L976 668Z" fill="#001f9e"/><path d="M1738.8 191.2 L980 675 L969 658Z" fill="#00219e"/><path d="M1738.8 191.2 L973 665 L963 648Z" fill="#00239e"/><path d="M1738.8 191.2 L967 655 L957 638Z" fill="#00259e"/><path d="M1738.8 191.2 L961 645 L954 631Z" fill="#00269e"/><path d="M1738.8 191.2 L957 638 L948 621Z" fill="#00289e"/><path d="M1738.8 191.2 L952 628 L944 614Z" fill="#002a9e"/><path d="M1738.8 191.2 L948 621 L939 603Z" fill="#002c9e"/><path d="M1738.8 191.2 L942 610 L935 596Z" fill="#002e9e"/><path d="M1738.8 191.2 L939 603 L932 589Z" fill="#00309e"/><path d="M1738.8 191.2 L935 596 L926 579Z" fill="#00329e"/><path d="M1738.8 191.2 L930 586 L923 572Z" fill="#00349e"/><path d="M1738.8 191.2 L926 579 L920 564Z" fill="#00369e"/><path d="M1738.8 191.2 L923 572 L917 557Z" fill="#00389e"/><path d="M1738.8 191.2 L920 564 L913 550Z" fill="#003a9e"/><path d="M1738.8 191.2 L917 557 L910 543Z" fill="#003c9e"/><path d="M1738.8 191.2 L913 550 L907 536Z" fill="#003e9e"/><path d="M1738.8 191.2 L910 543 L904 528Z" fill="#00409e"/><path d="M1738.8 191.2 L907 536 L901 521Z" fill="#00439e"/><path d="M1738.8 191.2 L904 528 L899 514Z" fill="#00459e"/><path d="M1738.8 191.2 L901 521 L897 510Z" fill="#00479e"/><path d="M1738.8 191.2 L900 517 L894 503Z" fill="#00499e"/><path d="M1738.8 191.2 L897 510 L892 495Z" fill="#004b9e"/><path d="M1738.8 191.2 L894 503 L889 488Z" fill="#004e9e"/><path d="M1738.8 191.2 L892 495 L888 484Z" fill="#00509e"/><path d="M1738.8 191.2 L890 492 L885 477Z" fill="#00529e"/><path d="M1738.8 191.2 L888 484 L883 469Z" fill="#00559e"/><path d="M1738.8 191.2 L885 477 L880 462Z" fill="#00589e"/><path d="M1738.8 191.2 L883 469 L878 454Z" fill="#005b9e"/><path d="M1738.8 191.2 L880 462 L877 451Z" fill="#005e9e"/><path d="M1738.8 191.2 L879 458 L875 443Z" fill="#00609e"/><path d="M1738.8 191.2 L877 451 L874 439Z" fill="#00639e"/><path d="M1738.8 191.2 L876 447 L873 435Z" fill="#00659e"/><path d="M1738.8 191.2 L875 443 L872 432Z" fill="#00679e"/><path d="M1738.8 191.2 L874 439 L870 428Z" fill="#00699e"/><path d="M1738.8 191.2 L873 435 L868 420Z" fill="#006b9e"/><path d="M1738.8 191.2 L870 428 L867 417Z" fill="#006e9e"/><path d="M1738.8 191.2 L869 424 L866 413Z" fill="#00709e"/><path d="M1738.8 191.2 L868 420 L866 409Z" fill="#00739e"/><path d="M1738.8 191.2 L867 417 L865 405Z" fill="#00759e"/><path d="M1738.8 191.2 L866 413 L864 401Z" fill="#00779e"/><path d="M1738.8 191.2 L866 409 L863 397Z" fill="#00799e"/><path d="M1738.8 191.2 L865 405 L862 394Z" fill="#007b9e"/><path d="M1738.8 191.2 L864 401 L861 390Z" fill="#007e9e"/><path d="M1738.8 191.2 L863 397 L860 386Z" fill="#00809e"/><path d="M1738.8 191.2 L862 394 L859 382Z" fill="#00839e"/><path d="M1738.8 191.2 L861 390 L858 378Z" fill="#00859e"/><path d="M1738.8 191.2 L860 386 L858 374Z" fill="#00889e"/><path d="M1738.8 191.2 L859 382 L857 371Z" fill="#008a9e"/><path d="M1738.8 191.2 L858 378 L856 367Z" fill="#008d9e"/><path d="M1738.8 191.2 L858 374 L855 363Z" fill="#00909e"/><path d="M1738.8 191.2 L857 371 L855 359Z" fill="#00939e"/><path d="M1738.8 191.2 L856 367 L854 355Z" fill="#00969e"/><path d="M1738.8 191.2 L855 363 L853 351Z" fill="#00999e"/><path d="M1738.8 191.2 L855 359 L852 347Z" fill="#009c9e"/><path d="M1738.8 191.2 L854 355 L852 344Z" fill="#009e9d"/><path d="M1738.8 191.2 L853 351 L851 340Z" fill="#009e9a"/><path d="M1738.8 191.2 L852 347 L851 336Z" fill="#009e96"/><path d="M1738.8 191.2 L852 344 L850 332Z" fill="#009e93"/><path d="M1738.8 191.2 L851 340 L849 328Z" fill="#009e90"/><path d="M1738.8 191.2 L851 336 L849 324Z" fill="#009e8d"/><path d="M1738.8 191.2 L850 332 L848 320Z" fill="#009e8a"/><path d="M1738.8 191.2 L849 328 L848 316Z" fill="#009e87"/><path d="M1738.8 191.2 L849 324 L847 313Z" fill="#009e84"/><path d="M1738.8 191.2 L848 320 L846 309Z" fill="#009e81"/><path d="M1738.8 191.2 L848 316 L846 305Z" fill="#009e7e"/><path d="M1738.8 191.2 L847 313 L846 301Z" fill="#009e7b"/><path d="M1738.8 191.2 L846 309 L845 297Z" fill="#009e78"/><path d="M1738.8 191.2 L846 305 L845 293Z" fill="#009e75"/><path d="M1738.8 191.2 L846 301 L844 289Z" fill="#009e72"/><path d="M1738.8 191.2 L845 297 L844 285Z" fill="#009e70"/><path d="M1738.8 191.2 L845 293 L843 281Z" fill="#009e6d"/><path d="M1738.8 191.2 L844 289 L843 277Z" fill="#009e6a"/><path d="M1738.8 191.2 L844 285 L843 274Z" fill="#009e67"/><path d="M1738.8 191.2 L843 281 L842 270Z" fill="#009e65"/><path d="M1738.8 191.2 L843 277 L842 266Z" fill="#009e62"/><path d="M1738.8 191.2 L843 274 L842 262Z" fill="#009e5f"/><path d="M1738.8 191.2 L842 270 L841 258Z" fill="#009e5d"/><path d="M1738.8 191.2 L842 266 L841 254Z" fill="#009e5a"/><path d="M1738.8 191.2 L842 262 L841 250Z" fill="#009e58"/><path d="M1738.8 191.2 L841 258 L840 246Z" fill="#009e55"/><path d="M1738.8 191.2 L841 254 L840 242Z" fill="#009e53"/><path d="M1738.8 191.2 L841 250 L840 238Z" fill="#009e50"/><path d="M1738.8 191.2 L840 246 L840 234Z" fill="#009e4e"/><path d="M1738.8 191.2 L840 242 L840 230Z" fill="#009e4b"/><path d="M1738.8 191.2 L840 238 L839 227Z" fill="#009e49"/><path d="M1738.8 191.2 L840 234 L839 223Z" fill="#009e46"/><path d="M1738.8 191.2 L840 230 L839 219Z" fill="#009e44"/><path d="M1738.8 191.2 L839 227 L839 215Z" fill="#009e41"/><path d="M1738.8 191.2 L839 223 L839 211Z" fill="#009e3f"/><path d="M1738.8 191.2 L839 219 L839 207Z" fill="#009e3d"/><path d="M1738.8 191.2 L839 215 L839 203Z" fill="#009e3a"/><path d="M1738.8 191.2 L839 211 L839 199Z" fill="#009e38"/><path d="M1738.8 191.2 L839 207 L839 195Z" fill="#009e36"/><path d="M1738.8 191.2 L839 203 L839 191Z" fill="#009e34"/><path d="M1738.8 191.2 L839 199 L839 187Z" fill="#009e31"/><path d="M1738.8 191.2 L839 195 L839 183Z" fill="#009e2f"/><path d="M1738.8 191.2 L839 191 L839 179Z" fill="#009e2d"/><path d="M1738.8 191.2 L839 187 L839 175Z" fill="#009e2b"/><path d="M1738.8 191.2 L839 183 L839 172Z" fill="#009e29"/><path d="M1738.8 191.2 L839 179 L839 168Z" fill="#009e26"/><path d="M1738.8 191.2 L839 175 L839 164Z" fill="#009e24"/><path d="M1738.8 191.2 L839 172 L839 160Z" fill="#009e22"/><path d="M1738.8 191.2 L839 168 L839 156Z" fill="#009e20"/><path d="M1738.8 191.2 L839 164 L840 152Z" fill="#009e1e"/><path d="M1738.8 191.2 L839 160 L840 148Z" fill="#009e1c"/><path d="M1738.8 191.2 L839 156 L840 144Z" fill="#009e1a"/><path d="M1738.8 191.2 L840 152 L840 140Z" fill="#009e18"/><path d="M1738.8 191.2 L840 148 L840 136Z" fill="#009e16"/><path d="M1738.8 191.2 L840 144 L841 132Z" fill="#009e14"/><path d="M1738.8 191.2 L840 140 L841 128Z" fill="#009e12"/><path d="M1738.8 191.2 L840 136 L841 125Z" fill="#009e10"/><path d="M1738.8 191.2 L841 132 L842 121Z" fill="#009e0e"/><path d="M1738.8 191.2 L841 128 L842 117Z" fill="#009e0c"/><path d="M1738.8 191.2 L841 125 L842 113Z" fill="#009e0a"/><path d="M1738.8 191.2 L842 121 L843 109Z" fill="#009e08"/><path d="M1738.8 191.2 L842 117 L843 105Z" fill="#009e06"/><path d="M1738.8 191.2 L842 113 L843 101Z" fill="#009e04"/><path d="M1738.8 191.2 L843 109 L844 97Z" fill="#009e02"/><path d="M1738.8 191.2 L843 105 L932 -207Z" fill="#009e00"/><path d="M1738.8 191.2 L928 -200 L1119 -462Z" fill="#009e00"/><path d="M1738.8 191.2 L1114 -456 L1384 -636Z" fill="#009e00"/><path d="M1738.8 191.2 L1376 -633 L1487 -673Z" fill="#009e00"/><path d="M1738.8 191.2 L1479 -671 L1491 -674Z" fill="#039e00"/><path d="M1738.8 191.2 L1483 -672 L1495 -675Z" fill="#059e00"/><path d="M1738.8 191.2 L1487 -673 L1498 -676Z" fill="#079e00"/><path d="M1738.8 191.2 L1491 -674 L1502 -677Z" fill="#099e00"/><path d="M1738.8 191.2 L1495 -675 L1506 -678Z" fill="#0b9e00"/><path d="M1738.8 191.2 L1498 -676 L1510 -679Z" fill="#0d9e00"/><path d="M1738.8 191.2 L1502 -677 L1513 -680Z" fill="#0f9e00"/><path d="M1738.8 191.2 L1506 -678 L1517 -681Z" fill="#129e00"/><path d="M1738.8 191.2 L1510 -679 L1521 -682Z" fill="#149e00"/><path d="M1738.8 191.2 L1513 -680 L1525 -683Z" fill="#169e00"/><path d="M1738.8 191.2 L1517 -681 L1529 -684Z" fill="#189e00"/><path d="M1738.8 191.2 L1521 -682 L1533 -685Z" fill="#1b9e00"/><path d="M1738.8 191.2 L1525 -683 L1536 -686Z" fill="#1d9e00"/><path d="M1738.8 191.2 L1529 -684 L1540 -687Z" fill="#1f9e00"/><path d="M1738.8 191.2 L1533 -685 L1544 -687Z" fill="#219e00"/><path d="M1738.8 191.2 L1536 -686 L1548 -688Z" fill="#249e00"/><path d="M1738.8 191.2 L1540 -687 L1552 -689Z" fill="#269e00"/><path d="M1738.8 191.2 L1544 -687 L1556 -690Z" fill="#289e00"/><path d="M1738.8 191.2 L1548 -688 L1559 -691Z" fill="#2b9e00"/><path d="M1738.8 191.2 L1552 -689 L1563 -692Z" fill="#2d9e00"/><path d="M1738.8 191.2 L1556 -690 L1567 -692Z" fill="#2f9e00"/><path d="M1738.8 191.2 L1559 -691 L1571 -693Z" fill="#329e00"/><path d="M1738.8 191.2 L1563 -692 L1575 -694Z" fill="#349e00"/><path d="M1738.8 191.2 L1567 -692 L1579 -694Z" fill="#379e00"/><path d="M1738.8 191.2 L1571 -693 L1583 -695Z" fill="#399e00"/><path d="M1738.8 191.2 L1575 -694 L1586 -696Z" fill="#3c9e00"/><path d="M1738.8 191.2 L1579 -694 L1590 -696Z" fill="#3e9e00"/><path d="M1738.8 191.2 L1583 -695 L1594 -697Z" fill="#419e00"/><path d="M1738.8 191.2 L1586 -696 L1598 -698Z" fill="#439e00"/><path d="M1738.8 191.2 L1590 -696 L1602 -698Z" fill="#469e00"/><path d="M1738.8 191.2 L1594 -697 L1606 -699Z" fill="#489e00"/><path d="M1738.8 191.2 L1598 -698 L1610 -699Z" fill="#4b9e00"/></g></g><g clip-path="url(#chp1)"><g><path d="M1371.6 153.3 L2272 149 L2265 259Z" fill="#9e0000"/><path d="M1371.6 153.3 L2266 251 L2264 271Z" fill="#9e0002"/><path d="M1371.6 153.3 L2265 263 L2262 286Z" fill="#9e0004"/><path d="M1371.6 153.3 L2263 279 L2260 298Z" fill="#9e0007"/><path d="M1371.6 153.3 L2261 290 L2258 310Z" fill="#9e0009"/><path d="M1371.6 153.3 L2259 302 L2256 321Z" fill="#9e000a"/><path d="M1371.6 153.3 L2257 313 L2254 333Z" fill="#9e000c"/><path d="M1371.6 153.3 L2255 325 L2251 344Z" fill="#9e000e"/><path d="M1371.6 153.3 L2253 337 L2248 360Z" fill="#9e0010"/><path d="M1371.6 153.3 L2249 352 L2245 371Z" fill="#9e0013"/><path d="M1371.6 153.3 L2247 363 L2242 382Z" fill="#9e0015"/><path d="M1371.6 153.3 L2244 375 L2239 394Z" fill="#9e0017"/><path d="M1371.6 153.3 L2241 386 L2236 405Z" fill="#9e0019"/><path d="M1371.6 153.3 L2238 398 L2233 413Z" fill="#9e001a"/><path d="M1371.6 153.3 L2236 405 L2230 424Z" fill="#9e001c"/><path d="M1371.6 153.3 L2232 416 L2226 435Z" fill="#9e001e"/><path d="M1371.6 153.3 L2229 428 L2223 446Z" fill="#9e0020"/><path d="M1371.6 153.3 L2225 439 L2219 457Z" fill="#9e0023"/><path d="M1371.6 153.3 L2221 450 L2216 465Z" fill="#9e0024"/><path d="M1371.6 153.3 L2219 457 L2212 476Z" fill="#9e0026"/><path d="M1371.6 153.3 L2215 468 L2208 487Z" fill="#9e0028"/><path d="M1371.6 153.3 L2210 479 L2203 498Z" fill="#9e002b"/><path d="M1371.6 153.3 L2206 490 L2200 505Z" fill="#9e002c"/><path d="M1371.6 153.3 L2203 498 L2195 516Z" fill="#9e002f"/><path d="M1371.6 153.3 L2199 509 L2192 523Z" fill="#9e0030"/><path d="M1371.6 153.3 L2195 516 L2187 534Z" fill="#9e0033"/><path d="M1371.6 153.3 L2191 527 L2184 541Z" fill="#9e0034"/><path d="M1371.6 153.3 L2187 534 L2179 551Z" fill="#9e0037"/><path d="M1371.6 153.3 L2182 544 L2175 558Z" fill="#9e0038"/><path d="M1371.6 153.3 L2179 551 L2172 565Z" fill="#9e003a"/><path d="M1371.6 153.3 L2175 558 L2166 576Z" fill="#9e003d"/><path d="M1371.6 153.3 L2170 569 L2163 583Z" fill="#9e003e"/><path d="M1371.6 153.3 L2166 576 L2159 590Z" fill="#9e0040"/><path d="M1371.6 153.3 L2163 583 L2155 596Z" fill="#9e0042"/><path d="M1371.6 153.3 L2159 590 L2149 607Z" fill="#9e0044"/><path d="M1371.6 153.3 L2153 600 L2145 613Z" fill="#9e0046"/><path d="M1371.6 153.3 L2149 607 L2141 620Z" fill="#9e0048"/><path d="M1371.6 153.3 L2145 613 L2137 627Z" fill="#9e004a"/><path d="M1371.6 153.3 L2141 620 L2133 634Z" fill="#9e004c"/><path d="M1371.6 153.3 L2137 627 L2129 640Z" fill="#9e004e"/><path d="M1371.6 153.3 L2133 634 L2124 647Z" fill="#9e0050"/><path d="M1371.6 153.3 L2129 640 L2120 653Z" fill="#9e0052"/><path d="M1371.6 153.3 L2124 647 L2116 660Z" fill="#9e0054"/><path d="M1371.6 153.3 L2120 653 L2111 666Z" fill="#9e0056"/><path d="M1371.6 153.3 L2116 660 L2107 673Z" fill="#9e0058"/><path d="M1371.6 153.3 L2111 666 L2102 679Z" fill="#9e005a"/><path d="M1371.6 153.3 L2107 673 L2100 682Z" fill="#9e005c"/><path d="M1371.6 153.3 L2104 676 L2095 689Z" fill="#9e005e"/><path d="M1371.6 153.3 L2100 682 L2090 695Z" fill="#9e0060"/><path d="M1371.6 153.3 L2095 689 L2086 701Z" fill="#9e0062"/><path d="M1371.6 153.3 L2090 695 L2083 704Z" fill="#9e0064"/><path d="M1371.6 153.3 L2088 698 L2078 710Z" fill="#9e0066"/><path d="M1371.6 153.3 L2083 704 L2073 717Z" fill="#9e0068"/><path d="M1371.6 153.3 L2078 710 L2071 720Z" fill="#9e006a"/><path d="M1371.6 153.3 L2076 714 L2066 726Z" fill="#9e006c"/><path d="M1371.6 153.3 L2071 720 L2061 732Z" fill="#9e006e"/><path d="M1371.6 153.3 L2066 726 L2056 738Z" fill="#9e0071"/><path d="M1371.6 153.3 L2061 732 L2053 741Z" fill="#9e0073"/><path d="M1371.6 153.3 L2059 735 L2048 747Z" fill="#9e0075"/><path d="M1371.6 153.3 L2053 741 L2046 750Z" fill="#9e0077"/><path d="M1371.6 153.3 L2051 744 L2040 756Z" fill="#9e0079"/><path d="M1371.6 153.3 L2046 750 L2038 758Z" fill="#9e007b"/><path d="M1371.6 153.3 L2043 753 L2032 764Z" fill="#9e007d"/><path d="M1371.6 153.3 L2038 758 L2027 770Z" fill="#9e0080"/><path d="M1371.6 153.3 L2032 764 L2024 773Z" fill="#9e0082"/><path d="M1371.6 153.3 L2030 767 L2019 778Z" fill="#9e0084"/><path d="M1371.6 153.3 L2024 773 L2014 784Z" fill="#9e0087"/><path d="M1371.6 153.3 L2019 778 L2011 787Z" fill="#9e008a"/><path d="M1371.6 153.3 L2016 781 L2005 792Z" fill="#9e008c"/><path d="M1371.6 153.3 L2011 787 L2000 798Z" fill="#9e008f"/><path d="M1371.6 153.3 L2005 792 L1997 801Z" fill="#9e0092"/><path d="M1371.6 153.3 L2002 795 L1991 806Z" fill="#9e0094"/><path d="M1371.6 153.3 L1997 801 L1988 809Z" fill="#9e0097"/><path d="M1371.6 153.3 L1994 803 L1983 814Z" fill="#9e0099"/><path d="M1371.6 153.3 L1988 809 L1980 817Z" fill="#9e009c"/><path d="M1371.6 153.3 L1985 812 L1977 819Z" fill="#9e009e"/><path d="M1371.6 153.3 L1983 814 L1971 825Z" fill="#9c009e"/><path d="M1371.6 153.3 L1977 819 L1968 827Z" fill="#99009e"/><path d="M1371.6 153.3 L1974 822 L1965 830Z" fill="#97009e"/><path d="M1371.6 153.3 L1971 825 L1959 835Z" fill="#95009e"/><path d="M1371.6 153.3 L1965 830 L1956 838Z" fill="#92009e"/><path d="M1371.6 153.3 L1962 833 L1950 843Z" fill="#90009e"/><path d="M1371.6 153.3 L1956 838 L1947 845Z" fill="#8d009e"/><path d="M1371.6 153.3 L1953 840 L1941 850Z" fill="#8b009e"/><path d="M1371.6 153.3 L1947 845 L1935 855Z" fill="#88009e"/><path d="M1371.6 153.3 L1941 850 L1929 860Z" fill="#85009e"/><path d="M1371.6 153.3 L1935 855 L1926 863Z" fill="#82009e"/><path d="M1371.6 153.3 L1932 858 L1919 867Z" fill="#80009e"/><path d="M1371.6 153.3 L1926 863 L1913 872Z" fill="#7d009e"/><path d="M1371.6 153.3 L1919 867 L1907 877Z" fill="#7a009e"/><path d="M1371.6 153.3 L1913 872 L1901 881Z" fill="#77009e"/><path d="M1371.6 153.3 L1907 877 L1897 884Z" fill="#75009e"/><path d="M1371.6 153.3 L1904 879 L1891 888Z" fill="#73009e"/><path d="M1371.6 153.3 L1897 884 L1885 893Z" fill="#70009e"/><path d="M1371.6 153.3 L1891 888 L1881 895Z" fill="#6e009e"/><path d="M1371.6 153.3 L1888 891 L1875 899Z" fill="#6c009e"/><path d="M1371.6 153.3 L1881 895 L1872 902Z" fill="#6a009e"/><path d="M1371.6 153.3 L1878 897 L1865 906Z" fill="#68009e"/><path d="M1371.6 153.3 L1872 902 L1862 908Z" fill="#66009e"/><path d="M1371.6 153.3 L1868 904 L1855 912Z" fill="#64009e"/><path d="M1371.6 153.3 L1862 908 L1852 914Z" fill="#62009e"/><path d="M1371.6 153.3 L1858 910 L1845 919Z" fill="#60009e"/><path d="M1371.6 153.3 L1852 914 L1838 923Z" fill="#5e009e"/><path d="M1371.6 153.3 L1845 919 L1832 927Z" fill="#5b009e"/><path d="M1371.6 153.3 L1838 923 L1825 931Z" fill="#59009e"/><path d="M1371.6 153.3 L1832 927 L1818 935Z" fill="#56009e"/><path d="M1371.6 153.3 L1825 931 L1811 939Z" fill="#54009e"/><path d="M1371.6 153.3 L1818 935 L1808 940Z" fill="#52009e"/><path d="M1371.6 153.3 L1815 937 L1801 944Z" fill="#50009e"/><path d="M1371.6 153.3 L1808 940 L1794 948Z" fill="#4e009e"/><path d="M1371.6 153.3 L1801 944 L1787 952Z" fill="#4c009e"/><path d="M1371.6 153.3 L1794 948 L1780 955Z" fill="#49009e"/><path d="M1371.6 153.3 L1787 952 L1773 959Z" fill="#47009e"/><path d="M1371.6 153.3 L1780 955 L1766 962Z" fill="#45009e"/><path d="M1371.6 153.3 L1773 959 L1759 966Z" fill="#43009e"/><path d="M1371.6 153.3 L1766 962 L1752 969Z" fill="#41009e"/><path d="M1371.6 153.3 L1759 966 L1745 972Z" fill="#3e009e"/><path d="M1371.6 153.3 L1752 969 L1738 975Z" fill="#3c009e"/><path d="M1371.6 153.3 L1745 972 L1730 979Z" fill="#3a009e"/><path d="M1371.6 153.3 L1738 975 L1723 982Z" fill="#38009e"/><path d="M1371.6 153.3 L1730 979 L1716 985Z" fill="#36009e"/><path d="M1371.6 153.3 L1723 982 L1709 988Z" fill="#34009e"/><path d="M1371.6 153.3 L1716 985 L1701 991Z" fill="#32009e"/><path d="M1371.6 153.3 L1709 988 L1694 994Z" fill="#30009e"/><path d="M1371.6 153.3 L1701 991 L1687 996Z" fill="#2e009e"/><path d="M1371.6 153.3 L1694 994 L1679 999Z" fill="#2c009e"/><path d="M1371.6 153.3 L1687 996 L1672 1002Z" fill="#2a009e"/><path d="M1371.6 153.3 L1679 999 L1665 1004Z" fill="#28009e"/><path d="M1371.6 153.3 L1672 1002 L1657 1007Z" fill="#26009e"/><path d="M1371.6 153.3 L1665 1004 L1650 1009Z" fill="#24009e"/><path d="M1371.6 153.3 L1657 1007 L1642 1012Z" fill="#22009e"/><path d="M1371.6 153.3 L1650 1009 L1631 1015Z" fill="#1f009e"/><path d="M1371.6 153.3 L1638 1013 L1623 1017Z" fill="#1e009e"/><path d="M1371.6 153.3 L1631 1015 L1616 1020Z" fill="#1c009e"/><path d="M1371.6 153.3 L1623 1017 L1608 1022Z" fill="#1a009e"/><path d="M1371.6 153.3 L1616 1020 L1601 1024Z" fill="#18009e"/><path d="M1371.6 153.3 L1608 1022 L1593 1026Z" fill="#16009e"/><path d="M1371.6 153.3 L1601 1024 L1582 1028Z" fill="#14009e"/><path d="M1371.6 153.3 L1589 1027 L1574 1030Z" fill="#12009e"/><path d="M1371.6 153.3 L1582 1028 L1566 1032Z" fill="#10009e"/><path d="M1371.6 153.3 L1574 1030 L1555 1034Z" fill="#0d009e"/><path d="M1371.6 153.3 L1563 1033 L1547 1036Z" fill="#0c009e"/><path d="M1371.6 153.3 L1555 1034 L1539 1038Z" fill="#0a009e"/><path d="M1371.6 153.3 L1547 1036 L1532 1039Z" fill="#08009e"/><path d="M1371.6 153.3 L1539 1038 L1520 1041Z" fill="#06009e"/><path d="M1371.6 153.3 L1528 1040 L1512 1042Z" fill="#04009e"/><path d="M1371.6 153.3 L1520 1041 L1501 1044Z" fill="#01009e"/><path d="M1371.6 153.3 L1509 1043 L1293 1050Z" fill="#00009e"/><path d="M1371.6 153.3 L1301 1051 L1274 1048Z" fill="#9e0b00"/><path d="M1371.6 153.3 L1281 1049 L1246 1045Z" fill="#9e0900"/><path d="M1371.6 153.3 L1254 1046 L1208 1038Z" fill="#9e0800"/><path d="M1371.6 153.3 L1215 1040 L1154 1027Z" fill="#9e0500"/><path d="M1371.6 153.3 L1161 1028 L1071 1002Z" fill="#9e0300"/><path d="M1371.6 153.3 L1079 1004 L911 927Z" fill="#9e0100"/><path d="M1371.6 153.3 L918 931 L766 819Z" fill="#9e0000"/><path d="M1371.6 153.3 L1971 -518 L1991 -500Z" fill="#9e0800"/><path d="M1371.6 153.3 L1985 -505 L2005 -486Z" fill="#9e0700"/><path d="M1371.6 153.3 L2000 -491 L2022 -469Z" fill="#9e0500"/><path d="M1371.6 153.3 L2016 -475 L2038 -452Z" fill="#9e0300"/><path d="M1371.6 153.3 L2032 -458 L2206 -184Z" fill="#9e0000"/><path d="M1371.6 153.3 L2203 -191 L2271 126Z" fill="#9e0000"/><path d="M1371.6 153.3 L2271 118 L2272 157Z" fill="#9e0000"/></g></g><g clip-path="url(#chp2)"><g><path d="M1428.6 536.7 L2329 533 L2328 552Z" fill="#9e0007"/><path d="M1428.6 536.7 L2329 545 L2328 568Z" fill="#9e0009"/><path d="M1428.6 536.7 L2328 560 L2328 580Z" fill="#9e000c"/><path d="M1428.6 536.7 L2328 572 L2327 592Z" fill="#9e000d"/><path d="M1428.6 536.7 L2327 584 L2327 596Z" fill="#9e000f"/><path d="M1428.6 536.7 L2327 588 L2323 635Z" fill="#009e00"/><path d="M1428.6 536.7 L533 447 L534 435Z" fill="#009e3f"/><path d="M1428.6 536.7 L534 443 L535 431Z" fill="#009e3d"/><path d="M1428.6 536.7 L534 439 L535 427Z" fill="#009e3b"/><path d="M1428.6 536.7 L534 435 L536 423Z" fill="#009e39"/><path d="M1428.6 536.7 L535 431 L536 419Z" fill="#009e37"/><path d="M1428.6 536.7 L535 427 L537 415Z" fill="#009e35"/><path d="M1428.6 536.7 L536 423 L537 411Z" fill="#009e33"/><path d="M1428.6 536.7 L536 419 L538 408Z" fill="#009e31"/><path d="M1428.6 536.7 L537 415 L538 404Z" fill="#009e2f"/><path d="M1428.6 536.7 L537 411 L539 400Z" fill="#009e2d"/><path d="M1428.6 536.7 L538 408 L540 396Z" fill="#009e2b"/><path d="M1428.6 536.7 L538 404 L540 392Z" fill="#009e29"/><path d="M1428.6 536.7 L539 400 L541 388Z" fill="#009e27"/><path d="M1428.6 536.7 L540 396 L542 384Z" fill="#009e25"/><path d="M1428.6 536.7 L540 392 L542 380Z" fill="#009e23"/><path d="M1428.6 536.7 L541 388 L543 377Z" fill="#009e21"/><path d="M1428.6 536.7 L542 384 L544 369Z" fill="#009e1f"/><path d="M1428.6 536.7 L543 377 L545 365Z" fill="#009e1c"/><path d="M1428.6 536.7 L544 373 L546 361Z" fill="#009e1a"/><path d="M1428.6 536.7 L544 369 L547 357Z" fill="#009e18"/><path d="M1428.6 536.7 L545 365 L547 353Z" fill="#009e16"/><path d="M1428.6 536.7 L546 361 L549 346Z" fill="#009e14"/><path d="M1428.6 536.7 L547 353 L550 342Z" fill="#009e11"/><path d="M1428.6 536.7 L548 350 L551 338Z" fill="#009e0f"/><path d="M1428.6 536.7 L549 346 L552 334Z" fill="#009e0d"/><path d="M1428.6 536.7 L550 342 L553 327Z" fill="#009e0b"/><path d="M1428.6 536.7 L552 334 L554 323Z" fill="#009e08"/><path d="M1428.6 536.7 L553 330 L555 319Z" fill="#009e06"/><path d="M1428.6 536.7 L553 327 L557 311Z" fill="#009e04"/><path d="M1428.6 536.7 L555 319 L689 24Z" fill="#009e00"/><path d="M1428.6 536.7 L685 30 L912 -201Z" fill="#009e00"/><path d="M1428.6 536.7 L906 -196 L1199 -334Z" fill="#009e00"/><path d="M1428.6 536.7 L1192 -332 L1303 -355Z" fill="#009e00"/><path d="M1428.6 536.7 L1296 -353 L1307 -355Z" fill="#039e00"/><path d="M1428.6 536.7 L1299 -354 L1311 -356Z" fill="#059e00"/><path d="M1428.6 536.7 L1303 -355 L1315 -356Z" fill="#089e00"/><path d="M1428.6 536.7 L1307 -355 L1319 -357Z" fill="#0a9e00"/><path d="M1428.6 536.7 L1311 -356 L1323 -357Z" fill="#0d9e00"/><path d="M1428.6 536.7 L1315 -356 L1327 -358Z" fill="#0f9e00"/><path d="M1428.6 536.7 L1319 -357 L1331 -358Z" fill="#129e00"/><path d="M1428.6 536.7 L1323 -357 L1335 -358Z" fill="#149e00"/><path d="M1428.6 536.7 L1327 -358 L1338 -359Z" fill="#179e00"/><path d="M1428.6 536.7 L1331 -358 L1342 -359Z" fill="#199e00"/><path d="M1428.6 536.7 L1335 -358 L1346 -360Z" fill="#1c9e00"/><path d="M1428.6 536.7 L1338 -359 L1350 -360Z" fill="#1e9e00"/><path d="M1428.6 536.7 L1342 -359 L1354 -360Z" fill="#219e00"/><path d="M1428.6 536.7 L1346 -360 L1358 -361Z" fill="#239e00"/><path d="M1428.6 536.7 L1350 -360 L1362 -361Z" fill="#269e00"/><path d="M1428.6 536.7 L1354 -360 L1366 -361Z" fill="#299e00"/><path d="M1428.6 536.7 L1358 -361 L1370 -361Z" fill="#2b9e00"/><path d="M1428.6 536.7 L1362 -361 L1374 -362Z" fill="#2e9e00"/><path d="M1428.6 536.7 L1366 -361 L1378 -362Z" fill="#319e00"/><path d="M1428.6 536.7 L1370 -361 L1381 -362Z" fill="#339e00"/><path d="M1428.6 536.7 L1374 -362 L1385 -362Z" fill="#369e00"/><path d="M1428.6 536.7 L1378 -362 L1389 -362Z" fill="#399e00"/><path d="M1428.6 536.7 L1381 -362 L1393 -363Z" fill="#3c9e00"/><path d="M1428.6 536.7 L1385 -362 L1397 -363Z" fill="#3f9e00"/><path d="M1428.6 536.7 L1389 -362 L1401 -363Z" fill="#419e00"/><path d="M1428.6 536.7 L1393 -363 L1405 -363Z" fill="#449e00"/><path d="M1428.6 536.7 L1397 -363 L1409 -363Z" fill="#479e00"/><path d="M1428.6 536.7 L1401 -363 L1413 -363Z" fill="#4a9e00"/><path d="M1428.6 536.7 L1405 -363 L1417 -363Z" fill="#4d9e00"/><path d="M1428.6 536.7 L1409 -363 L1421 -363Z" fill="#509e00"/><path d="M1428.6 536.7 L1413 -363 L1425 -363Z" fill="#539e00"/><path d="M1428.6 536.7 L1417 -363 L1429 -363Z" fill="#569e00"/><path d="M1428.6 536.7 L1421 -363 L1433 -363Z" fill="#599e00"/><path d="M1428.6 536.7 L1425 -363 L1436 -363Z" fill="#5c9e00"/><path d="M1428.6 536.7 L1429 -363 L1440 -363Z" fill="#609e00"/><path d="M1428.6 536.7 L1433 -363 L1444 -363Z" fill="#639e00"/><path d="M1428.6 536.7 L1436 -363 L1448 -363Z" fill="#669e00"/><path d="M1428.6 536.7 L1440 -363 L1452 -363Z" fill="#699e00"/><path d="M1428.6 536.7 L1444 -363 L1456 -363Z" fill="#6c9e00"/><path d="M1428.6 536.7 L1448 -363 L1460 -363Z" fill="#709e00"/><path d="M1428.6 536.7 L1452 -363 L1464 -363Z" fill="#739e00"/><path d="M1428.6 536.7 L1456 -363 L1468 -362Z" fill="#769e00"/><path d="M1428.6 536.7 L1460 -363 L1472 -362Z" fill="#7a9e00"/><path d="M1428.6 536.7 L1464 -363 L1476 -362Z" fill="#7d9e00"/><path d="M1428.6 536.7 L1468 -362 L1480 -362Z" fill="#819e00"/><path d="M1428.6 536.7 L1472 -362 L1484 -362Z" fill="#849e00"/><path d="M1428.6 536.7 L1476 -362 L1487 -361Z" fill="#889e00"/><path d="M1428.6 536.7 L1480 -362 L1491 -361Z" fill="#8b9e00"/><path d="M1428.6 536.7 L1484 -362 L1495 -361Z" fill="#8f9e00"/><path d="M1428.6 536.7 L1487 -361 L1499 -361Z" fill="#939e00"/><path d="M1428.6 536.7 L1491 -361 L1503 -360Z" fill="#969e00"/><path d="M1428.6 536.7 L1495 -361 L1507 -360Z" fill="#9a9e00"/><path d="M1428.6 536.7 L1499 -361 L1511 -360Z" fill="#9e9e00"/><path d="M1428.6 536.7 L1503 -360 L1515 -359Z" fill="#9e9b00"/><path d="M1428.6 536.7 L1507 -360 L1519 -359Z" fill="#9e9700"/><path d="M1428.6 536.7 L1511 -360 L1523 -358Z" fill="#9e9300"/><path d="M1428.6 536.7 L1515 -359 L1527 -358Z" fill="#9e9000"/><path d="M1428.6 536.7 L1519 -359 L1530 -358Z" fill="#9e8d00"/><path d="M1428.6 536.7 L1523 -358 L1534 -357Z" fill="#9e8a00"/><path d="M1428.6 536.7 L1527 -358 L1538 -357Z" fill="#9e8700"/><path d="M1428.6 536.7 L1530 -358 L1542 -356Z" fill="#9e8400"/><path d="M1428.6 536.7 L1534 -357 L1546 -356Z" fill="#9e8100"/><path d="M1428.6 536.7 L1538 -357 L1550 -355Z" fill="#9e7e00"/><path d="M1428.6 536.7 L1542 -356 L1554 -355Z" fill="#9e7b00"/><path d="M1428.6 536.7 L1546 -356 L1558 -354Z" fill="#9e7900"/><path d="M1428.6 536.7 L1550 -355 L1562 -353Z" fill="#9e7600"/><path d="M1428.6 536.7 L1554 -355 L1566 -353Z" fill="#9e7400"/><path d="M1428.6 536.7 L1558 -354 L1569 -352Z" fill="#9e7100"/><path d="M1428.6 536.7 L1562 -353 L1573 -352Z" fill="#9e6f00"/><path d="M1428.6 536.7 L1566 -353 L1577 -351Z" fill="#9e6d00"/><path d="M1428.6 536.7 L1569 -352 L1581 -350Z" fill="#9e6a00"/><path d="M1428.6 536.7 L1573 -352 L1585 -350Z" fill="#9e6800"/><path d="M1428.6 536.7 L1577 -351 L1589 -349Z" fill="#9e6600"/><path d="M1428.6 536.7 L1581 -350 L1593 -348Z" fill="#9e6400"/><path d="M1428.6 536.7 L1585 -350 L1596 -348Z" fill="#9e6200"/><path d="M1428.6 536.7 L1589 -349 L1600 -347Z" fill="#9e6000"/><path d="M1428.6 536.7 L1593 -348 L1608 -345Z" fill="#9e5e00"/><path d="M1428.6 536.7 L1600 -347 L1612 -344Z" fill="#9e5b00"/><path d="M1428.6 536.7 L1604 -346 L1616 -344Z" fill="#9e5900"/><path d="M1428.6 536.7 L1608 -345 L1623 -342Z" fill="#9e5700"/><path d="M1428.6 536.7 L1616 -344 L1627 -341Z" fill="#9e5400"/><path d="M1428.6 536.7 L1620 -343 L1635 -339Z" fill="#9e5200"/><path d="M1428.6 536.7 L1627 -341 L1643 -338Z" fill="#9e4f00"/><path d="M1428.6 536.7 L1635 -339 L1650 -336Z" fill="#9e4c00"/><path d="M1428.6 536.7 L1643 -338 L1654 -335Z" fill="#9e4a00"/><path d="M1428.6 536.7 L1646 -337 L1662 -333Z" fill="#9e4800"/><path d="M1428.6 536.7 L1654 -335 L1665 -332Z" fill="#9e4600"/><path d="M1428.6 536.7 L1658 -334 L1673 -330Z" fill="#9e4400"/><path d="M1428.6 536.7 L1665 -332 L1680 -327Z" fill="#9e4200"/><path d="M1428.6 536.7 L1673 -330 L1688 -325Z" fill="#9e3f00"/><path d="M1428.6 536.7 L1680 -327 L1695 -323Z" fill="#9e3d00"/><path d="M1428.6 536.7 L1688 -325 L1703 -320Z" fill="#9e3b00"/><path d="M1428.6 536.7 L1695 -323 L1710 -318Z" fill="#9e3900"/><path d="M1428.6 536.7 L1703 -320 L1718 -316Z" fill="#9e3700"/><path d="M1428.6 536.7 L1710 -318 L1725 -313Z" fill="#9e3500"/><path d="M1428.6 536.7 L1718 -316 L1733 -310Z" fill="#9e3300"/><path d="M1428.6 536.7 L1725 -313 L1740 -308Z" fill="#9e3100"/><path d="M1428.6 536.7 L1733 -310 L1747 -305Z" fill="#9e2f00"/><path d="M1428.6 536.7 L1740 -308 L1758 -301Z" fill="#9e2c00"/><path d="M1428.6 536.7 L1751 -304 L1766 -298Z" fill="#9e2b00"/><path d="M1428.6 536.7 L1758 -301 L1777 -293Z" fill="#9e2800"/><path d="M1428.6 536.7 L1769 -296 L1784 -290Z" fill="#9e2700"/><path d="M1428.6 536.7 L1777 -293 L1795 -285Z" fill="#9e2500"/><path d="M1428.6 536.7 L1787 -289 L1805 -281Z" fill="#9e2200"/><path d="M1428.6 536.7 L1798 -284 L1816 -276Z" fill="#9e2000"/><path d="M1428.6 536.7 L1809 -279 L1827 -270Z" fill="#9e1e00"/><path d="M1428.6 536.7 L1820 -274 L1837 -265Z" fill="#9e1c00"/><path d="M1428.6 536.7 L1830 -269 L1848 -260Z" fill="#9e1b00"/><path d="M1428.6 536.7 L1841 -263 L1861 -252Z" fill="#9e1900"/><path d="M1428.6 536.7 L1855 -256 L1872 -247Z" fill="#9e1700"/><path d="M1428.6 536.7 L1865 -250 L1885 -239Z" fill="#9e1500"/><path d="M1428.6 536.7 L1879 -243 L1899 -231Z" fill="#9e1300"/><path d="M1428.6 536.7 L1892 -235 L1912 -222Z" fill="#9e1100"/><path d="M1428.6 536.7 L1906 -227 L1929 -212Z" fill="#9e0e00"/><path d="M1428.6 536.7 L1922 -216 L1942 -203Z" fill="#9e0d00"/><path d="M1428.6 536.7 L1935 -207 L1958 -191Z" fill="#9e0a00"/><path d="M1428.6 536.7 L1951 -196 L1973 -180Z" fill="#9e0800"/><path d="M1428.6 536.7 L1967 -184 L1989 -168Z" fill="#9e0600"/><path d="M1428.6 536.7 L1983 -173 L2004 -155Z" fill="#9e0400"/><path d="M1428.6 536.7 L1998 -160 L2019 -143Z" fill="#9e0300"/><path d="M1428.6 536.7 L2013 -148 L2218 104Z" fill="#9e0000"/><path d="M1428.6 536.7 L2214 97 L2319 404Z" fill="#9e0000"/><path d="M1428.6 536.7 L2318 396 L2328 509Z" fill="#9e0000"/><path d="M1428.6 536.7 L2328 501 L2328 521Z" fill="#9e0003"/><path d="M1428.6 536.7 L2328 513 L2329 533Z" fill="#9e0004"/><path d="M1428.6 536.7 L2329 525 L2329 541Z" fill="#9e0006"/></g></g><path d="M1728.5 193.1 L1374.6 156.5 L1429.5 526.1 Z" fill="#f4eef4"/><g><path d="M1453.7 242.6 L1693.6 241.6 L1684.5 251.7Z" fill="url(#cw0)"/><path d="M1453.7 242.6 L1686.2 249.7 L1677.7 259.3Z" fill="url(#cw1)"/><path d="M1453.7 242.6 L1679.3 257.4 L1671.2 266.5Z" fill="url(#cw2)"/><path d="M1453.7 242.6 L1672.8 264.7 L1665.1 273.3Z" fill="url(#cw3)"/><path d="M1453.7 242.6 L1666.6 271.6 L1659.3 279.8Z" fill="url(#cw4)"/><path d="M1453.7 242.6 L1660.7 278.2 L1653.6 286.0Z" fill="url(#cw5)"/><path d="M1453.7 242.6 L1655.0 284.5 L1648.3 292.0Z" fill="url(#cw6)"/><path d="M1453.7 242.6 L1649.6 290.6 L1643.1 297.8Z" fill="url(#cw7)"/><path d="M1453.7 242.6 L1644.3 296.4 L1638.0 303.4Z" fill="url(#cw8)"/><path d="M1453.7 242.6 L1639.3 302.0 L1633.2 308.8Z" fill="url(#cw9)"/><path d="M1453.7 242.6 L1634.4 307.5 L1628.4 314.1Z" fill="url(#cw10)"/><path d="M1453.7 242.6 L1629.6 312.8 L1623.8 319.3Z" fill="url(#cw11)"/><path d="M1453.7 242.6 L1625.0 318.0 L1619.3 324.3Z" fill="url(#cw12)"/><path d="M1453.7 242.6 L1620.4 323.0 L1614.9 329.2Z" fill="url(#cw13)"/><path d="M1453.7 242.6 L1616.0 328.0 L1610.5 334.1Z" fill="url(#cw14)"/><path d="M1453.7 242.6 L1611.6 332.9 L1606.2 338.9Z" fill="url(#cw15)"/><path d="M1453.7 242.6 L1607.3 337.7 L1602.0 343.6Z" fill="url(#cw16)"/><path d="M1453.7 242.6 L1603.0 342.4 L1597.8 348.3Z" fill="url(#cw17)"/><path d="M1453.7 242.6 L1598.8 347.1 L1593.6 352.9Z" fill="url(#cw18)"/><path d="M1453.7 242.6 L1594.6 351.8 L1589.5 357.5Z" fill="url(#cw19)"/><path d="M1453.7 242.6 L1590.5 356.4 L1585.3 362.2Z" fill="url(#cw20)"/><path d="M1453.7 242.6 L1586.3 361.0 L1581.2 366.8Z" fill="url(#cw21)"/><path d="M1453.7 242.6 L1582.2 365.6 L1577.0 371.4Z" fill="url(#cw22)"/><path d="M1453.7 242.6 L1578.0 370.3 L1572.8 376.1Z" fill="url(#cw23)"/><path d="M1453.7 242.6 L1573.9 374.9 L1568.6 380.8Z" fill="url(#cw24)"/><path d="M1453.7 242.6 L1569.7 379.6 L1564.3 385.5Z" fill="url(#cw25)"/><path d="M1453.7 242.6 L1565.4 384.3 L1560.0 390.3Z" fill="url(#cw26)"/><path d="M1453.7 242.6 L1561.1 389.1 L1555.6 395.2Z" fill="url(#cw27)"/><path d="M1453.7 242.6 L1556.8 394.0 L1551.2 400.2Z" fill="url(#cw28)"/><path d="M1453.7 242.6 L1552.3 398.9 L1546.6 405.2Z" fill="url(#cw29)"/><path d="M1453.7 242.6 L1547.8 403.9 L1542.0 410.4Z" fill="url(#cw30)"/><path d="M1453.7 242.6 L1543.2 409.1 L1537.2 415.7Z" fill="url(#cw31)"/><path d="M1453.7 242.6 L1538.4 414.4 L1532.3 421.2Z" fill="url(#cw32)"/><path d="M1453.7 242.6 L1533.5 419.8 L1527.2 426.9Z" fill="url(#cw33)"/><path d="M1453.7 242.6 L1528.5 425.4 L1522.0 432.7Z" fill="url(#cw34)"/><path d="M1453.7 242.6 L1523.3 431.2 L1516.5 438.8Z" fill="url(#cw35)"/><path d="M1453.7 242.6 L1517.9 437.3 L1510.8 445.1Z" fill="url(#cw36)"/><path d="M1453.7 242.6 L1512.3 443.5 L1504.9 451.7Z" fill="url(#cw37)"/><path d="M1453.7 242.6 L1506.4 450.1 L1498.7 458.7Z" fill="url(#cw38)"/><path d="M1453.7 242.6 L1500.2 456.9 L1492.1 466.0Z" fill="url(#cw39)"/><path d="M1453.7 242.6 L1493.8 464.1 L1485.2 473.7Z" fill="url(#cw40)"/><path d="M1453.7 242.6 L1486.9 471.7 L1477.8 481.9Z" fill="url(#cw41)"/><path d="M1453.7 242.6 L1479.7 479.8 L1470.0 490.6Z" fill="url(#cw42)"/><path d="M1453.7 242.6 L1472.0 488.4 L1461.6 500.0Z" fill="url(#cw43)"/><path d="M1453.7 242.6 L1463.7 497.6 L1452.5 510.0Z" fill="url(#cw44)"/><path d="M1453.7 242.6 L1454.9 507.4 L1442.8 520.9Z" fill="url(#cw45)"/><path d="M1453.7 242.6 L1445.3 518.1 L1432.2 532.7Z" fill="url(#cw46)"/><path d="M1453.7 242.6 L1434.9 529.7 L1428.6 536.7 L1424.5 509.2Z" fill="url(#cw47)"/><path d="M1453.7 242.6 L1425.9 518.7 L1419.7 477.0Z" fill="url(#cw48)"/><path d="M1453.7 242.6 L1420.8 484.4 L1415.9 451.5Z" fill="url(#cw49)"/><path d="M1453.7 242.6 L1416.8 457.4 L1412.9 430.8Z" fill="url(#cw50)"/><path d="M1453.7 242.6 L1413.6 435.6 L1410.3 413.6Z" fill="url(#cw51)"/><path d="M1453.7 242.6 L1410.9 417.6 L1408.1 399.0Z" fill="url(#cw52)"/><path d="M1453.7 242.6 L1408.6 402.5 L1406.3 386.5Z" fill="url(#cw53)"/><path d="M1453.7 242.6 L1406.7 389.5 L1404.7 375.6Z" fill="url(#cw54)"/><path d="M1453.7 242.6 L1405.0 378.2 L1403.2 366.0Z" fill="url(#cw55)"/><path d="M1453.7 242.6 L1403.6 368.3 L1402.0 357.5Z" fill="url(#cw56)"/><path d="M1453.7 242.6 L1402.3 359.6 L1400.8 349.9Z" fill="url(#cw57)"/><path d="M1453.7 242.6 L1401.1 351.7 L1399.8 343.0Z" fill="url(#cw58)"/><path d="M1453.7 242.6 L1400.0 344.6 L1398.9 336.7Z" fill="url(#cw59)"/><path d="M1453.7 242.6 L1399.1 338.2 L1398.0 330.9Z" fill="url(#cw60)"/><path d="M1453.7 242.6 L1398.2 332.3 L1397.2 325.6Z" fill="url(#cw61)"/><path d="M1453.7 242.6 L1397.4 326.9 L1396.5 320.7Z" fill="url(#cw62)"/><path d="M1453.7 242.6 L1396.7 321.9 L1395.8 316.1Z" fill="url(#cw63)"/><path d="M1453.7 242.6 L1396.0 317.2 L1395.2 311.8Z" fill="url(#cw64)"/><path d="M1453.7 242.6 L1395.3 312.8 L1394.6 307.8Z" fill="url(#cw65)"/><path d="M1453.7 242.6 L1394.7 308.7 L1394.0 303.9Z" fill="url(#cw66)"/><path d="M1453.7 242.6 L1394.1 304.9 L1393.5 300.3Z" fill="url(#cw67)"/><path d="M1453.7 242.6 L1393.6 301.2 L1392.9 296.9Z" fill="url(#cw68)"/><path d="M1453.7 242.6 L1393.1 297.7 L1392.5 293.6Z" fill="url(#cw69)"/><path d="M1453.7 242.6 L1392.6 294.4 L1392.0 290.4Z" fill="url(#cw70)"/><path d="M1453.7 242.6 L1392.1 291.2 L1391.5 287.4Z" fill="url(#cw71)"/><path d="M1453.7 242.6 L1391.6 288.1 L1391.1 284.5Z" fill="url(#cw72)"/><path d="M1453.7 242.6 L1391.2 285.2 L1390.7 281.6Z" fill="url(#cw73)"/><path d="M1453.7 242.6 L1390.8 282.3 L1390.3 278.9Z" fill="url(#cw74)"/><path d="M1453.7 242.6 L1390.4 279.6 L1389.9 276.2Z" fill="url(#cw75)"/><path d="M1453.7 242.6 L1390.0 276.9 L1389.5 273.6Z" fill="url(#cw76)"/><path d="M1453.7 242.6 L1389.6 274.3 L1389.1 271.1Z" fill="url(#cw77)"/><path d="M1453.7 242.6 L1389.2 271.7 L1388.7 268.6Z" fill="url(#cw78)"/><path d="M1453.7 242.6 L1388.8 269.2 L1388.4 266.1Z" fill="url(#cw79)"/><path d="M1453.7 242.6 L1388.5 266.7 L1388.0 263.7Z" fill="url(#cw80)"/><path d="M1453.7 242.6 L1388.1 264.3 L1387.7 261.3Z" fill="url(#cw81)"/><path d="M1453.7 242.6 L1387.7 261.9 L1387.3 258.9Z" fill="url(#cw82)"/><path d="M1453.7 242.6 L1387.4 259.5 L1386.9 256.5Z" fill="url(#cw83)"/><path d="M1453.7 242.6 L1387.0 257.1 L1386.6 254.2Z" fill="url(#cw84)"/><path d="M1453.7 242.6 L1386.7 254.8 L1386.2 251.8Z" fill="url(#cw85)"/><path d="M1453.7 242.6 L1386.3 252.4 L1385.9 249.5Z" fill="url(#cw86)"/><path d="M1453.7 242.6 L1386.0 250.1 L1385.5 247.1Z" fill="url(#cw87)"/><path d="M1453.7 242.6 L1385.6 247.7 L1385.2 244.7Z" fill="url(#cw88)"/><path d="M1453.7 242.6 L1385.3 245.3 L1384.8 242.3Z" fill="url(#cw89)"/><path d="M1453.7 242.6 L1384.9 242.9 L1384.5 239.9Z" fill="url(#cw90)"/><path d="M1453.7 242.6 L1384.6 240.5 L1384.1 237.5Z" fill="url(#cw91)"/><path d="M1453.7 242.6 L1384.2 238.1 L1383.7 235.0Z" fill="url(#cw92)"/><path d="M1453.7 242.6 L1383.8 235.6 L1383.4 232.4Z" fill="url(#cw93)"/><path d="M1453.7 242.6 L1383.5 233.1 L1383.0 229.8Z" fill="url(#cw94)"/><path d="M1453.7 242.6 L1383.1 230.5 L1382.6 227.2Z" fill="url(#cw95)"/><path d="M1453.7 242.6 L1382.7 227.9 L1382.2 224.5Z" fill="url(#cw96)"/><path d="M1453.7 242.6 L1382.3 225.2 L1381.8 221.7Z" fill="url(#cw97)"/><path d="M1453.7 242.6 L1381.9 222.4 L1381.3 218.8Z" fill="url(#cw98)"/><path d="M1453.7 242.6 L1381.4 219.5 L1380.9 215.8Z" fill="url(#cw99)"/><path d="M1453.7 242.6 L1381.0 216.5 L1380.4 212.7Z" fill="url(#cw100)"/><path d="M1453.7 242.6 L1380.5 213.4 L1379.9 209.4Z" fill="url(#cw101)"/><path d="M1453.7 242.6 L1380.1 210.2 L1379.4 206.0Z" fill="url(#cw102)"/><path d="M1453.7 242.6 L1379.6 206.9 L1378.9 202.4Z" fill="url(#cw103)"/><path d="M1453.7 242.6 L1379.0 203.3 L1378.3 198.7Z" fill="url(#cw104)"/><path d="M1453.7 242.6 L1378.5 199.6 L1377.8 194.7Z" fill="url(#cw105)"/><path d="M1453.7 242.6 L1377.9 195.7 L1377.1 190.5Z" fill="url(#cw106)"/><path d="M1453.7 242.6 L1377.3 191.6 L1376.5 186.0Z" fill="url(#cw107)"/><path d="M1453.7 242.6 L1376.6 187.1 L1375.7 181.2Z" fill="url(#cw108)"/><path d="M1453.7 242.6 L1375.9 182.4 L1375.0 176.0Z" fill="url(#cw109)"/><path d="M1453.7 242.6 L1375.2 177.3 L1374.1 170.4Z" fill="url(#cw110)"/><path d="M1453.7 242.6 L1374.4 171.8 L1373.2 164.2Z" fill="url(#cw111)"/><path d="M1453.7 242.6 L1373.5 165.8 L1372.2 157.5Z" fill="url(#cw112)"/><path d="M1453.7 242.6 L1372.5 159.3 L1371.6 153.3 L1374.2 153.6Z" fill="url(#cw113)"/><path d="M1453.7 242.6 L1372.7 153.4 L1380.1 154.2Z" fill="url(#cw114)"/><path d="M1453.7 242.6 L1378.7 154.0 L1385.7 154.8Z" fill="url(#cw115)"/><path d="M1453.7 242.6 L1384.3 154.6 L1390.8 155.3Z" fill="url(#cw116)"/><path d="M1453.7 242.6 L1389.6 155.2 L1395.7 155.8Z" fill="url(#cw117)"/><path d="M1453.7 242.6 L1394.5 155.7 L1400.3 156.3Z" fill="url(#cw118)"/><path d="M1453.7 242.6 L1399.1 156.1 L1404.6 156.7Z" fill="url(#cw119)"/><path d="M1453.7 242.6 L1403.5 156.6 L1408.7 157.1Z" fill="url(#cw120)"/><path d="M1453.7 242.6 L1407.7 157.0 L1412.7 157.5Z" fill="url(#cw121)"/><path d="M1453.7 242.6 L1411.7 157.4 L1416.4 157.9Z" fill="url(#cw122)"/><path d="M1453.7 242.6 L1415.5 157.8 L1420.1 158.3Z" fill="url(#cw123)"/><path d="M1453.7 242.6 L1419.2 158.2 L1423.6 158.7Z" fill="url(#cw124)"/><path d="M1453.7 242.6 L1422.7 158.6 L1426.9 159.0Z" fill="url(#cw125)"/><path d="M1453.7 242.6 L1426.1 158.9 L1430.2 159.4Z" fill="url(#cw126)"/><path d="M1453.7 242.6 L1429.4 159.3 L1433.4 159.7Z" fill="url(#cw127)"/><path d="M1453.7 242.6 L1432.6 159.6 L1436.5 160.0Z" fill="url(#cw128)"/><path d="M1453.7 242.6 L1435.8 159.9 L1439.6 160.3Z" fill="url(#cw129)"/><path d="M1453.7 242.6 L1438.8 160.2 L1442.6 160.6Z" fill="url(#cw130)"/><path d="M1453.7 242.6 L1441.8 160.5 L1445.5 160.9Z" fill="url(#cw131)"/><path d="M1453.7 242.6 L1444.8 160.9 L1448.4 161.2Z" fill="url(#cw132)"/><path d="M1453.7 242.6 L1447.7 161.2 L1451.2 161.5Z" fill="url(#cw133)"/><path d="M1453.7 242.6 L1450.5 161.4 L1454.1 161.8Z" fill="url(#cw134)"/><path d="M1453.7 242.6 L1453.4 161.7 L1456.9 162.1Z" fill="url(#cw135)"/><path d="M1453.7 242.6 L1456.2 162.0 L1459.7 162.4Z" fill="url(#cw136)"/><path d="M1453.7 242.6 L1459.0 162.3 L1462.5 162.7Z" fill="url(#cw137)"/><path d="M1453.7 242.6 L1461.8 162.6 L1465.3 163.0Z" fill="url(#cw138)"/><path d="M1453.7 242.6 L1464.6 162.9 L1468.1 163.3Z" fill="url(#cw139)"/><path d="M1453.7 242.6 L1467.4 163.2 L1470.9 163.5Z" fill="url(#cw140)"/><path d="M1453.7 242.6 L1470.2 163.5 L1473.7 163.8Z" fill="url(#cw141)"/><path d="M1453.7 242.6 L1473.0 163.8 L1476.6 164.1Z" fill="url(#cw142)"/><path d="M1453.7 242.6 L1475.9 164.1 L1479.5 164.4Z" fill="url(#cw143)"/><path d="M1453.7 242.6 L1478.8 164.4 L1482.5 164.7Z" fill="url(#cw144)"/><path d="M1453.7 242.6 L1481.7 164.7 L1485.5 165.1Z" fill="url(#cw145)"/><path d="M1453.7 242.6 L1484.7 165.0 L1488.5 165.4Z" fill="url(#cw146)"/><path d="M1453.7 242.6 L1487.7 165.3 L1491.7 165.7Z" fill="url(#cw147)"/><path d="M1453.7 242.6 L1490.9 165.6 L1494.9 166.0Z" fill="url(#cw148)"/><path d="M1453.7 242.6 L1494.1 165.9 L1498.2 166.4Z" fill="url(#cw149)"/><path d="M1453.7 242.6 L1497.4 166.3 L1501.6 166.7Z" fill="url(#cw150)"/><path d="M1453.7 242.6 L1500.7 166.6 L1505.2 167.1Z" fill="url(#cw151)"/><path d="M1453.7 242.6 L1504.3 167.0 L1508.8 167.5Z" fill="url(#cw152)"/><path d="M1453.7 242.6 L1507.9 167.4 L1512.7 167.9Z" fill="url(#cw153)"/><path d="M1453.7 242.6 L1511.7 167.8 L1516.7 168.3Z" fill="url(#cw154)"/><path d="M1453.7 242.6 L1515.6 168.2 L1520.9 168.7Z" fill="url(#cw155)"/><path d="M1453.7 242.6 L1519.8 168.6 L1525.3 169.2Z" fill="url(#cw156)"/><path d="M1453.7 242.6 L1524.2 169.0 L1530.0 169.6Z" fill="url(#cw157)"/><path d="M1453.7 242.6 L1528.8 169.5 L1534.9 170.2Z" fill="url(#cw158)"/><path d="M1453.7 242.6 L1533.7 170.0 L1540.2 170.7Z" fill="url(#cw159)"/><path d="M1453.7 242.6 L1538.9 170.6 L1545.9 171.3Z" fill="url(#cw160)"/><path d="M1453.7 242.6 L1544.4 171.1 L1552.0 171.9Z" fill="url(#cw161)"/><path d="M1453.7 242.6 L1550.4 171.8 L1558.5 172.6Z" fill="url(#cw162)"/><path d="M1453.7 242.6 L1556.8 172.4 L1565.7 173.3Z" fill="url(#cw163)"/><path d="M1453.7 242.6 L1563.9 173.1 L1573.5 174.1Z" fill="url(#cw164)"/><path d="M1453.7 242.6 L1571.5 173.9 L1582.2 175.0Z" fill="url(#cw165)"/><path d="M1453.7 242.6 L1580.0 174.8 L1591.8 176.0Z" fill="url(#cw166)"/><path d="M1453.7 242.6 L1589.3 175.8 L1602.6 177.1Z" fill="url(#cw167)"/><path d="M1453.7 242.6 L1599.8 176.8 L1614.7 178.4Z" fill="url(#cw168)"/><path d="M1453.7 242.6 L1611.5 178.1 L1628.6 179.8Z" fill="url(#cw169)"/><path d="M1453.7 242.6 L1625.0 179.5 L1644.7 181.5Z" fill="url(#cw170)"/><path d="M1453.7 242.6 L1640.5 181.1 L1663.6 183.4Z" fill="url(#cw171)"/><path d="M1453.7 242.6 L1658.6 182.9 L1686.1 185.8Z" fill="url(#cw172)"/><path d="M1453.7 242.6 L1680.1 185.1 L1713.5 188.6Z" fill="url(#cw173)"/><path d="M1453.7 242.6 L1706.1 187.8 L1738.8 191.2 L1736.2 194.1Z" fill="url(#cw174)"/><path d="M1453.7 242.6 L1738.4 191.2 L1738.8 191.2 L1725.9 205.6Z" fill="url(#cw175)"/><path d="M1453.7 242.6 L1728.4 202.8 L1716.4 216.2Z" fill="url(#cw176)"/><path d="M1453.7 242.6 L1718.7 213.6 L1707.6 226.0Z" fill="url(#cw177)"/><path d="M1453.7 242.6 L1709.7 223.6 L1699.4 235.1Z" fill="url(#cw178)"/><path d="M1453.7 242.6 L1701.4 232.9 L1691.7 243.7Z" fill="url(#cw179)"/></g><circle cx="1453.7" cy="242.6" r="22" fill="url(#cwpg)"/></g></g></svg><svg width="1920" height="1058" viewBox="0 0 1920 1058" style="position:absolute;left:0;top:0;z-index:3" font-family="Liberation Sans, sans-serif"><defs><linearGradient id="gBot" x1="0" y1="0" x2="0" y2="1"><stop offset="0" stop-color="#3e3e3e"/><stop offset="0.1" stop-color="#2c2c2c"/><stop offset="0.55" stop-color="#232323"/><stop offset="1" stop-color="#343434"/></linearGradient><linearGradient id="gRed" x1="0" y1="0" x2="0" y2="1"><stop offset="0" stop-color="#e8443f"/><stop offset="0.5" stop-color="#d8201c"/><stop offset="1" stop-color="#c5100c"/></linearGradient><linearGradient id="gRain" x1="142" y1="0" x2="1920" y2="0" gradientUnits="userSpaceOnUse"><stop offset="0" stop-color="#ff0000"/><stop offset="0.12" stop-color="#ff00a0"/><stop offset="0.22" stop-color="#9000ff"/><stop offset="0.36" stop-color="#0000ff"/><stop offset="0.52" stop-color="#00c080"/><stop offset="0.68" stop-color="#40ff00"/><stop offset="0.82" stop-color="#ffd000"/><stop offset="0.92" stop-color="#ff7000"/><stop offset="1" stop-color="#ff0000"/></linearGradient><linearGradient id="gHist" x1="0" y1="0" x2="0" y2="1"><stop offset="0" stop-color="#555"/><stop offset="1" stop-color="#3a3a3a"/></linearGradient><linearGradient id="gCtl" x1="0" y1="0" x2="0" y2="1"><stop offset="0" stop-color="#6c6c6c"/><stop offset="1" stop-color="#585858"/></linearGradient><linearGradient id="gBtn2" x1="0" y1="0" x2="0" y2="1"><stop offset="0" stop-color="#9a9a9a"/><stop offset="0.5" stop-color="#7a7a7a"/><stop offset="1" stop-color="#5e5e5e"/></linearGradient><linearGradient id="gDrop" x1="0" y1="0" x2="0" y2="1"><stop offset="0" stop-color="#6e6e6e"/><stop offset="1" stop-color="#4e4e4e"/></linearGradient><linearGradient id="gb00" x1="0" y1="0" x2="1" y2="0"><stop offset="0" stop-color="#d34040"/><stop offset="0.5" stop-color="#c81010"/><stop offset="1" stop-color="#600808"/></linearGradient><linearGradient id="gb01" x1="0" y1="0" x2="1" y2="0"><stop offset="0" stop-color="#40cd40"/><stop offset="0.5" stop-color="#10c010"/><stop offset="1" stop-color="#085a08"/></linearGradient><linearGradient id="gb02" x1="0" y1="0" x2="1" y2="0"><stop offset="0" stop-color="#5151d9"/><stop offset="0.5" stop-color="#2525d0"/><stop offset="1" stop-color="#10106a"/></linearGradient><linearGradient id="gb03" x1="0" y1="0" x2="1" y2="0"><stop offset="0" stop-color="#40cdcd"/><stop offset="0.5" stop-color="#10c0c0"/><stop offset="1" stop-color="#085a5a"/></linearGradient><linearGradient id="gb04" x1="0" y1="0" x2="1" y2="0"><stop offset="0" stop-color="#d346d3"/><stop offset="0.5" stop-color="#c818c8"/><stop offset="1" stop-color="#5a0a5a"/></linearGradient><linearGradient id="gb05" x1="0" y1="0" x2="1" y2="0"><stop offset="0" stop-color="#cdcd40"/><stop offset="0.5" stop-color="#c0c010"/><stop offset="1" stop-color="#5a5a08"/></linearGradient><linearGradient id="gb10" x1="0" y1="0" x2="1" y2="0"><stop offset="0" stop-color="#d16a6a"/><stop offset="0.5" stop-color="#c64545"/><stop offset="1" stop-color="#672a2a"/></linearGradient><linearGradient id="gb11" x1="0" y1="0" x2="1" y2="0"><stop offset="0" stop-color="#6acd6a"/><stop offset="0.5" stop-color="#45c045"/><stop offset="1" stop-color="#2a632a"/></linearGradient><linearGradient id="gb12" x1="0" y1="0" x2="1" y2="0"><stop offset="0" stop-color="#7676d5"/><stop offset="0.5" stop-color="#5454cb"/><stop offset="1" stop-color="#2f2f6e"/></linearGradient><linearGradient id="gb13" x1="0" y1="0" x2="1" y2="0"><stop offset="0" stop-color="#6acdcd"/><stop offset="0.5" stop-color="#45c0c0"/><stop offset="1" stop-color="#2a6363"/></linearGradient><linearGradient id="gb14" x1="0" y1="0" x2="1" y2="0"><stop offset="0" stop-color="#d16ed1"/><stop offset="0.5" stop-color="#c64ac6"/><stop offset="1" stop-color="#632b63"/></linearGradient><linearGradient id="gb15" x1="0" y1="0" x2="1" y2="0"><stop offset="0" stop-color="#cdcd6a"/><stop offset="0.5" stop-color="#c0c045"/><stop offset="1" stop-color="#63632a"/></linearGradient><linearGradient id="gb20" x1="0" y1="0" x2="1" y2="0"><stop offset="0" stop-color="#d07f7f"/><stop offset="0.5" stop-color="#c45f5f"/><stop offset="1" stop-color="#6b3a3a"/></linearGradient><linearGradient id="gb21" x1="0" y1="0" x2="1" y2="0"><stop offset="0" stop-color="#7fcd7f"/><stop offset="0.5" stop-color="#5fc05f"/><stop offset="1" stop-color="#3a683a"/></linearGradient><linearGradient id="gb22" x1="0" y1="0" x2="1" y2="0"><stop offset="0" stop-color="#8989d4"/><stop offset="0.5" stop-color="#6b6bc9"/><stop offset="1" stop-color="#3f3f70"/></linearGradient><linearGradient id="gb23" x1="0" y1="0" x2="1" y2="0"><stop offset="0" stop-color="#7fcdcd"/><stop offset="0.5" stop-color="#5fc0c0"/><stop offset="1" stop-color="#3a6868"/></linearGradient><linearGradient id="gb24" x1="0" y1="0" x2="1" y2="0"><stop offset="0" stop-color="#d083d0"/><stop offset="0.5" stop-color="#c464c4"/><stop offset="1" stop-color="#683c68"/></linearGradient><linearGradient id="gb25" x1="0" y1="0" x2="1" y2="0"><stop offset="0" stop-color="#cdcd7f"/><stop offset="0.5" stop-color="#c0c05f"/><stop offset="1" stop-color="#68683a"/></linearGradient><linearGradient id="gb30" x1="0" y1="0" x2="1" y2="0"><stop offset="0" stop-color="#d08d8d"/><stop offset="0.5" stop-color="#c47171"/><stop offset="1" stop-color="#6d4646"/></linearGradient><linearGradient id="gb31" x1="0" y1="0" x2="1" y2="0"><stop offset="0" stop-color="#8dcd8d"/><stop offset="0.5" stop-color="#71c071"/><stop offset="1" stop-color="#466a46"/></linearGradient><linearGradient id="gb32" x1="0" y1="0" x2="1" y2="0"><stop offset="0" stop-color="#9595d2"/><stop offset="0.5" stop-color="#7a7ac7"/><stop offset="1" stop-color="#494972"/></linearGradient><linearGradient id="gb33" x1="0" y1="0" x2="1" y2="0"><stop offset="0" stop-color="#8dcdcd"/><stop offset="0.5" stop-color="#71c0c0"/><stop offset="1" stop-color="#466a6a"/></linearGradient><linearGradient id="gb34" x1="0" y1="0" x2="1" y2="0"><stop offset="0" stop-color="#d090d0"/><stop offset="0.5" stop-color="#c474c4"/><stop offset="1" stop-color="#6a466a"/></linearGradient><linearGradient id="gb35" x1="0" y1="0" x2="1" y2="0"><stop offset="0" stop-color="#cdcd8d"/><stop offset="0.5" stop-color="#c0c071"/><stop offset="1" stop-color="#6a6a46"/></linearGradient><linearGradient id="gb40" x1="0" y1="0" x2="1" y2="0"><stop offset="0" stop-color="#cea5a5"/><stop offset="0.5" stop-color="#c28f8f"/><stop offset="1" stop-color="#715959"/></linearGradient><linearGradient id="gb41" x1="0" y1="0" x2="1" y2="0"><stop offset="0" stop-color="#a5cda5"/><stop offset="0.5" stop-color="#8fc08f"/><stop offset="1" stop-color="#597059"/></linearGradient><linearGradient id="gb42" x1="0" y1="0" x2="1" y2="0"><stop offset="0" stop-color="#aaaad0"/><stop offset="0.5" stop-color="#9595c4"/><stop offset="1" stop-color="#5b5b74"/></linearGradient><linearGradient id="gb43" x1="0" y1="0" x2="1" y2="0"><stop offset="0" stop-color="#a5cdcd"/><stop offset="0.5" stop-color="#8fc0c0"/><stop offset="1" stop-color="#597070"/></linearGradient><linearGradient id="gb44" x1="0" y1="0" x2="1" y2="0"><stop offset="0" stop-color="#cea7ce"/><stop offset="0.5" stop-color="#c291c2"/><stop offset="1" stop-color="#705970"/></linearGradient><linearGradient id="gb45" x1="0" y1="0" x2="1" y2="0"><stop offset="0" stop-color="#cdcda5"/><stop offset="0.5" stop-color="#c0c08f"/><stop offset="1" stop-color="#707059"/></linearGradient><linearGradient id="gbw" x1="0" y1="0" x2="1" y2="0"><stop offset="0" stop-color="#ffffff"/><stop offset="0.6" stop-color="#e0e0e0"/><stop offset="1" stop-color="#888"/></linearGradient><linearGradient id="gYel" x1="0" y1="0" x2="0" y2="1"><stop offset="0" stop-color="#d8d84a"/><stop offset="0.12" stop-color="#c2c200"/><stop offset="0.6" stop-color="#b8b800"/><stop offset="1" stop-color="#5a5a00"/></linearGradient><linearGradient id="gR" x1="0" y1="0" x2="0" y2="1"><stop offset="0" stop-color="#ff4040"/><stop offset="0.15" stop-color="#ff0000"/><stop offset="0.55" stop-color="#f00000"/><stop offset="1" stop-color="#800000"/></linearGradient><linearGradient id="gGr" x1="0" y1="0" x2="0" y2="1"><stop offset="0" stop-color="#20b020"/><stop offset="1" stop-color="#0a600a"/></linearGradient><linearGradient id="gB" x1="0" y1="0" x2="0" y2="1"><stop offset="0" stop-color="#5050ff"/><stop offset="0.12" stop-color="#1818ff"/><stop offset="0.5" stop-color="#0000f0"/><stop offset="1" stop-color="#000070"/></linearGradient><linearGradient id="gTab" x1="0" y1="0" x2="0" y2="1"><stop offset="0" stop-color="#8e8e8e"/><stop offset="0.12" stop-color="#6e6e6e"/><stop offset="0.6" stop-color="#5a5a5a"/><stop offset="1" stop-color="#4a4a4a"/></linearGradient><linearGradient id="gSm" x1="0" y1="0" x2="0" y2="1"><stop offset="0" stop-color="#9a9a9a"/><stop offset="1" stop-color="#7c7c7c"/></linearGradient><linearGradient id="gBtn" x1="0" y1="0" x2="0" y2="1"><stop offset="0" stop-color="#b8b8b8"/><stop offset="1" stop-color="#8a8a8a"/></linearGradient></defs><circle cx="7.6" cy="8.4" r="6" fill="#111" stroke="#a0a" stroke-width="0.8"/><text x="4.2" y="10.8" font-size="6.00" fill="#fff" font-weight="bold" textLength="7.0" lengthAdjust="spacingAndGlyphs">CM</text><text x="17.5" y="12.2" font-size="10.00" fill="#0a2a30" textLength="256.5" lengthAdjust="spacingAndGlyphs">CalMAN 2019 CalMAN Ultimate for Business 259 Days Remaining</text><line x1="1829.2" y1="7.6" x2="1836.9" y2="7.6" stroke="#0a1418" stroke-width="1.3" /><rect x="1863.6" y="5.6" width="5.6" height="5.4" rx="0.8" fill="none" stroke="#0a1418" stroke-width="1.1"/><path d="M1865.4 5.4 V4.2 H1870.6 V9.4 H1869.4" fill="none" stroke="#0a1418" stroke-width="0.9"/><path d="M1897.4 3.8 L1904.8 11.2 M1904.8 3.8 L1897.4 11.2" stroke="#0a1418" stroke-width="1.1"/><path d="M1 17 H137 V36 Q137 39.5 133.5 39.5 H4.5 Q1 39.5 1 36 Z" fill="url(#gRed)"/><g fill="none" stroke="#ffffff" stroke-width="3.2" stroke-linejoin="miter" stroke-miterlimit="1.6" stroke-linecap="butt"><path d="M23.6 23.2 A6.6 6.6 0 1 0 23.6 32.2"/><circle cx="33.2" cy="30.6" r="4.0" stroke-width="2.9"/><path d="M37.4 25.2 V36"/><path d="M45.6 19.4 V36"/><path d="M53.2 36 V21.4 L60.4 33 L67.6 21.4 V36"/><path d="M73.4 36 L81 21 L88.6 36 M76.2 30.8 H85.8"/><path d="M93.8 36 V21 L104.8 34.6 V19.6"/></g><circle cx="124.4" cy="28.1" r="7" fill="#c81818"/><path d="M120.2 26.5 H128.6 L124.4 31 Z" fill="#fff"/><rect x="142.0" y="26.6" width="1778.0" height="3.6" fill="url(#gRain)" /><circle cx="13.8" cy="53.8" r="7" fill="#4c4c4c"/><circle cx="13.8" cy="53.8" r="2.6" fill="#bbb"/><circle cx="135.6" cy="53.8" r="7" fill="#4c4c4c"/><path d="M133 53.8 L137.5 50 V57.6 Z" fill="#eee"/><text x="6.8" y="75.9" font-size="10.57" fill="#e0e0e0" textLength="47.7" lengthAdjust="spacingAndGlyphs">SDR Toolkit</text><rect x="7.3" y="79.0" width="135.7" height="188.0" fill="#1e1e1e" /><text x="21.8" y="92.7" font-size="8.71" fill="#f0f0f0" font-weight="bold" textLength="35.0" lengthAdjust="spacingAndGlyphs">Welcome</text><path d="M14.5 87.7 L17.5 90.7 L14.5 90.7 Z" fill="#666"/><text x="31.3" y="104.7" font-size="8.71" fill="#eeeeee" textLength="34.0" lengthAdjust="spacingAndGlyphs">Welcome</text><text x="31.3" y="115.7" font-size="8.71" fill="#eeeeee" textLength="30.0" lengthAdjust="spacingAndGlyphs">Options</text><text x="21.8" y="126.8" font-size="8.71" fill="#f0f0f0" font-weight="bold" textLength="30.5" lengthAdjust="spacingAndGlyphs">Analysis</text><path d="M14.5 121.8 L17.5 124.8 L14.5 124.8 Z" fill="#666"/><text x="31.3" y="138.8" font-size="8.71" fill="#eeeeee" textLength="56.0" lengthAdjust="spacingAndGlyphs">Dynamic Range</text><text x="31.3" y="149.5" font-size="8.71" fill="#eeeeee" textLength="54.0" lengthAdjust="spacingAndGlyphs">Grayscale - 2pt</text><text x="31.3" y="160.3" font-size="8.71" fill="#eeeeee" textLength="61.0" lengthAdjust="spacingAndGlyphs">Grayscale - Multi</text><text x="31.3" y="171.6" font-size="8.71" fill="#eeeeee" textLength="46.5" lengthAdjust="spacingAndGlyphs">Color Gamut</text><text x="31.3" y="182.3" font-size="8.71" fill="#eeeeee" textLength="26.0" lengthAdjust="spacingAndGlyphs">3D LUT</text><text x="31.3" y="193.4" font-size="8.71" fill="#eeeeee" textLength="48.5" lengthAdjust="spacingAndGlyphs">ColorChecker</text><rect x="30.6" y="196.0" width="68.7" height="11.5" fill="#f0f0f0" /><text x="31.3" y="205.0" font-size="8.71" fill="#333" textLength="67.5" lengthAdjust="spacingAndGlyphs">Saturation Sweeps</text><text x="31.3" y="215.5" font-size="8.71" fill="#eeeeee" textLength="69.5" lengthAdjust="spacingAndGlyphs">Luminance Sweeps</text><text x="31.3" y="226.6" font-size="8.71" fill="#eeeeee" textLength="66.0" lengthAdjust="spacingAndGlyphs">Screen Uniformity</text><text x="31.3" y="237.7" font-size="8.71" fill="#eeeeee" textLength="64.0" lengthAdjust="spacingAndGlyphs">Screen Angularity</text><text x="31.3" y="248.6" font-size="8.71" fill="#eeeeee" textLength="56.0" lengthAdjust="spacingAndGlyphs">Screen Stability</text><text x="31.3" y="259.7" font-size="8.71" fill="#eeeeee" textLength="73.0" lengthAdjust="spacingAndGlyphs">Spectral Power Dist.</text><path d="M151 66 V46.5 Q151 43.5 154 43.5 H215.5 Q218.5 43.5 218.5 46.5 V66" fill="url(#gHist)" stroke="#707070" stroke-width="1"/><line x1="193.6" y1="44.0" x2="193.6" y2="66.0" stroke="#6a6a6a" stroke-width="1.2" /><text x="155.0" y="58.8" font-size="9.29" fill="#dddddd" textLength="34.4" lengthAdjust="spacingAndGlyphs">History 1</text><circle cx="205" cy="56.2" r="6.5" fill="#444"/><path d="M202.5 56.2 H207.5 M205 53.7 V58.7" stroke="#888" stroke-width="0.8"/><rect x="1551" y="43.8" width="106.5" height="22.2" rx="2" fill="url(#gCtl)"/><rect x="1551.0" y="43.8" width="3.8" height="22.2" fill="#22dd22" /><text x="1557.5" y="52.5" font-size="8.86" fill="#eee" textLength="48.5" lengthAdjust="spacingAndGlyphs">X-Rite i1Pro 2</text><text x="1557.5" y="63.0" font-size="8.86" fill="#eee" textLength="41.5" lengthAdjust="spacingAndGlyphs">Direct View</text><circle cx="1616" cy="55" r="7" fill="#505050"/><path d="M1612.8 53.5 H1619.2 L1616 57 Z" fill="#eee"/><line x1="1631.0" y1="44.0" x2="1631.0" y2="66.0" stroke="#3a3a3a" stroke-width="1" /><circle cx="1646" cy="55" r="9.5" fill="#0010e8" stroke="#c0c0ff" stroke-width="0.8"/><text x="1640.3" y="57.6" font-size="7.43" fill="#fff" textLength="11.4" lengthAdjust="spacingAndGlyphs">237</text><rect x="1662.5" y="43.8" width="97.0" height="22.2" rx="2" fill="url(#gCtl)"/><rect x="1662.5" y="43.8" width="3.8" height="22.2" fill="#e8e800" /><text x="1668.8" y="52.5" font-size="8.86" fill="#eee" textLength="25.0" lengthAdjust="spacingAndGlyphs">Source</text><circle cx="1747.5" cy="55" r="7" fill="#505050"/><path d="M1744.3 53.5 H1750.7 L1747.5 57 Z" fill="#eee"/><rect x="1764.5" y="43.8" width="106.5" height="22.2" rx="2" fill="url(#gCtl)"/><rect x="1764.5" y="43.8" width="3.8" height="22.2" fill="#e8e800" /><text x="1771.0" y="52.5" font-size="8.86" fill="#eee" textLength="79.0" lengthAdjust="spacingAndGlyphs">Direct Display Control</text><circle cx="1860" cy="55" r="7" fill="#505050"/><path d="M1856.8 53.5 H1863.2 L1860 57 Z" fill="#eee"/><rect x="1874.3" y="43.5" width="24.6" height="21.4" rx="2.5" fill="url(#gBtn2)" stroke="#b0b0b0" stroke-width="0.8"/><circle cx="1886.9" cy="53.9" r="7" fill="#777"/><path d="M1892.10 53.90 L1892.00 54.91 L1890.32 55.32 L1889.98 55.96 L1890.58 57.58 L1889.79 58.22 L1888.32 57.32 L1887.62 57.53 L1886.90 59.10 L1885.89 59.00 L1885.48 57.32 L1884.84 56.98 L1883.22 57.58 L1882.58 56.79 L1883.48 55.32 L1883.27 54.62 L1881.70 53.90 L1881.80 52.89 L1883.48 52.48 L1883.82 51.84 L1883.22 50.22 L1884.01 49.58 L1885.48 50.48 L1886.18 50.27 L1886.90 48.70 L1887.91 48.80 L1888.32 50.48 L1888.96 50.82 L1890.58 50.22 L1891.22 51.01 L1890.32 52.48 L1890.53 53.18 Z" fill="#f0f0f0"/><circle cx="1886.9" cy="53.9" r="1.9" fill="#777"/><rect x="1900.3" y="43.5" width="22" height="21.4" rx="2.5" fill="url(#gBtn2)" stroke="#b0b0b0" stroke-width="0.8"/><circle cx="1910.3" cy="53.9" r="7" fill="#777"/><path d="M1907.8 53.9 L1912 50 V57.8 Z" fill="#f4f4f4"/><text x="158.6" y="124.7" font-size="50.00" fill="#eeeeee" textLength="352.4" lengthAdjust="spacingAndGlyphs">Saturation Sweeps</text><text x="281.0" y="185.8" font-size="22.86" fill="#eeeeee" textLength="114.0" lengthAdjust="spacingAndGlyphs">dE Formula:</text><rect x="404.7" y="162.8" width="141.8" height="28.9" fill="url(#gDrop)" stroke="#3c3c3c" stroke-width="1"/><text x="409.0" y="185.8" font-size="18.57" fill="#f0f0f0" textLength="37.0" lengthAdjust="spacingAndGlyphs">2000</text><path d="M530.5 174.5 H540.5 L535.5 180 Z" fill="#111"/><text x="743.5" y="115.5" font-size="24.29" fill="#eeeeee" textLength="64.0" lengthAdjust="spacingAndGlyphs">Levels:</text><rect x="815" y="90.5" width="360" height="30" fill="url(#gDrop)" stroke="#3c3c3c" stroke-width="1"/><text x="821.0" y="115.5" font-size="20.00" fill="#f0f0f0" textLength="94.0" lengthAdjust="spacingAndGlyphs">20% Sweeps</text><path d="M1159 103.5 H1169 L1164 109.5 Z" fill="#111"/><text x="299.7" y="223.7" font-size="17.86" fill="#dddddd" textLength="84.3" lengthAdjust="spacingAndGlyphs">DeltaE 2000</text><rect x="196.0" y="229.0" width="330.0" height="447.0" fill="#232323" /><line x1="240.0" y1="229.0" x2="240.0" y2="676.0" stroke="#9a9a9a" stroke-width="1.6" /><line x1="284.0" y1="229.0" x2="284.0" y2="676.0" stroke="#9a9a9a" stroke-width="1.6" /><line x1="328.0" y1="229.0" x2="328.0" y2="676.0" stroke="#9a9a9a" stroke-width="1.6" /><line x1="372.0" y1="229.0" x2="372.0" y2="676.0" stroke="#9a9a9a" stroke-width="1.6" /><line x1="416.0" y1="229.0" x2="416.0" y2="676.0" stroke="#9a9a9a" stroke-width="1.6" /><line x1="460.0" y1="229.0" x2="460.0" y2="676.0" stroke="#9a9a9a" stroke-width="1.6" /><line x1="504.0" y1="229.0" x2="504.0" y2="676.0" stroke="#9a9a9a" stroke-width="1.6" /><path d="M196 229 H526 V676 H196 Z" fill="none" stroke="#9a9a9a" stroke-width="1.6"/><line x1="189.5" y1="229.0" x2="196.0" y2="229.0" stroke="#aaaaaa" stroke-width="1.4" /><line x1="189.5" y1="303.5" x2="196.0" y2="303.5" stroke="#aaaaaa" stroke-width="1.4" /><line x1="189.5" y1="378.0" x2="196.0" y2="378.0" stroke="#aaaaaa" stroke-width="1.4" /><line x1="189.5" y1="452.5" x2="196.0" y2="452.5" stroke="#aaaaaa" stroke-width="1.4" /><line x1="189.5" y1="527.0" x2="196.0" y2="527.0" stroke="#aaaaaa" stroke-width="1.4" /><line x1="189.5" y1="601.5" x2="196.0" y2="601.5" stroke="#aaaaaa" stroke-width="1.4" /><line x1="189.5" y1="676.0" x2="196.0" y2="676.0" stroke="#aaaaaa" stroke-width="1.4" /><line x1="196.0" y1="676.0" x2="196.0" y2="681.0" stroke="#aaaaaa" stroke-width="1.4" /><text x="196.0" y="700.6" font-size="15.14" fill="#dddddd" text-anchor="middle">0</text><line x1="240.0" y1="676.0" x2="240.0" y2="681.0" stroke="#aaaaaa" stroke-width="1.4" /><text x="240.0" y="700.6" font-size="15.14" fill="#dddddd" text-anchor="middle">2</text><line x1="284.0" y1="676.0" x2="284.0" y2="681.0" stroke="#aaaaaa" stroke-width="1.4" /><text x="284.0" y="700.6" font-size="15.14" fill="#dddddd" text-anchor="middle">4</text><line x1="328.0" y1="676.0" x2="328.0" y2="681.0" stroke="#aaaaaa" stroke-width="1.4" /><text x="328.0" y="700.6" font-size="15.14" fill="#dddddd" text-anchor="middle">6</text><line x1="372.0" y1="676.0" x2="372.0" y2="681.0" stroke="#aaaaaa" stroke-width="1.4" /><text x="372.0" y="700.6" font-size="15.14" fill="#dddddd" text-anchor="middle">8</text><line x1="416.0" y1="676.0" x2="416.0" y2="681.0" stroke="#aaaaaa" stroke-width="1.4" /><text x="416.0" y="700.6" font-size="15.14" fill="#dddddd" text-anchor="middle">10</text><line x1="460.0" y1="676.0" x2="460.0" y2="681.0" stroke="#aaaaaa" stroke-width="1.4" /><text x="460.0" y="700.6" font-size="15.14" fill="#dddddd" text-anchor="middle">12</text><line x1="504.0" y1="676.0" x2="504.0" y2="681.0" stroke="#aaaaaa" stroke-width="1.4" /><text x="504.0" y="700.6" font-size="15.14" fill="#dddddd" text-anchor="middle">14</text><text x="157.0" y="273.0" font-size="15.71" fill="#dddddd" textLength="38.4" lengthAdjust="spacingAndGlyphs">100%</text><text x="165.4" y="347.6" font-size="15.71" fill="#dddddd" textLength="30.0" lengthAdjust="spacingAndGlyphs">80%</text><text x="165.4" y="422.2" font-size="15.71" fill="#dddddd" textLength="30.0" lengthAdjust="spacingAndGlyphs">60%</text><text x="165.4" y="496.9" font-size="15.71" fill="#dddddd" textLength="30.0" lengthAdjust="spacingAndGlyphs">40%</text><text x="165.4" y="571.0" font-size="15.71" fill="#dddddd" textLength="30.0" lengthAdjust="spacingAndGlyphs">20%</text><text x="170.2" y="645.8" font-size="15.71" fill="#dddddd" textLength="25.2" lengthAdjust="spacingAndGlyphs">100</text><rect x="196.0" y="236.3" width="125.8" height="8.0" fill="#000" /><rect x="196.8" y="237.9" width="123.7" height="4.9" fill="url(#gb00)" /><rect x="196.0" y="244.1" width="111.5" height="8.0" fill="#000" /><rect x="196.8" y="245.7" width="109.4" height="4.9" fill="url(#gb01)" /><rect x="196.0" y="251.8" width="330.4" height="8.0" fill="#000" /><rect x="196.8" y="253.4" width="328.3" height="4.9" fill="url(#gb02)" /><rect x="196.0" y="259.6" width="65.3" height="8.0" fill="#000" /><rect x="196.8" y="261.2" width="63.2" height="4.9" fill="url(#gb03)" /><rect x="196.0" y="267.3" width="283.3" height="8.0" fill="#000" /><rect x="196.8" y="268.9" width="281.2" height="4.9" fill="url(#gb04)" /><rect x="196.0" y="275.1" width="78.3" height="8.0" fill="#000" /><rect x="196.8" y="276.7" width="76.2" height="4.9" fill="url(#gb05)" /><rect x="196.0" y="310.8" width="67.3" height="8.0" fill="#000" /><rect x="196.8" y="312.4" width="65.2" height="4.9" fill="url(#gb10)" /><rect x="196.0" y="318.6" width="59.4" height="8.0" fill="#000" /><rect x="196.8" y="320.2" width="57.3" height="4.9" fill="url(#gb11)" /><rect x="196.0" y="326.3" width="128.0" height="8.0" fill="#000" /><rect x="196.8" y="327.9" width="125.9" height="4.9" fill="url(#gb12)" /><rect x="196.0" y="334.1" width="33.8" height="8.0" fill="#000" /><rect x="196.8" y="335.7" width="31.7" height="4.9" fill="url(#gb13)" /><rect x="196.0" y="341.8" width="101.6" height="8.0" fill="#000" /><rect x="196.8" y="343.4" width="99.5" height="4.9" fill="url(#gb14)" /><rect x="196.0" y="349.6" width="69.7" height="8.0" fill="#000" /><rect x="196.8" y="351.2" width="67.6" height="4.9" fill="url(#gb15)" /><rect x="196.0" y="385.3" width="23.7" height="8.0" fill="#000" /><rect x="196.8" y="386.9" width="21.6" height="4.9" fill="url(#gb20)" /><rect x="196.0" y="393.1" width="15.8" height="8.0" fill="#000" /><rect x="196.8" y="394.7" width="13.7" height="4.9" fill="url(#gb21)" /><rect x="196.0" y="400.8" width="36.0" height="8.0" fill="#000" /><rect x="196.8" y="402.4" width="33.9" height="4.9" fill="url(#gb22)" /><rect x="196.0" y="408.6" width="58.0" height="8.0" fill="#000" /><rect x="196.8" y="410.2" width="55.9" height="4.9" fill="url(#gb23)" /><rect x="196.0" y="416.3" width="30.5" height="8.0" fill="#000" /><rect x="196.8" y="417.9" width="28.4" height="4.9" fill="url(#gb24)" /><rect x="196.0" y="424.1" width="76.7" height="8.0" fill="#000" /><rect x="196.8" y="425.7" width="74.6" height="4.9" fill="url(#gb25)" /><rect x="196.0" y="459.8" width="26.4" height="8.0" fill="#000" /><rect x="196.8" y="461.4" width="24.3" height="4.9" fill="url(#gb30)" /><rect x="196.0" y="467.6" width="47.7" height="8.0" fill="#000" /><rect x="196.8" y="469.2" width="45.6" height="4.9" fill="url(#gb31)" /><rect x="196.0" y="475.3" width="52.8" height="8.0" fill="#000" /><rect x="196.8" y="476.9" width="50.7" height="4.9" fill="url(#gb32)" /><rect x="196.0" y="483.1" width="71.7" height="8.0" fill="#000" /><rect x="196.8" y="484.7" width="69.6" height="4.9" fill="url(#gb33)" /><rect x="196.0" y="490.8" width="44.8" height="8.0" fill="#000" /><rect x="196.8" y="492.4" width="42.7" height="4.9" fill="url(#gb34)" /><rect x="196.0" y="498.6" width="88.8" height="8.0" fill="#000" /><rect x="196.8" y="500.2" width="86.7" height="4.9" fill="url(#gb35)" /><rect x="196.0" y="534.3" width="51.4" height="8.0" fill="#000" /><rect x="196.8" y="535.9" width="49.3" height="4.9" fill="url(#gb40)" /><rect x="196.0" y="542.1" width="63.8" height="8.0" fill="#000" /><rect x="196.8" y="543.7" width="61.7" height="4.9" fill="url(#gb41)" /><rect x="196.0" y="549.8" width="95.4" height="8.0" fill="#000" /><rect x="196.8" y="551.4" width="93.3" height="4.9" fill="url(#gb42)" /><rect x="196.0" y="557.6" width="103.1" height="8.0" fill="#000" /><rect x="196.8" y="559.2" width="101.0" height="4.9" fill="url(#gb43)" /><rect x="196.0" y="565.3" width="76.7" height="8.0" fill="#000" /><rect x="196.8" y="566.9" width="74.6" height="4.9" fill="url(#gb44)" /><rect x="196.0" y="573.1" width="114.4" height="8.0" fill="#000" /><rect x="196.8" y="574.7" width="112.3" height="4.9" fill="url(#gb45)" /><rect x="196.0" y="654.9" width="185.0" height="8.0" fill="#000" /><rect x="196.8" y="656.5" width="182.9" height="4.9" fill="url(#gbw)" /><rect x="582.8" y="167.0" width="153.4" height="326.2" fill="#232323" /><line x1="582.8" y1="221.3" x2="736.2" y2="221.3" stroke="#9a9a9a" stroke-width="1.6" /><line x1="582.8" y1="275.9" x2="736.2" y2="275.9" stroke="#9a9a9a" stroke-width="1.6" /><line x1="582.8" y1="331.6" x2="736.2" y2="331.6" stroke="#9a9a9a" stroke-width="1.6" /><line x1="582.8" y1="384.9" x2="736.2" y2="384.9" stroke="#9a9a9a" stroke-width="1.6" /><line x1="582.8" y1="440.4" x2="736.2" y2="440.4" stroke="#9a9a9a" stroke-width="1.6" /><path d="M582.8 167.0 V493.2 H736.2 V167.0" fill="none" stroke="#9a9a9a" stroke-width="2"/><rect x="581.8" y="165.0" width="155.4" height="4.0" fill="#5c5c5c" /><line x1="581.8" y1="165.4" x2="737.2" y2="165.4" stroke="#9c9c9c" stroke-width="1.1" /><line x1="581.8" y1="168.6" x2="737.2" y2="168.6" stroke="#9c9c9c" stroke-width="1.1" /><line x1="577.2" y1="167.0" x2="582.8" y2="167.0" stroke="#c8c8c8" stroke-width="1.6" /><text x="560.2" y="173.4" font-size="17.43" fill="#dddddd" textLength="15.6" lengthAdjust="spacingAndGlyphs">15</text><line x1="577.2" y1="221.3" x2="582.8" y2="221.3" stroke="#c8c8c8" stroke-width="1.6" /><text x="560.2" y="227.7" font-size="17.43" fill="#dddddd" textLength="15.6" lengthAdjust="spacingAndGlyphs">10</text><line x1="577.2" y1="275.9" x2="582.8" y2="275.9" stroke="#c8c8c8" stroke-width="1.6" /><text x="568.1" y="282.3" font-size="17.43" fill="#dddddd" textLength="7.7" lengthAdjust="spacingAndGlyphs">5</text><line x1="577.2" y1="331.6" x2="582.8" y2="331.6" stroke="#c8c8c8" stroke-width="1.6" /><text x="568.1" y="338.0" font-size="17.43" fill="#dddddd" textLength="7.7" lengthAdjust="spacingAndGlyphs">0</text><line x1="577.2" y1="384.9" x2="582.8" y2="384.9" stroke="#c8c8c8" stroke-width="1.6" /><text x="562.6" y="391.3" font-size="17.43" fill="#dddddd" textLength="13.2" lengthAdjust="spacingAndGlyphs">-5</text><line x1="577.2" y1="440.4" x2="582.8" y2="440.4" stroke="#c8c8c8" stroke-width="1.6" /><text x="554.7" y="446.8" font-size="17.43" fill="#dddddd" textLength="21.1" lengthAdjust="spacingAndGlyphs">-10</text><line x1="577.2" y1="493.2" x2="582.8" y2="493.2" stroke="#c8c8c8" stroke-width="1.6" /><text x="554.7" y="499.6" font-size="17.43" fill="#dddddd" textLength="21.1" lengthAdjust="spacingAndGlyphs">-15</text><line x1="582.8" y1="493.2" x2="582.8" y2="499.7" stroke="#c8c8c8" stroke-width="1.6" /><line x1="736.2" y1="493.2" x2="736.2" y2="499.7" stroke="#c8c8c8" stroke-width="1.6" /><text x="624.0" y="160.6" font-size="17.14" fill="#dddddd" textLength="43.0" lengthAdjust="spacingAndGlyphs">DeltaL</text><text x="640.5" y="511.6" font-size="17.14" fill="#dddddd" textLength="38.0" lengthAdjust="spacingAndGlyphs">100%</text><rect x="598.5" y="329.2" width="121.5" height="4.6" fill="url(#gYel)" stroke="#000" stroke-width="1.4"/><rect x="792.0" y="167.0" width="153.6" height="326.2" fill="#232323" /><line x1="792.0" y1="221.3" x2="945.6" y2="221.3" stroke="#9a9a9a" stroke-width="1.6" /><line x1="792.0" y1="275.9" x2="945.6" y2="275.9" stroke="#9a9a9a" stroke-width="1.6" /><line x1="792.0" y1="331.6" x2="945.6" y2="331.6" stroke="#9a9a9a" stroke-width="1.6" /><line x1="792.0" y1="384.9" x2="945.6" y2="384.9" stroke="#9a9a9a" stroke-width="1.6" /><line x1="792.0" y1="440.4" x2="945.6" y2="440.4" stroke="#9a9a9a" stroke-width="1.6" /><path d="M792 167.0 V493.2 H945.6 V167.0" fill="none" stroke="#9a9a9a" stroke-width="2"/><rect x="791.0" y="165.0" width="155.6" height="4.0" fill="#5c5c5c" /><line x1="791.0" y1="165.4" x2="946.6" y2="165.4" stroke="#9c9c9c" stroke-width="1.1" /><line x1="791.0" y1="168.6" x2="946.6" y2="168.6" stroke="#9c9c9c" stroke-width="1.1" /><line x1="786.4" y1="167.0" x2="792.0" y2="167.0" stroke="#c8c8c8" stroke-width="1.6" /><text x="769.4" y="173.4" font-size="17.43" fill="#dddddd" textLength="15.6" lengthAdjust="spacingAndGlyphs">15</text><line x1="786.4" y1="221.3" x2="792.0" y2="221.3" stroke="#c8c8c8" stroke-width="1.6" /><text x="769.4" y="227.7" font-size="17.43" fill="#dddddd" textLength="15.6" lengthAdjust="spacingAndGlyphs">10</text><line x1="786.4" y1="275.9" x2="792.0" y2="275.9" stroke="#c8c8c8" stroke-width="1.6" /><text x="777.3" y="282.3" font-size="17.43" fill="#dddddd" textLength="7.7" lengthAdjust="spacingAndGlyphs">5</text><line x1="786.4" y1="331.6" x2="792.0" y2="331.6" stroke="#c8c8c8" stroke-width="1.6" /><text x="777.3" y="338.0" font-size="17.43" fill="#dddddd" textLength="7.7" lengthAdjust="spacingAndGlyphs">0</text><line x1="786.4" y1="384.9" x2="792.0" y2="384.9" stroke="#c8c8c8" stroke-width="1.6" /><text x="771.8" y="391.3" font-size="17.43" fill="#dddddd" textLength="13.2" lengthAdjust="spacingAndGlyphs">-5</text><line x1="786.4" y1="440.4" x2="792.0" y2="440.4" stroke="#c8c8c8" stroke-width="1.6" /><text x="763.9" y="446.8" font-size="17.43" fill="#dddddd" textLength="21.1" lengthAdjust="spacingAndGlyphs">-10</text><line x1="786.4" y1="493.2" x2="792.0" y2="493.2" stroke="#c8c8c8" stroke-width="1.6" /><text x="763.9" y="499.6" font-size="17.43" fill="#dddddd" textLength="21.1" lengthAdjust="spacingAndGlyphs">-15</text><line x1="792.0" y1="493.2" x2="792.0" y2="499.7" stroke="#c8c8c8" stroke-width="1.6" /><line x1="945.6" y1="493.2" x2="945.6" y2="499.7" stroke="#c8c8c8" stroke-width="1.6" /><text x="831.5" y="160.6" font-size="17.14" fill="#dddddd" textLength="46.0" lengthAdjust="spacingAndGlyphs">DeltaC</text><text x="849.8" y="511.6" font-size="17.14" fill="#dddddd" textLength="38.0" lengthAdjust="spacingAndGlyphs">100%</text><rect x="808.3" y="331.6" width="120.7" height="40.7" fill="url(#gYel)" stroke="#000" stroke-width="1.4"/><rect x="1000.3" y="167.0" width="154.3" height="326.2" fill="#232323" /><line x1="1000.3" y1="221.3" x2="1154.6" y2="221.3" stroke="#9a9a9a" stroke-width="1.6" /><line x1="1000.3" y1="275.9" x2="1154.6" y2="275.9" stroke="#9a9a9a" stroke-width="1.6" /><line x1="1000.3" y1="331.6" x2="1154.6" y2="331.6" stroke="#9a9a9a" stroke-width="1.6" /><line x1="1000.3" y1="384.9" x2="1154.6" y2="384.9" stroke="#9a9a9a" stroke-width="1.6" /><line x1="1000.3" y1="440.4" x2="1154.6" y2="440.4" stroke="#9a9a9a" stroke-width="1.6" /><path d="M1000.3 167.0 V493.2 H1154.6 V167.0" fill="none" stroke="#9a9a9a" stroke-width="2"/><rect x="999.3" y="165.0" width="156.3" height="4.0" fill="#5c5c5c" /><line x1="999.3" y1="165.4" x2="1155.6" y2="165.4" stroke="#9c9c9c" stroke-width="1.1" /><line x1="999.3" y1="168.6" x2="1155.6" y2="168.6" stroke="#9c9c9c" stroke-width="1.1" /><line x1="994.7" y1="167.0" x2="1000.3" y2="167.0" stroke="#c8c8c8" stroke-width="1.6" /><text x="977.7" y="173.4" font-size="17.43" fill="#dddddd" textLength="15.6" lengthAdjust="spacingAndGlyphs">15</text><line x1="994.7" y1="221.3" x2="1000.3" y2="221.3" stroke="#c8c8c8" stroke-width="1.6" /><text x="977.7" y="227.7" font-size="17.43" fill="#dddddd" textLength="15.6" lengthAdjust="spacingAndGlyphs">10</text><line x1="994.7" y1="275.9" x2="1000.3" y2="275.9" stroke="#c8c8c8" stroke-width="1.6" /><text x="985.6" y="282.3" font-size="17.43" fill="#dddddd" textLength="7.7" lengthAdjust="spacingAndGlyphs">5</text><line x1="994.7" y1="331.6" x2="1000.3" y2="331.6" stroke="#c8c8c8" stroke-width="1.6" /><text x="985.6" y="338.0" font-size="17.43" fill="#dddddd" textLength="7.7" lengthAdjust="spacingAndGlyphs">0</text><line x1="994.7" y1="384.9" x2="1000.3" y2="384.9" stroke="#c8c8c8" stroke-width="1.6" /><text x="980.1" y="391.3" font-size="17.43" fill="#dddddd" textLength="13.2" lengthAdjust="spacingAndGlyphs">-5</text><line x1="994.7" y1="440.4" x2="1000.3" y2="440.4" stroke="#c8c8c8" stroke-width="1.6" /><text x="972.2" y="446.8" font-size="17.43" fill="#dddddd" textLength="21.1" lengthAdjust="spacingAndGlyphs">-10</text><line x1="994.7" y1="493.2" x2="1000.3" y2="493.2" stroke="#c8c8c8" stroke-width="1.6" /><text x="972.2" y="499.6" font-size="17.43" fill="#dddddd" textLength="21.1" lengthAdjust="spacingAndGlyphs">-15</text><line x1="1000.3" y1="493.2" x2="1000.3" y2="499.7" stroke="#c8c8c8" stroke-width="1.6" /><line x1="1154.6" y1="493.2" x2="1154.6" y2="499.7" stroke="#c8c8c8" stroke-width="1.6" /><text x="1040.5" y="160.6" font-size="17.14" fill="#dddddd" textLength="47.0" lengthAdjust="spacingAndGlyphs">DeltaH</text><text x="1058.4" y="511.6" font-size="17.14" fill="#dddddd" textLength="38.0" lengthAdjust="spacingAndGlyphs">100%</text><rect x="1017.5" y="259.2" width="120.9" height="72.4" fill="url(#gYel)" stroke="#000" stroke-width="1.4"/><rect x="547.4" y="524.0" width="628.3" height="188.0" fill="#000000" /><rect x="569.8" y="532.0" width="104.9" height="153.0" fill="#b6c19f" /><rect x="569.8" y="608.8" width="104.9" height="76.2" fill="#c1bfa1" shape-rendering="crispEdges"/><rect x="570.3" y="532.5" width="103.9" height="152" fill="none" stroke="#f4f4f4" stroke-width="1.3"/><text x="622.2" y="702.9" font-size="13.29" fill="#f0f0f0" text-anchor="middle" textLength="26.0" lengthAdjust="spacingAndGlyphs">20%</text><rect x="692.3" y="532.0" width="105.7" height="153.0" fill="#b6c387" /><rect x="692.3" y="608.8" width="105.7" height="76.2" fill="#c1c088" shape-rendering="crispEdges"/><rect x="692.8" y="532.5" width="104.7" height="152" fill="none" stroke="#f4f4f4" stroke-width="1.3"/><text x="745.1" y="702.9" font-size="13.29" fill="#f0f0f0" text-anchor="middle" textLength="26.0" lengthAdjust="spacingAndGlyphs">40%</text><rect x="815.2" y="532.0" width="104.6" height="153.0" fill="#b9c672" /><rect x="815.2" y="608.8" width="104.6" height="76.2" fill="#c2c06e" shape-rendering="crispEdges"/><rect x="815.7" y="532.5" width="103.6" height="152" fill="none" stroke="#f4f4f4" stroke-width="1.3"/><text x="867.5" y="702.9" font-size="13.29" fill="#f0f0f0" text-anchor="middle" textLength="26.0" lengthAdjust="spacingAndGlyphs">60%</text><rect x="937.8" y="532.0" width="105.2" height="153.0" fill="#b6c150" /><rect x="937.8" y="608.8" width="105.2" height="76.2" fill="#c1bd4a" shape-rendering="crispEdges"/><rect x="938.3" y="532.5" width="104.2" height="152" fill="none" stroke="#f4f4f4" stroke-width="1.3"/><text x="990.4" y="702.9" font-size="13.29" fill="#f0f0f0" text-anchor="middle" textLength="26.0" lengthAdjust="spacingAndGlyphs">80%</text><rect x="1060.3" y="532.0" width="105.7" height="153.0" fill="#b8c221" /><rect x="1060.3" y="608.8" width="105.7" height="76.2" fill="#c3c000" shape-rendering="crispEdges"/><rect x="1060.8" y="532.5" width="104.7" height="152" fill="none" stroke="#f4f4f4" stroke-width="1.3"/><text x="1113.2" y="702.9" font-size="13.29" fill="#f0f0f0" text-anchor="middle" textLength="33.0" lengthAdjust="spacingAndGlyphs">100%</text><text transform="translate(561 585.4) rotate(-90)" font-size="13.3" fill="#f0f0f0" textLength="40" lengthAdjust="spacingAndGlyphs">Actual</text><text transform="translate(561 671.4) rotate(-90)" font-size="13.3" fill="#f0f0f0" textLength="40" lengthAdjust="spacingAndGlyphs">Target</text><text x="1506.4" y="112.0" font-size="17.43" fill="#dddddd" textLength="88.6" lengthAdjust="spacingAndGlyphs">CIE 1976 u&#x27;v&#x27;</text><text x="204.0" y="765.0" font-size="35.14" fill="#eeeeee" textLength="246.5" lengthAdjust="spacingAndGlyphs">Avg dE2000: 4.06</text><text x="190.8" y="811.7" font-size="34.86" fill="#eeeeee" textLength="273.5" lengthAdjust="spacingAndGlyphs">Max dE2000: 17.13</text><text x="165.7" y="867.2" font-size="34.57" fill="#eeeeee" textLength="231.5" lengthAdjust="spacingAndGlyphs">Current Reading</text><text x="165.7" y="908.4" font-size="27.14" fill="#eeeeee" textLength="107.1" lengthAdjust="spacingAndGlyphs">x: 0.4023</text><text x="331.4" y="908.4" font-size="27.14" fill="#eeeeee" textLength="94.2" lengthAdjust="spacingAndGlyphs">y: 0.506</text><text x="165.7" y="955.5" font-size="28.57" fill="#eeeeee" textLength="116.2" lengthAdjust="spacingAndGlyphs">fL: 129.71</text><text x="165.7" y="995.6" font-size="28.57" fill="#eeeeee" textLength="168.2" lengthAdjust="spacingAndGlyphs">cd/m²: 444.44</text><text x="601.0" y="767.0" font-size="16.43" fill="#dddddd" textLength="87.4" lengthAdjust="spacingAndGlyphs">RGB Balance</text><rect x="525.0" y="773.2" width="268.8" height="207.8" fill="#232323" /><line x1="525.0" y1="826.2" x2="793.8" y2="826.2" stroke="#9a9a9a" stroke-width="1.6" /><line x1="525.0" y1="877.8" x2="793.8" y2="877.8" stroke="#9a9a9a" stroke-width="1.6" /><line x1="525.0" y1="929.5" x2="793.8" y2="929.5" stroke="#9a9a9a" stroke-width="1.6" /><path d="M525 773.2 V981 H793.8 V773.2" fill="none" stroke="#9a9a9a" stroke-width="2"/><rect x="524.0" y="771.2" width="270.8" height="4.0" fill="#5c5c5c" /><line x1="524.0" y1="771.6" x2="794.8" y2="771.6" stroke="#9c9c9c" stroke-width="1.1" /><line x1="524.0" y1="774.8" x2="794.8" y2="774.8" stroke="#9c9c9c" stroke-width="1.1" /><line x1="519.0" y1="773.2" x2="525.0" y2="773.2" stroke="#c8c8c8" stroke-width="1.6" /><text x="501.8" y="779.6" font-size="17.43" fill="#dddddd" textLength="16.6" lengthAdjust="spacingAndGlyphs">40</text><line x1="519.0" y1="826.2" x2="525.0" y2="826.2" stroke="#c8c8c8" stroke-width="1.6" /><text x="501.8" y="832.6" font-size="17.43" fill="#dddddd" textLength="16.6" lengthAdjust="spacingAndGlyphs">20</text><line x1="519.0" y1="877.8" x2="525.0" y2="877.8" stroke="#c8c8c8" stroke-width="1.6" /><text x="510.7" y="884.2" font-size="17.43" fill="#dddddd" textLength="7.7" lengthAdjust="spacingAndGlyphs">0</text><line x1="519.0" y1="929.5" x2="525.0" y2="929.5" stroke="#c8c8c8" stroke-width="1.6" /><text x="496.3" y="935.9" font-size="17.43" fill="#dddddd" textLength="22.1" lengthAdjust="spacingAndGlyphs">-20</text><line x1="519.0" y1="981.0" x2="525.0" y2="981.0" stroke="#c8c8c8" stroke-width="1.6" /><text x="496.3" y="987.4" font-size="17.43" fill="#dddddd" textLength="22.1" lengthAdjust="spacingAndGlyphs">-40</text><line x1="525.0" y1="981.0" x2="525.0" y2="987.5" stroke="#c8c8c8" stroke-width="1.6" /><line x1="793.8" y1="981.0" x2="793.8" y2="987.5" stroke="#c8c8c8" stroke-width="1.6" /><text x="640.0" y="1000.0" font-size="15.00" fill="#dddddd" textLength="38.0" lengthAdjust="spacingAndGlyphs">100%</text><rect x="552.3" y="877.8" width="71.2" height="33.2" fill="url(#gR)" stroke="#000" stroke-width="1.4"/><rect x="623.5" y="871.6" width="71.9" height="6.2" fill="url(#gGr)" stroke="#000" stroke-width="1.4"/><rect x="695.4" y="777.8" width="72.2" height="100.0" fill="url(#gB)" stroke="#000" stroke-width="1.4"/><rect x="816.7" y="737.5" width="21.1" height="32.2" fill="#000000" /><rect x="837.8" y="737.5" width="744.0" height="16.7" fill="#2d2d2d" /><rect x="837.8" y="754.2" width="744.0" height="15.5" fill="#141414" /><text x="1013.7" y="760.3" font-size="17.14" fill="#f4f4f4" textLength="42.0" lengthAdjust="spacingAndGlyphs" stroke="#f4f4f4" stroke-width="0.45">20%</text><text x="1128.0" y="760.3" font-size="17.14" fill="#f4f4f4" textLength="42.0" lengthAdjust="spacingAndGlyphs" stroke="#f4f4f4" stroke-width="0.45">40%</text><text x="1243.3" y="760.3" font-size="17.14" fill="#f4f4f4" textLength="42.0" lengthAdjust="spacingAndGlyphs" stroke="#f4f4f4" stroke-width="0.45">60%</text><text x="1358.0" y="760.3" font-size="17.14" fill="#f4f4f4" textLength="42.0" lengthAdjust="spacingAndGlyphs" stroke="#f4f4f4" stroke-width="0.45">80%</text><text x="1473.4" y="760.3" font-size="17.14" fill="#f4f4f4" textLength="55.0" lengthAdjust="spacingAndGlyphs" stroke="#f4f4f4" stroke-width="0.45">100%</text><rect x="816.7" y="770.0" width="21.1" height="30.0" fill="#262626" /><rect x="837.8" y="770.0" width="744.0" height="30.0" fill="#404040" /><text x="844.0" y="791.7" font-size="19.57" fill="#f2f2f2" textLength="84.0" lengthAdjust="spacingAndGlyphs" stroke="#f2f2f2" stroke-width="0.35">x: CIE31</text><text x="1013.7" y="791.7" font-size="19.57" fill="#f2f2f2" textLength="71.8" lengthAdjust="spacingAndGlyphs" stroke="#f2f2f2" stroke-width="0.35">0.3242</text><text x="1128.0" y="791.7" font-size="19.57" fill="#f2f2f2" textLength="71.8" lengthAdjust="spacingAndGlyphs" stroke="#f2f2f2" stroke-width="0.35">0.3458</text><text x="1243.3" y="791.7" font-size="19.57" fill="#f2f2f2" textLength="71.8" lengthAdjust="spacingAndGlyphs" stroke="#f2f2f2" stroke-width="0.35">0.3665</text><text x="1358.0" y="791.7" font-size="19.57" fill="#f2f2f2" textLength="71.8" lengthAdjust="spacingAndGlyphs" stroke="#f2f2f2" stroke-width="0.35">0.3853</text><text x="1473.4" y="791.7" font-size="19.57" fill="#f2f2f2" textLength="71.8" lengthAdjust="spacingAndGlyphs" stroke="#f2f2f2" stroke-width="0.35">0.4023</text><rect x="816.7" y="800.0" width="21.1" height="30.0" fill="#222222" /><rect x="837.8" y="800.0" width="744.0" height="30.0" fill="#808080" /><text x="844.0" y="821.7" font-size="19.57" fill="#f2f2f2" textLength="84.0" lengthAdjust="spacingAndGlyphs" stroke="#f2f2f2" stroke-width="0.35">y: CIE31</text><text x="1013.7" y="821.7" font-size="19.57" fill="#f2f2f2" textLength="71.8" lengthAdjust="spacingAndGlyphs" stroke="#f2f2f2" stroke-width="0.35">0.3681</text><text x="1128.0" y="821.7" font-size="19.57" fill="#f2f2f2" textLength="71.8" lengthAdjust="spacingAndGlyphs" stroke="#f2f2f2" stroke-width="0.35">0.4072</text><text x="1243.3" y="821.7" font-size="19.57" fill="#f2f2f2" textLength="71.8" lengthAdjust="spacingAndGlyphs" stroke="#f2f2f2" stroke-width="0.35">0.4430</text><text x="1358.0" y="821.7" font-size="19.57" fill="#f2f2f2" textLength="71.8" lengthAdjust="spacingAndGlyphs" stroke="#f2f2f2" stroke-width="0.35">0.4753</text><text x="1473.4" y="821.7" font-size="19.57" fill="#f2f2f2" textLength="71.8" lengthAdjust="spacingAndGlyphs" stroke="#f2f2f2" stroke-width="0.35">0.5060</text><rect x="816.7" y="830.0" width="21.1" height="30.0" fill="#262626" /><rect x="837.8" y="830.0" width="744.0" height="30.0" fill="#404040" /><text x="844.0" y="851.7" font-size="19.57" fill="#f2f2f2" textLength="13.0" lengthAdjust="spacingAndGlyphs" stroke="#f2f2f2" stroke-width="0.35">Y</text><text x="1013.7" y="851.7" font-size="19.57" fill="#f2f2f2" textLength="99.2" lengthAdjust="spacingAndGlyphs" stroke="#f2f2f2" stroke-width="0.35">468.7639</text><text x="1128.0" y="851.7" font-size="19.57" fill="#f2f2f2" textLength="99.2" lengthAdjust="spacingAndGlyphs" stroke="#f2f2f2" stroke-width="0.35">461.2788</text><text x="1243.3" y="851.7" font-size="19.57" fill="#f2f2f2" textLength="99.2" lengthAdjust="spacingAndGlyphs" stroke="#f2f2f2" stroke-width="0.35">458.0230</text><text x="1358.0" y="851.7" font-size="19.57" fill="#f2f2f2" textLength="99.2" lengthAdjust="spacingAndGlyphs" stroke="#f2f2f2" stroke-width="0.35">448.4139</text><text x="1473.4" y="851.7" font-size="19.57" fill="#f2f2f2" textLength="99.2" lengthAdjust="spacingAndGlyphs" stroke="#f2f2f2" stroke-width="0.35">444.4365</text><rect x="816.7" y="860.0" width="21.1" height="30.0" fill="#222222" /><rect x="837.8" y="860.0" width="744.0" height="30.0" fill="#808080" /><text x="844.0" y="881.7" font-size="19.57" fill="#f2f2f2" textLength="153.0" lengthAdjust="spacingAndGlyphs" stroke="#f2f2f2" stroke-width="0.35">Target x:CIE31</text><text x="1013.7" y="881.7" font-size="19.57" fill="#f2f2f2" textLength="71.8" lengthAdjust="spacingAndGlyphs" stroke="#f2f2f2" stroke-width="0.35">0.3344</text><text x="1128.0" y="881.7" font-size="19.57" fill="#f2f2f2" textLength="71.8" lengthAdjust="spacingAndGlyphs" stroke="#f2f2f2" stroke-width="0.35">0.3564</text><text x="1243.3" y="881.7" font-size="19.57" fill="#f2f2f2" textLength="71.8" lengthAdjust="spacingAndGlyphs" stroke="#f2f2f2" stroke-width="0.35">0.3773</text><text x="1358.0" y="881.7" font-size="19.57" fill="#f2f2f2" textLength="71.8" lengthAdjust="spacingAndGlyphs" stroke="#f2f2f2" stroke-width="0.35">0.3969</text><text x="1473.4" y="881.7" font-size="19.57" fill="#f2f2f2" textLength="71.8" lengthAdjust="spacingAndGlyphs" stroke="#f2f2f2" stroke-width="0.35">0.4193</text><rect x="816.7" y="890.0" width="21.1" height="30.0" fill="#262626" /><rect x="837.8" y="890.0" width="744.0" height="30.0" fill="#404040" /><text x="844.0" y="911.7" font-size="19.57" fill="#f2f2f2" textLength="153.0" lengthAdjust="spacingAndGlyphs" stroke="#f2f2f2" stroke-width="0.35">Target y:CIE31</text><text x="1013.7" y="911.7" font-size="19.57" fill="#f2f2f2" textLength="71.8" lengthAdjust="spacingAndGlyphs" stroke="#f2f2f2" stroke-width="0.35">0.3648</text><text x="1128.0" y="911.7" font-size="19.57" fill="#f2f2f2" textLength="71.8" lengthAdjust="spacingAndGlyphs" stroke="#f2f2f2" stroke-width="0.35">0.4013</text><text x="1243.3" y="911.7" font-size="19.57" fill="#f2f2f2" textLength="71.8" lengthAdjust="spacingAndGlyphs" stroke="#f2f2f2" stroke-width="0.35">0.4358</text><text x="1358.0" y="911.7" font-size="19.57" fill="#f2f2f2" textLength="71.8" lengthAdjust="spacingAndGlyphs" stroke="#f2f2f2" stroke-width="0.35">0.4682</text><text x="1473.4" y="911.7" font-size="19.57" fill="#f2f2f2" textLength="71.8" lengthAdjust="spacingAndGlyphs" stroke="#f2f2f2" stroke-width="0.35">0.5053</text><rect x="816.7" y="920.0" width="21.1" height="30.0" fill="#222222" /><rect x="837.8" y="920.0" width="744.0" height="30.0" fill="#808080" /><text x="844.0" y="941.7" font-size="19.57" fill="#f2f2f2" textLength="89.0" lengthAdjust="spacingAndGlyphs" stroke="#f2f2f2" stroke-width="0.35">Target Y</text><text x="1013.7" y="941.7" font-size="19.57" fill="#f2f2f2" textLength="99.2" lengthAdjust="spacingAndGlyphs" stroke="#f2f2f2" stroke-width="0.35">473.0235</text><text x="1128.0" y="941.7" font-size="19.57" fill="#f2f2f2" textLength="99.2" lengthAdjust="spacingAndGlyphs" stroke="#f2f2f2" stroke-width="0.35">464.7205</text><text x="1243.3" y="941.7" font-size="19.57" fill="#f2f2f2" textLength="99.2" lengthAdjust="spacingAndGlyphs" stroke="#f2f2f2" stroke-width="0.35">458.3409</text><text x="1358.0" y="941.7" font-size="19.57" fill="#f2f2f2" textLength="99.2" lengthAdjust="spacingAndGlyphs" stroke="#f2f2f2" stroke-width="0.35">453.3342</text><text x="1473.4" y="941.7" font-size="19.57" fill="#f2f2f2" textLength="99.2" lengthAdjust="spacingAndGlyphs" stroke="#f2f2f2" stroke-width="0.35">448.4938</text><rect x="816.7" y="950.0" width="21.1" height="30.0" fill="#262626" /><rect x="837.8" y="950.0" width="744.0" height="30.0" fill="#404040" /><text x="844.0" y="971.7" font-size="19.57" fill="#f2f2f2" textLength="89.0" lengthAdjust="spacingAndGlyphs" stroke="#f2f2f2" stroke-width="0.35">ΔE 2000</text><text x="1013.7" y="971.7" font-size="19.57" fill="#f2f2f2" textLength="71.8" lengthAdjust="spacingAndGlyphs" stroke="#f2f2f2" stroke-width="0.35">5.2033</text><text x="1128.0" y="971.7" font-size="19.57" fill="#f2f2f2" textLength="71.8" lengthAdjust="spacingAndGlyphs" stroke="#f2f2f2" stroke-width="0.35">4.0115</text><text x="1243.3" y="971.7" font-size="19.57" fill="#f2f2f2" textLength="71.8" lengthAdjust="spacingAndGlyphs" stroke="#f2f2f2" stroke-width="0.35">3.5102</text><text x="1358.0" y="971.7" font-size="19.57" fill="#f2f2f2" textLength="71.8" lengthAdjust="spacingAndGlyphs" stroke="#f2f2f2" stroke-width="0.35">3.2065</text><text x="1473.4" y="971.7" font-size="19.57" fill="#f2f2f2" textLength="71.8" lengthAdjust="spacingAndGlyphs" stroke="#f2f2f2" stroke-width="0.35">3.5489</text><rect x="816.7" y="980.0" width="21.1" height="30.0" fill="#222222" /><rect x="837.8" y="980.0" width="744.0" height="30.0" fill="#808080" /><text x="844.0" y="1001.7" font-size="19.57" fill="#f2f2f2" textLength="61.0" lengthAdjust="spacingAndGlyphs" stroke="#f2f2f2" stroke-width="0.35">dEITP</text><text x="1013.7" y="1001.7" font-size="19.57" fill="#f2f2f2" textLength="71.8" lengthAdjust="spacingAndGlyphs" stroke="#f2f2f2" stroke-width="0.35">7.3957</text><text x="1128.0" y="1001.7" font-size="19.57" fill="#f2f2f2" textLength="71.8" lengthAdjust="spacingAndGlyphs" stroke="#f2f2f2" stroke-width="0.35">7.7079</text><text x="1243.3" y="1001.7" font-size="19.57" fill="#f2f2f2" textLength="71.8" lengthAdjust="spacingAndGlyphs" stroke="#f2f2f2" stroke-width="0.35">7.5603</text><text x="1358.0" y="1001.7" font-size="19.57" fill="#f2f2f2" textLength="71.8" lengthAdjust="spacingAndGlyphs" stroke="#f2f2f2" stroke-width="0.35">7.5142</text><text x="1473.4" y="1001.7" font-size="19.57" fill="#f2f2f2" textLength="85.5" lengthAdjust="spacingAndGlyphs" stroke="#f2f2f2" stroke-width="0.35">10.5648</text><rect x="151" y="1011" width="33.2" height="49" rx="2.5" fill="url(#gTab)" stroke="#9a9a9a" stroke-width="0.9"/><circle cx="167.5" cy="1020" r="4.5" fill="#555"/><path d="M164.8 1021.5 L167.5 1018.5 L170.2 1021.5 Z" fill="#222"/><rect x="154.9" y="1031.6" width="25.8" height="21.6" rx="2" fill="#ffff00"/><rect x="189" y="1011" width="111.7" height="49" rx="2.5" fill="url(#gTab)" stroke="#9a9a9a" stroke-width="0.9"/><rect x="193.6" y="1016" width="103.6" height="25.7" rx="1.5" fill="#c5c5a4"/><text x="237.1" y="1053.6" font-size="9.14" fill="#2a2a2a" font-weight="bold" textLength="15.5" lengthAdjust="spacingAndGlyphs">20%</text><rect x="303.5" y="1011" width="111.5" height="49" rx="2.5" fill="url(#gTab)" stroke="#9a9a9a" stroke-width="0.9"/><rect x="307.7" y="1016" width="104.0" height="25.7" rx="1.5" fill="#c4c48a"/><text x="351.5" y="1053.6" font-size="9.14" fill="#2a2a2a" font-weight="bold" textLength="15.5" lengthAdjust="spacingAndGlyphs">40%</text><rect x="417.6" y="1011" width="111.0" height="49" rx="2.5" fill="url(#gTab)" stroke="#9a9a9a" stroke-width="0.9"/><rect x="421.5" y="1016" width="104.3" height="25.7" rx="1.5" fill="#c2c26e"/><text x="465.4" y="1053.6" font-size="9.14" fill="#2a2a2a" font-weight="bold" textLength="15.5" lengthAdjust="spacingAndGlyphs">60%</text><rect x="531.4" y="1011" width="111.3" height="49" rx="2.5" fill="url(#gTab)" stroke="#9a9a9a" stroke-width="0.9"/><rect x="535.6" y="1016" width="103.9" height="25.7" rx="1.5" fill="#c1c14c"/><text x="579.3" y="1053.6" font-size="9.14" fill="#2a2a2a" font-weight="bold" textLength="15.5" lengthAdjust="spacingAndGlyphs">80%</text><rect x="644.8" y="1011" width="112.2" height="49" rx="2.5" fill="#2a2a2a" stroke="#151515" stroke-width="0.9"/><rect x="649" y="1016" width="104.6" height="25.7" rx="1.5" fill="#c3c300"/><text x="690.6" y="1053.6" font-size="9.14" fill="#ffffff" font-weight="bold" textLength="20.5" lengthAdjust="spacingAndGlyphs">100%</text><rect x="1714.9" y="1011" width="169" height="22.6" fill="url(#gSm)"/><line x1="1749.3" y1="1011.0" x2="1749.3" y2="1033.6" stroke="#5a5a5a" stroke-width="1" /><line x1="1783.1" y1="1011.0" x2="1783.1" y2="1033.6" stroke="#5a5a5a" stroke-width="1" /><line x1="1816.3" y1="1011.0" x2="1816.3" y2="1033.6" stroke="#5a5a5a" stroke-width="1" /><line x1="1850.1" y1="1011.0" x2="1850.1" y2="1033.6" stroke="#5a5a5a" stroke-width="1" /><circle cx="1732" cy="1024" r="6" fill="#8a8a8a" stroke="#a8a8a8" stroke-width="0.8"/><circle cx="1766" cy="1024" r="6" fill="#8a8a8a" stroke="#a8a8a8" stroke-width="0.8"/><circle cx="1800" cy="1024" r="6" fill="#8a8a8a" stroke="#a8a8a8" stroke-width="0.8"/><circle cx="1833" cy="1024" r="6" fill="#8a8a8a" stroke="#a8a8a8" stroke-width="0.8"/><circle cx="1867" cy="1024" r="6" fill="#8a8a8a" stroke="#a8a8a8" stroke-width="0.8"/><rect x="1884.0" y="1011.0" width="36.0" height="22.6" fill="#2a2a2a" /><rect x="1678" y="1026" width="34.7" height="32" rx="2" fill="url(#gTab)"/><rect x="1685" y="1030" width="20" height="20" rx="2" fill="none" stroke="#222" stroke-width="1.6"/><rect x="1690" y="1035" width="10" height="10" fill="#000"/><rect x="1714.9" y="1034.9" width="101" height="23.1" rx="2" fill="url(#gBtn)"/><rect x="1817" y="1034.9" width="101" height="23.1" rx="2" fill="url(#gBtn)"/><circle cx="1737.5" cy="1046" r="7" fill="#9a9a9a"/><circle cx="1898" cy="1046" r="7" fill="#9a9a9a"/><text x="1733.0" y="1050.0" font-size="12.86" fill="#222">«</text><text x="1894.0" y="1050.0" font-size="12.86" fill="#222">»</text><text x="1757.9" y="1051.0" font-size="18.57" fill="#222" textLength="37.1" lengthAdjust="spacingAndGlyphs">Back</text><text x="1837.5" y="1051.0" font-size="18.57" fill="#222" textLength="38.1" lengthAdjust="spacingAndGlyphs">Next</text><g opacity="0.9"><path d="M1640.7 1029.2 L1670.4 1026.4 L1669.3 1004 L1631.4 996.7 L1633.1 1033.3 L1655.9 1043.7 L1697.3 1032.6 L1674.5 1028.1" fill="none" stroke="#c8c8c8" stroke-width="5.2" stroke-linejoin="round" stroke-linecap="round"/><path d="M1640.7 1029.2 L1670.4 1026.4 L1669.3 1004 L1631.4 996.7 L1633.1 1033.3 L1655.9 1043.7 L1697.3 1032.6 L1674.5 1028.1" fill="none" stroke="#8e2a33" stroke-width="3.2" stroke-linejoin="round" stroke-linecap="round"/><path d="M1641.4 1009.2 L1653.8 1024.3 L1674.5 995.4" fill="none" stroke="#c8c8c8" stroke-width="4.6" stroke-linejoin="round" stroke-linecap="round"/><path d="M1641.4 1009.2 L1653.8 1024.3 L1674.5 995.4" fill="none" stroke="#2c2c2c" stroke-width="2.6" stroke-linejoin="round" stroke-linecap="round"/></g><text x="1675.6" y="1024.6" font-size="27.86" fill="#9a2a36" font-weight="bold" textLength="147.8" lengthAdjust="spacingAndGlyphs" stroke="#d0d0d0" stroke-width="1.6" paint-order="stroke" fill-opacity="0.85">NOTEBOOK</text><text x="1823.4" y="1024.6" font-size="27.86" fill="#2c2c2c" font-weight="bold" textLength="89.3" lengthAdjust="spacingAndGlyphs" stroke="#d0d0d0" stroke-width="1.6" paint-order="stroke" fill-opacity="0.8">CHECK</text><path d="M1230.1 117.0 H1908.3 V686.6 H1230.1 Z" fill="none" stroke="#9a9a9a" stroke-width="2.2"/><line x1="1230.1" y1="686.6" x2="1230.1" y2="693.6" stroke="#c8c8c8" stroke-width="1.6"/><text x="1226.2" y="712.2" font-size="17.4" fill="#dddddd" textLength="7.7" lengthAdjust="spacingAndGlyphs">0</text><line x1="1286.6" y1="686.6" x2="1286.6" y2="693.6" stroke="#c8c8c8" stroke-width="1.6"/><text x="1271.6" y="712.2" font-size="17.4" fill="#dddddd" textLength="30.0" lengthAdjust="spacingAndGlyphs">0.05</text><line x1="1343.1" y1="686.6" x2="1343.1" y2="693.6" stroke="#c8c8c8" stroke-width="1.6"/><text x="1332.5" y="712.2" font-size="17.4" fill="#dddddd" textLength="21.1" lengthAdjust="spacingAndGlyphs">0.1</text><line x1="1399.6" y1="686.6" x2="1399.6" y2="693.6" stroke="#c8c8c8" stroke-width="1.6"/><text x="1384.6" y="712.2" font-size="17.4" fill="#dddddd" textLength="30.0" lengthAdjust="spacingAndGlyphs">0.15</text><line x1="1456.1" y1="686.6" x2="1456.1" y2="693.6" stroke="#c8c8c8" stroke-width="1.6"/><text x="1445.5" y="712.2" font-size="17.4" fill="#dddddd" textLength="21.1" lengthAdjust="spacingAndGlyphs">0.2</text><line x1="1512.6" y1="686.6" x2="1512.6" y2="693.6" stroke="#c8c8c8" stroke-width="1.6"/><text x="1497.6" y="712.2" font-size="17.4" fill="#dddddd" textLength="30.0" lengthAdjust="spacingAndGlyphs">0.25</text><line x1="1569.1" y1="686.6" x2="1569.1" y2="693.6" stroke="#c8c8c8" stroke-width="1.6"/><text x="1558.5" y="712.2" font-size="17.4" fill="#dddddd" textLength="21.1" lengthAdjust="spacingAndGlyphs">0.3</text><line x1="1625.6" y1="686.6" x2="1625.6" y2="693.6" stroke="#c8c8c8" stroke-width="1.6"/><text x="1610.6" y="712.2" font-size="17.4" fill="#dddddd" textLength="30.0" lengthAdjust="spacingAndGlyphs">0.35</text><line x1="1682.1" y1="686.6" x2="1682.1" y2="693.6" stroke="#c8c8c8" stroke-width="1.6"/><text x="1671.5" y="712.2" font-size="17.4" fill="#dddddd" textLength="21.1" lengthAdjust="spacingAndGlyphs">0.4</text><line x1="1738.6" y1="686.6" x2="1738.6" y2="693.6" stroke="#c8c8c8" stroke-width="1.6"/><text x="1723.6" y="712.2" font-size="17.4" fill="#dddddd" textLength="30.0" lengthAdjust="spacingAndGlyphs">0.45</text><line x1="1795.1" y1="686.6" x2="1795.1" y2="693.6" stroke="#c8c8c8" stroke-width="1.6"/><text x="1784.5" y="712.2" font-size="17.4" fill="#dddddd" textLength="21.1" lengthAdjust="spacingAndGlyphs">0.5</text><line x1="1851.6" y1="686.6" x2="1851.6" y2="693.6" stroke="#c8c8c8" stroke-width="1.6"/><text x="1836.6" y="712.2" font-size="17.4" fill="#dddddd" textLength="30.0" lengthAdjust="spacingAndGlyphs">0.55</text><line x1="1223.1" y1="687.2" x2="1230.1" y2="687.2" stroke="#c8c8c8" stroke-width="1.6"/><text x="1215.1" y="693.6" font-size="17.4" fill="#dddddd" textLength="7.7" lengthAdjust="spacingAndGlyphs">0</text><line x1="1223.1" y1="639.8" x2="1230.1" y2="639.8" stroke="#c8c8c8" stroke-width="1.6"/><text x="1192.8" y="646.2" font-size="17.4" fill="#dddddd" textLength="30.0" lengthAdjust="spacingAndGlyphs">0.05</text><line x1="1223.1" y1="592.5" x2="1230.1" y2="592.5" stroke="#c8c8c8" stroke-width="1.6"/><text x="1201.7" y="598.9" font-size="17.4" fill="#dddddd" textLength="21.1" lengthAdjust="spacingAndGlyphs">0.1</text><line x1="1223.1" y1="545.1" x2="1230.1" y2="545.1" stroke="#c8c8c8" stroke-width="1.6"/><text x="1192.8" y="551.5" font-size="17.4" fill="#dddddd" textLength="30.0" lengthAdjust="spacingAndGlyphs">0.15</text><line x1="1223.1" y1="497.7" x2="1230.1" y2="497.7" stroke="#c8c8c8" stroke-width="1.6"/><text x="1201.7" y="504.1" font-size="17.4" fill="#dddddd" textLength="21.1" lengthAdjust="spacingAndGlyphs">0.2</text><line x1="1223.1" y1="450.4" x2="1230.1" y2="450.4" stroke="#c8c8c8" stroke-width="1.6"/><text x="1192.8" y="456.8" font-size="17.4" fill="#dddddd" textLength="30.0" lengthAdjust="spacingAndGlyphs">0.25</text><line x1="1223.1" y1="403.0" x2="1230.1" y2="403.0" stroke="#c8c8c8" stroke-width="1.6"/><text x="1201.7" y="409.4" font-size="17.4" fill="#dddddd" textLength="21.1" lengthAdjust="spacingAndGlyphs">0.3</text><line x1="1223.1" y1="355.6" x2="1230.1" y2="355.6" stroke="#c8c8c8" stroke-width="1.6"/><text x="1192.8" y="362.0" font-size="17.4" fill="#dddddd" textLength="30.0" lengthAdjust="spacingAndGlyphs">0.35</text><line x1="1223.1" y1="308.2" x2="1230.1" y2="308.2" stroke="#c8c8c8" stroke-width="1.6"/><text x="1201.7" y="314.6" font-size="17.4" fill="#dddddd" textLength="21.1" lengthAdjust="spacingAndGlyphs">0.4</text><line x1="1223.1" y1="260.9" x2="1230.1" y2="260.9" stroke="#c8c8c8" stroke-width="1.6"/><text x="1192.8" y="267.3" font-size="17.4" fill="#dddddd" textLength="30.0" lengthAdjust="spacingAndGlyphs">0.45</text><line x1="1223.1" y1="213.5" x2="1230.1" y2="213.5" stroke="#c8c8c8" stroke-width="1.6"/><text x="1201.7" y="219.9" font-size="17.4" fill="#dddddd" textLength="21.1" lengthAdjust="spacingAndGlyphs">0.5</text><line x1="1223.1" y1="166.1" x2="1230.1" y2="166.1" stroke="#c8c8c8" stroke-width="1.6"/><text x="1192.8" y="172.5" font-size="17.4" fill="#dddddd" textLength="30.0" lengthAdjust="spacingAndGlyphs">0.55</text><rect x="1363.0" y="145.0" width="14" height="14" fill="none" stroke="#ffffff" stroke-width="1.8"/><rect x="1376.0" y="158.5" width="14" height="14" fill="none" stroke="#ffffff" stroke-width="1.8"/><rect x="1388.8" y="173.2" width="14" height="14" fill="none" stroke="#ffffff" stroke-width="1.8"/><rect x="1405.0" y="190.5" width="14" height="14" fill="none" stroke="#ffffff" stroke-width="1.8"/><rect x="1423.5" y="209.0" width="14" height="14" fill="none" stroke="#ffffff" stroke-width="1.8"/><rect x="1452.4" y="154.0" width="14" height="14" fill="none" stroke="#ffffff" stroke-width="1.8"/><rect x="1451.0" y="167.4" width="14" height="14" fill="none" stroke="#ffffff" stroke-width="1.8"/><rect x="1450.5" y="181.7" width="14" height="14" fill="none" stroke="#ffffff" stroke-width="1.8"/><rect x="1449.0" y="196.3" width="14" height="14" fill="none" stroke="#ffffff" stroke-width="1.8"/><rect x="1447.8" y="213.7" width="14" height="14" fill="none" stroke="#ffffff" stroke-width="1.8"/><rect x="1379.2" y="247.2" width="14" height="14" fill="none" stroke="#ffffff" stroke-width="1.8"/><rect x="1391.9" y="245.3" width="14" height="14" fill="none" stroke="#ffffff" stroke-width="1.8"/><rect x="1405.0" y="242.6" width="14" height="14" fill="none" stroke="#ffffff" stroke-width="1.8"/><rect x="1419.6" y="239.5" width="14" height="14" fill="none" stroke="#ffffff" stroke-width="1.8"/><rect x="1433.1" y="236.8" width="14" height="14" fill="none" stroke="#ffffff" stroke-width="1.8"/><rect x="1442.7" y="269.5" width="14" height="14" fill="none" stroke="#ffffff" stroke-width="1.8"/><rect x="1439.7" y="311.9" width="14" height="14" fill="none" stroke="#ffffff" stroke-width="1.8"/><rect x="1435.0" y="364.0" width="14" height="14" fill="none" stroke="#ffffff" stroke-width="1.8"/><rect x="1429.3" y="427.5" width="14" height="14" fill="none" stroke="#ffffff" stroke-width="1.8"/><rect x="1421.0" y="529.0" width="14" height="14" fill="none" stroke="#ffffff" stroke-width="1.8"/><rect x="1462.8" y="253.3" width="14" height="14" fill="none" stroke="#ffffff" stroke-width="1.8"/><rect x="1483.2" y="275.3" width="14" height="14" fill="none" stroke="#ffffff" stroke-width="1.8"/><rect x="1503.6" y="299.2" width="14" height="14" fill="none" stroke="#ffffff" stroke-width="1.8"/><rect x="1532.2" y="329.3" width="14" height="14" fill="none" stroke="#ffffff" stroke-width="1.8"/><rect x="1566.0" y="365.1" width="14" height="14" fill="none" stroke="#ffffff" stroke-width="1.8"/><rect x="1497.5" y="224.4" width="14" height="14" fill="none" stroke="#ffffff" stroke-width="1.8"/><rect x="1552.6" y="213.7" width="14" height="14" fill="none" stroke="#ffffff" stroke-width="1.8"/><rect x="1605.4" y="206.0" width="14" height="14" fill="none" stroke="#ffffff" stroke-width="1.8"/><rect x="1663.2" y="195.2" width="14" height="14" fill="none" stroke="#ffffff" stroke-width="1.8"/><rect x="1731.0" y="182.8" width="14" height="14" fill="none" stroke="#ffffff" stroke-width="1.8"/><rect x="1445" y="234" width="14" height="14" fill="none" stroke="#000" stroke-width="2"/><circle cx="1395" cy="154.4" r="4.4" fill="#14b014" stroke="#141414" stroke-width="1.5"/><circle cx="1395" cy="167.5" r="4.4" fill="#44a444" stroke="#141414" stroke-width="1.5"/><circle cx="1395" cy="180.2" r="4.4" fill="#62a062" stroke="#141414" stroke-width="1.5"/><circle cx="1403.5" cy="195.6" r="4.4" fill="#80a880" stroke="#141414" stroke-width="1.5"/><circle cx="1422" cy="216" r="4.4" fill="#98b098" stroke="#141414" stroke-width="1.5"/><circle cx="1449.7" cy="162.9" r="4.4" fill="#b8b000" stroke="#141414" stroke-width="1.5"/><circle cx="1449.3" cy="173.6" r="4.4" fill="#b8b05a" stroke="#141414" stroke-width="1.5"/><circle cx="1447.8" cy="186" r="4.4" fill="#b8b47c" stroke="#141414" stroke-width="1.5"/><circle cx="1446.7" cy="202.2" r="4.4" fill="#b4b090" stroke="#141414" stroke-width="1.5"/><circle cx="1444.7" cy="221.4" r="4.4" fill="#b8b8a4" stroke="#141414" stroke-width="1.5"/><circle cx="1444" cy="239.2" r="4.4" fill="#ffffff" stroke="#141414" stroke-width="1.5"/><circle cx="1396.6" cy="249.5" r="4.4" fill="#0a4a4a" stroke="#141414" stroke-width="1.5"/><circle cx="1396.6" cy="248.4" r="4.4" fill="#14b0b0" stroke="#141414" stroke-width="1.5"/><circle cx="1404.7" cy="247.6" r="4.4" fill="#78b0b0" stroke="#141414" stroke-width="1.5"/><circle cx="1417.8" cy="245.7" r="4.4" fill="#90b0b0" stroke="#141414" stroke-width="1.5"/><circle cx="1430.5" cy="243" r="4.4" fill="#a4b4b4" stroke="#141414" stroke-width="1.5"/><circle cx="1442" cy="274.6" r="4.4" fill="#b0a8b4" stroke="#141414" stroke-width="1.5"/><circle cx="1439.3" cy="317" r="4.4" fill="#9c9cc0" stroke="#141414" stroke-width="1.5"/><circle cx="1436.3" cy="369" r="4.4" fill="#7c7cc0" stroke="#141414" stroke-width="1.5"/><circle cx="1427.8" cy="401.8" r="4.4" fill="#5c5cc0" stroke="#141414" stroke-width="1.5"/><circle cx="1416.2" cy="412.6" r="4.4" fill="#2828b0" stroke="#141414" stroke-width="1.5"/><circle cx="1462.5" cy="260.3" r="4.4" fill="#c0a0c0" stroke="#141414" stroke-width="1.5"/><circle cx="1483.3" cy="282.3" r="4.4" fill="#c090c0" stroke="#141414" stroke-width="1.5"/><circle cx="1504.5" cy="304.7" r="4.4" fill="#c080c0" stroke="#141414" stroke-width="1.5"/><circle cx="1519.1" cy="316.2" r="4.4" fill="#a060a0" stroke="#141414" stroke-width="1.5"/><circle cx="1521.4" cy="315" r="4.4" fill="#c020c0" stroke="#141414" stroke-width="1.5"/><circle cx="1495.2" cy="230.3" r="4.4" fill="#c09090" stroke="#141414" stroke-width="1.5"/><circle cx="1551.9" cy="222.6" r="4.4" fill="#c07878" stroke="#141414" stroke-width="1.5"/><circle cx="1605" cy="211.8" r="4.4" fill="#c06a6a" stroke="#141414" stroke-width="1.5"/><circle cx="1647" cy="197.5" r="4.4" fill="#b45050" stroke="#141414" stroke-width="1.5"/><circle cx="1653.2" cy="192.9" r="4.4" fill="#b43030" stroke="#141414" stroke-width="1.5"/><defs><linearGradient id="gIn1" x1="0" y1="0" x2="1" y2="1"><stop offset="0" stop-color="#c8ff00"/><stop offset="0.5" stop-color="#ffff00"/><stop offset="1" stop-color="#ffa800"/></linearGradient><linearGradient id="gIn2" x1="0" y1="0" x2="1" y2="1"><stop offset="0" stop-color="#6a9000"/><stop offset="0.5" stop-color="#8f9000"/><stop offset="1" stop-color="#8a6a00"/></linearGradient></defs><rect x="1674" y="508.3" width="230.4000000000001" height="171.7" fill="#1e1e1e"/><rect x="1677" y="511.3" width="224.4000000000001" height="165.7" fill="url(#gIn1)" stroke="#888" stroke-width="1.6"/><path d="M1677 511.3 H1901.4 V659 L1677 530 Z" fill="url(#gIn2)"/><rect x="1677" y="511.3" width="224.4000000000001" height="165.7" fill="none" stroke="#8a8a8a" stroke-width="1.8"/><circle cx="1711.8" cy="589.6" r="4.8" fill="#b8b000" stroke="#111" stroke-width="1.2"/><rect x="1781" y="585.6" width="14" height="14" fill="none" stroke="#fff" stroke-width="1.8"/></svg></body></html>
